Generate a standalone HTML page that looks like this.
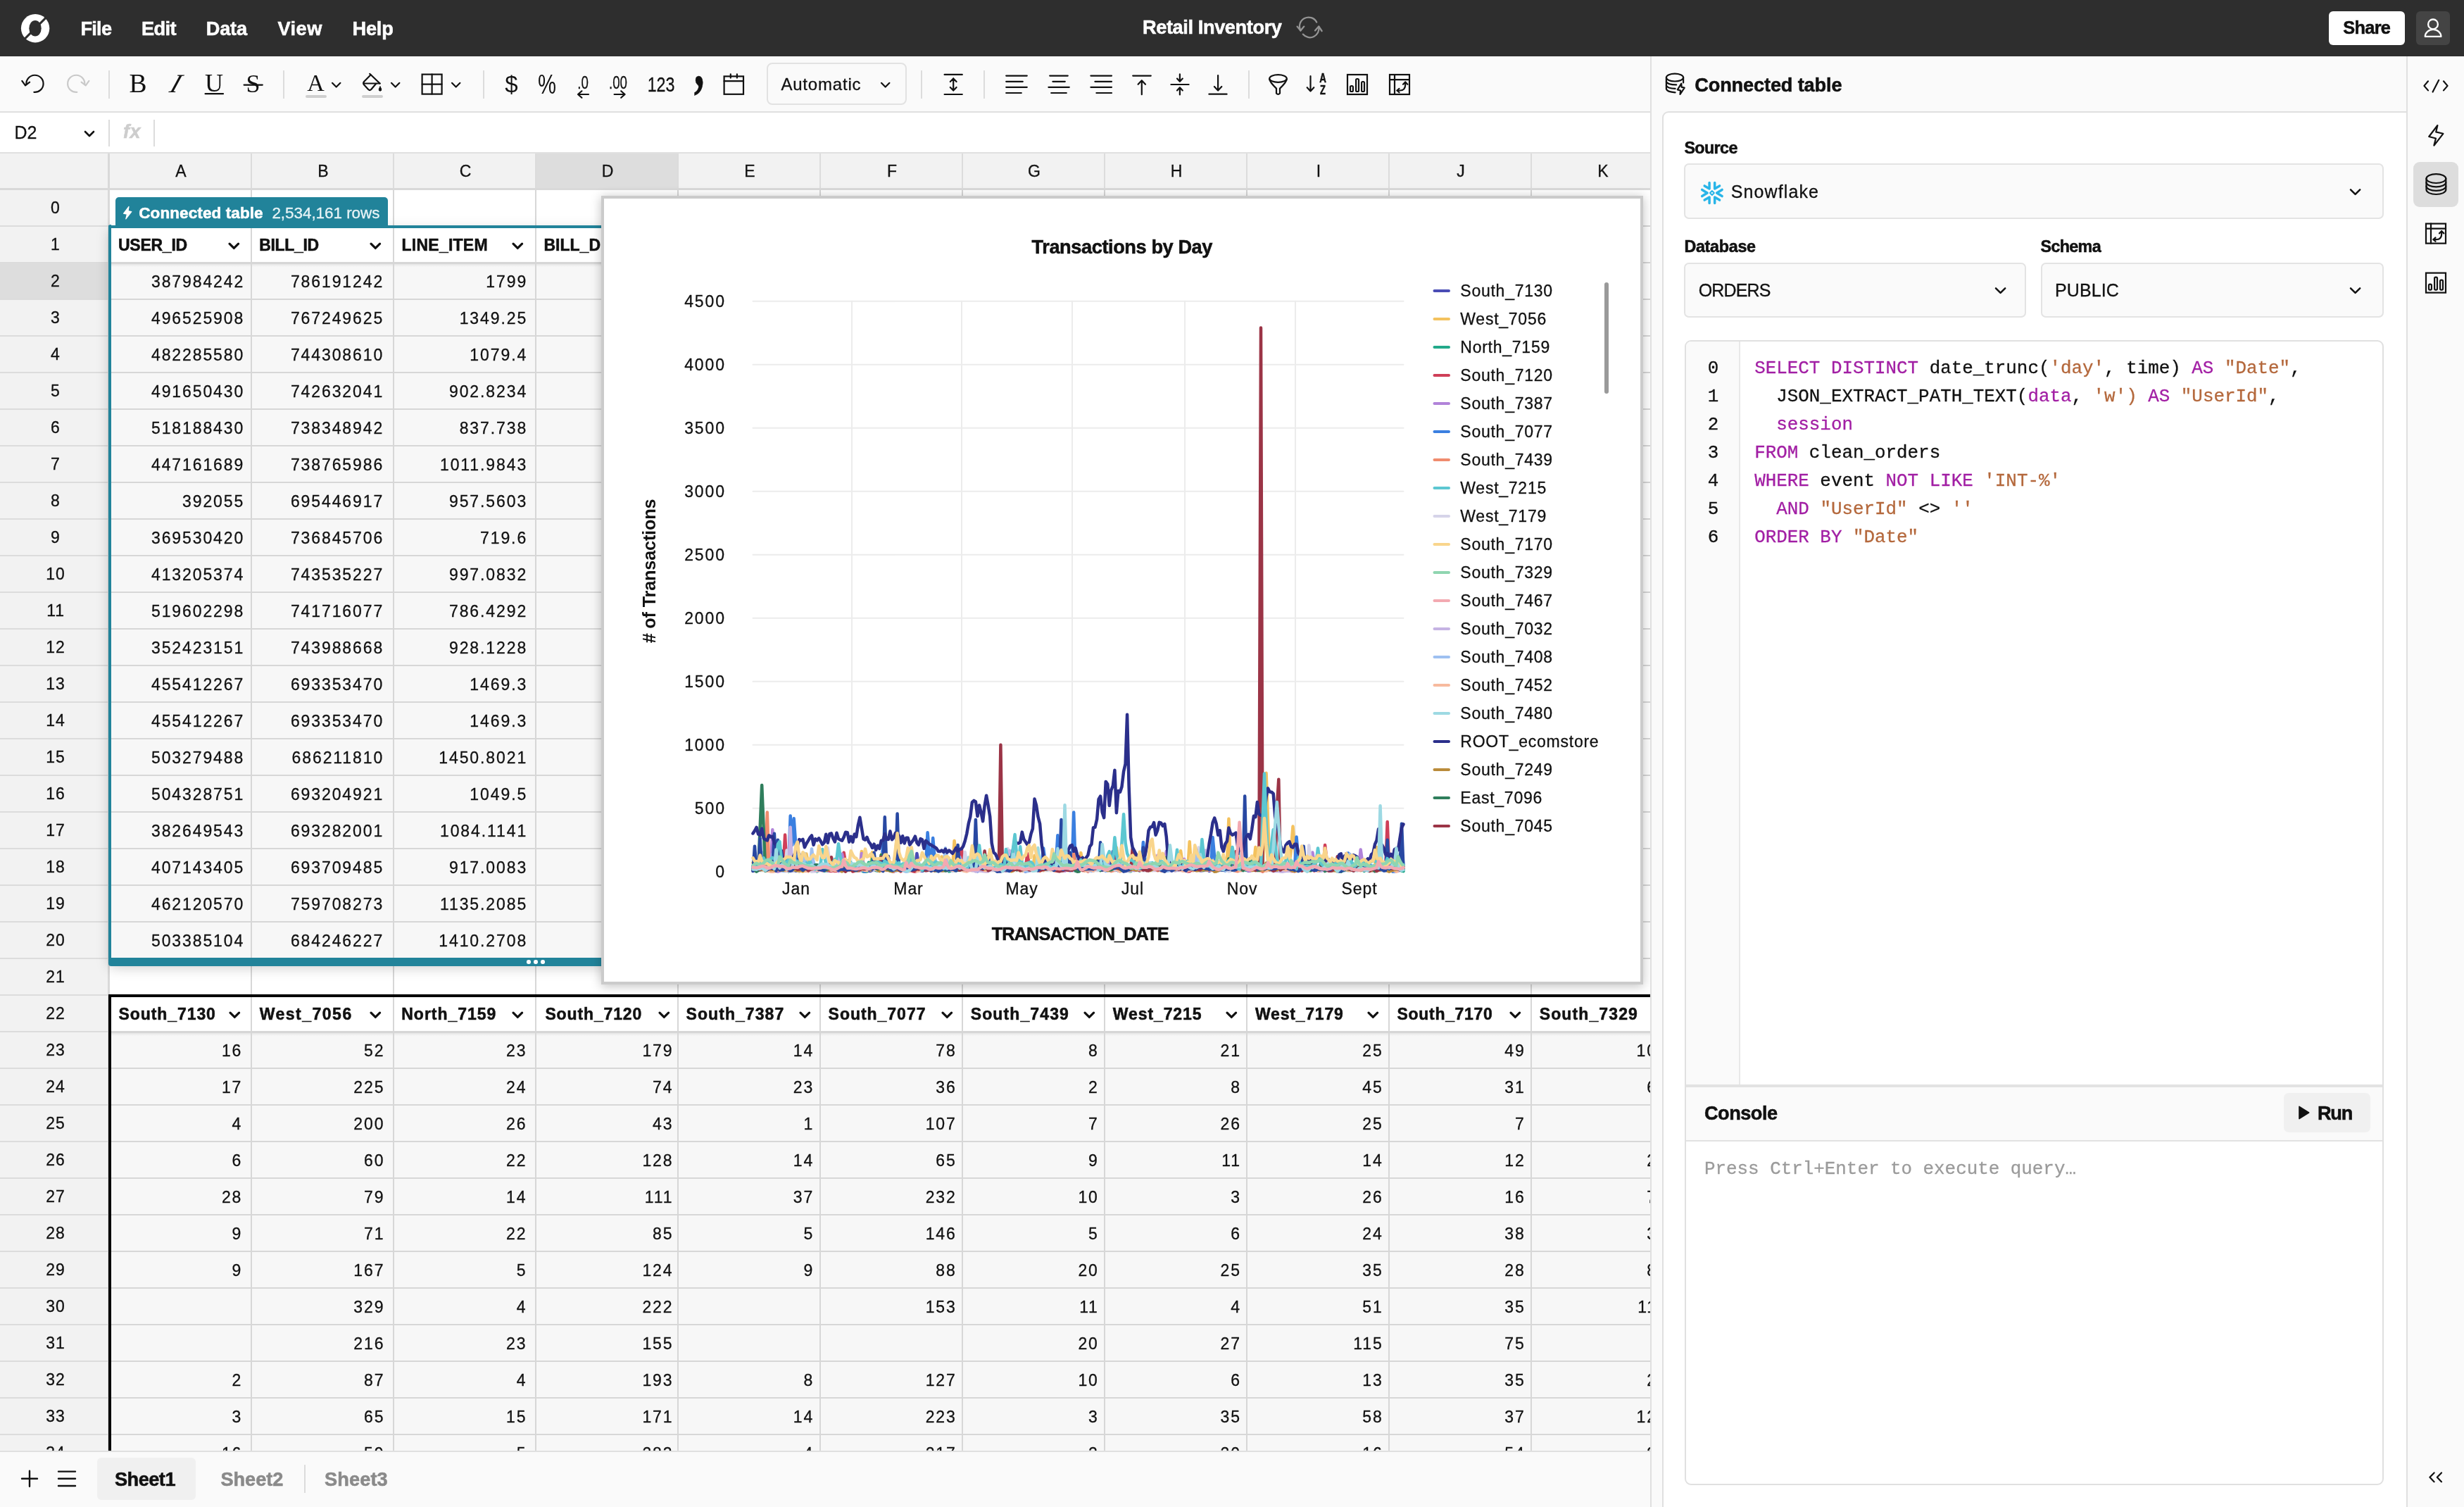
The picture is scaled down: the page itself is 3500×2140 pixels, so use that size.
<!DOCTYPE html>
<html lang="en"><head><meta charset="utf-8"><title>Retail Inventory</title>
<style>
html,body{margin:0;padding:0;background:#fff}
body{width:3500px;height:2140px;overflow:hidden;position:relative;font-family:"Liberation Sans",sans-serif;color:#111}
.t{position:absolute;white-space:nowrap}
.b{font-weight:700;-webkit-text-stroke:0.55px}
.r{-webkit-text-stroke:0.3px}
div{box-sizing:border-box}
</style></head><body>
<div id="app" style="position:absolute;left:0;top:0;width:3500px;height:2140px;will-change:transform">
<div style="position:absolute;left:0px;top:0px;width:3500px;height:80px;background:#2e2e2e"></div>
<svg style="position:absolute;left:20px;top:10px" width="60" height="60" viewBox="20 10 60 60"><circle cx="50.1" cy="40.2" r="20.2" fill="#fff"/><ellipse cx="50" cy="40.3" rx="8.7" ry="11.3" fill="#2e2e2e"/><path d="M34.2 56.1 L66.2 24.1" stroke="#2e2e2e" stroke-width="3" fill="none"/></svg>
<div class="t b" style="letter-spacing:-0.74px;left:114.4px;top:26.5px;font-size:27.2px;line-height:27.2px;color:#fff">File</div>
<div class="t b" style="letter-spacing:-0.59px;left:201.0px;top:26.5px;font-size:27.2px;line-height:27.2px;color:#fff">Edit</div>
<div class="t b" style="letter-spacing:-0.16px;left:292.7px;top:26.5px;font-size:27.2px;line-height:27.2px;color:#fff">Data</div>
<div class="t b" style="letter-spacing:0.45px;left:394.5px;top:26.5px;font-size:27.2px;line-height:27.2px;color:#fff">View</div>
<div class="t b" style="letter-spacing:-0.24px;left:500.6px;top:26.5px;font-size:27.2px;line-height:27.2px;color:#fff">Help</div>
<div class="t b" style="letter-spacing:-0.40px;left:1623.0px;top:24.5px;font-size:27.2px;line-height:27.2px;color:#fff">Retail Inventory</div>
<svg style="position:absolute;left:1830px;top:10px" width="60" height="60" viewBox="1830 10 60 60" fill="none" stroke="#949494" stroke-width="2.3" stroke-linecap="round" stroke-linejoin="round"><path d="M1870.2 31.5 A12.8 12.8 0 0 0 1847.4 43.3"/><path d="M1842.6 37.6 L1847.4 43.6 L1852.3 37.6"/><path d="M1850.8 48.6 A12.8 12.8 0 0 0 1873.2 37.8"/><path d="M1868 43.4 L1873.2 37.4 L1877.6 44"/></svg>
<div style="position:absolute;left:3308px;top:16px;width:108px;height:48px;background:#fff;border-radius:6px"></div>
<div class="t b" style="letter-spacing:-0.72px;left:3328.3px;top:26.8px;font-size:25.4px;line-height:25.4px">Share</div>
<div style="position:absolute;left:3432px;top:16px;width:48px;height:48px;background:#444;border-radius:6px"></div>
<svg style="position:absolute;left:3432px;top:16px" width="48" height="48" viewBox="3432 16 48 48" fill="none" stroke="#fff" stroke-width="2.3" stroke-linejoin="round"><circle cx="3456" cy="34.4" r="6.9"/><path d="M3444.8 51.9 A11.3 10 0 0 1 3467.4 51.9 Z"/></svg>
<div style="position:absolute;left:0px;top:80px;width:2344px;height:80px;background:#fafafa;border-bottom:2px solid #e0e0e0"></div>
<div style="position:absolute;left:153.8px;top:100px;width:2px;height:40px;background:#dcdcdc"></div>
<div style="position:absolute;left:401.8px;top:100px;width:2px;height:40px;background:#dcdcdc"></div>
<div style="position:absolute;left:686px;top:100px;width:2px;height:40px;background:#dcdcdc"></div>
<div style="position:absolute;left:1308px;top:100px;width:2px;height:40px;background:#dcdcdc"></div>
<div style="position:absolute;left:1397px;top:100px;width:2px;height:40px;background:#dcdcdc"></div>
<div style="position:absolute;left:1772.8px;top:100px;width:2px;height:40px;background:#dcdcdc"></div>
<svg style="position:absolute;left:0;top:80px" width="2344" height="80" viewBox="0 80 2344 80" fill="none" stroke="#111" stroke-width="2.2" stroke-linecap="round" stroke-linejoin="round"><path d="M37.4 119.8 A12.1 12.1 0 1 1 48.4 130.9"/><path d="M31.3 114.9 L36 121.4 L42.1 116.6"/><g stroke="#c9c9c9"><path d="M120.3 119.8 A12.1 12.1 0 1 0 109.3 130.9"/><path d="M126.4 114.9 L121.7 121.4 L115.6 116.6"/></g><path d="M291.6 133.2 L317 133.2"/><path d="M346.6 120.6 L372.8 120.6"/><path d="M525.2 104.8 L539.6 118.5"/><path d="M526.6 106.2 L517.2 115.8 Q515.2 118.2 517.2 120.6 L523.4 127.2 Q525.2 128.8 527 127.2 L534.2 118.8"/><path d="M516.6 118.5 H539.6"/><path d="M540 123 Q537.4 127 538.4 128.4 Q540 130 541.6 128.4 Q542.6 127 540 123 Z" fill="#111" stroke-width="1"/><rect x="599.6" y="105.6" width="28" height="28" stroke-linejoin="miter"/><path d="M613.6 105.6 V133.6 M599.6 119.6 H627.6"/><path d="M836 134 H821 M826.4 129.2 L821 134 L826.4 138.8"/><path d="M872.6 134 H887.6 M882.2 129.2 L887.6 134 L882.2 138.8"/><rect x="1028.6" y="108.4" width="27.4" height="25.4" stroke-linejoin="miter"/><path d="M1028.6 115.2 H1056 M1037.8 105.4 V110.6 M1046.9 105.4 V110.6"/><path d="M1341.6 105.9 H1366.8 M1341.6 134 H1366.8 M1354.2 111.4 V128.6 M1349.8 116 L1354.2 111.4 L1358.6 116 M1349.8 124 L1354.2 128.6 L1358.6 124"/><path d="M1429.2 107.6 H1458.8 M1429.2 115.8 H1452.8 M1429.2 123.8 H1458.8 M1429.2 132 H1450.8"/><path d="M1491.2 107.6 H1516.8 M1495.4 115.8 H1512.8 M1489.4 123.8 H1518.8 M1493.2 132 H1514.8"/><path d="M1549.4 107.6 H1579 M1555.4 115.8 H1579 M1549.4 123.8 H1579 M1557.4 132 H1579"/><path d="M1609.2 107.6 H1634.8 M1621.8 134.2 V114.4 M1616.6 119.8 L1621.8 114.2 L1627 119.8"/><path d="M1663.4 120 H1688.6 M1675.9 105.4 V115.6 M1672 111.6 L1675.9 115.8 L1679.8 111.6 M1675.9 134.4 V124.4 M1672 128.4 L1675.9 124.2 L1679.8 128.4"/><path d="M1717.4 133.7 H1742.6 M1730.1 107 V128.4 M1724.9 123 L1730.1 128.6 L1735.3 123"/><ellipse cx="1815.5" cy="111.5" rx="12.3" ry="5.4"/><path d="M1803.2 112.5 Q1804 117 1813 125.6 V132.6 Q1815.5 135.4 1818 132.6 V125.6 Q1827 117 1827.8 112.5"/><path d="M1861.5 108.2 V129.2 M1856.7 124.2 L1861.5 129.4 L1866.3 124.2"/><rect x="1914" y="106" width="28" height="28" stroke-linejoin="miter"/><rect x="1918" y="122" width="3.9" height="8" rx="1.6"/><rect x="1926.1" y="112" width="3.9" height="18" rx="1.6"/><rect x="1934.1" y="116" width="3.9" height="14" rx="1.6"/><rect x="1974" y="106" width="28" height="28" stroke-linejoin="miter"/><path d="M1974 113.1 H2002 M1981 106 V134"/><path d="M1984.5 128.5 H1988.4 Q1996.2 128.5 1996.2 120.6 V116.6"/><path d="M1987.5 125.8 L1984.5 128.5 L1987.5 131.2"/><path d="M1993 119.8 L1996.2 116.6 L1999.4 119.8"/></svg>
<div class="t" style="left:196.0px;transform:translateX(-50%);top:99.8px;font-size:37.5px;line-height:37.5px;font-family:'Liberation Serif',serif">B</div>
<div class="t" style="left:249.6px;transform:translateX(-50%);top:99.8px;font-size:37.5px;line-height:37.5px;font-family:'Liberation Serif',serif;font-style:italic;transform:translateX(-50%) skewX(-20deg)">I</div>
<div class="t" style="left:304.0px;transform:translateX(-50%);top:100.4px;font-size:36px;line-height:36px;font-family:'Liberation Serif',serif">U</div>
<div class="t" style="left:359.6px;transform:translateX(-50%);top:101.2px;font-size:36px;line-height:36px;font-family:'Liberation Serif',serif">S</div>
<div class="t" style="left:448.5px;transform:translateX(-50%);top:101.1px;font-size:34px;line-height:34px;font-family:'Liberation Serif',serif">A</div>
<div style="position:absolute;left:434px;top:135.4px;width:30px;height:3.6px;background:#cfcfcf;border-radius:2px"></div>
<div style="position:absolute;left:514px;top:135.4px;width:30px;height:3.6px;background:#cfcfcf;border-radius:2px"></div>
<svg style="position:absolute;left:469.3px;top:115.3px" width="17.4" height="11.4" viewBox="-8.7 -5.7 17.4 11.4" fill="none" stroke="#111" stroke-width="2.2" stroke-linecap="round" stroke-linejoin="round"><path d="M-5.7 -2.85 L0 2.85 L5.7 -2.85"/></svg>
<svg style="position:absolute;left:553.3px;top:115.3px" width="17.4" height="11.4" viewBox="-8.7 -5.7 17.4 11.4" fill="none" stroke="#111" stroke-width="2.2" stroke-linecap="round" stroke-linejoin="round"><path d="M-5.7 -2.85 L0 2.85 L5.7 -2.85"/></svg>
<svg style="position:absolute;left:639.3px;top:115.3px" width="17.4" height="11.4" viewBox="-8.7 -5.7 17.4 11.4" fill="none" stroke="#111" stroke-width="2.2" stroke-linecap="round" stroke-linejoin="round"><path d="M-5.7 -2.85 L0 2.85 L5.7 -2.85"/></svg>
<div class="t" style="left:726.5px;transform:translateX(-50%);top:102.5px;font-size:33px;line-height:33px">$</div>
<div class="t" style="left:777.0px;transform:translateX(-50%);top:100.6px;font-size:38.5px;line-height:38.5px;transform:translateX(-50%) scaleX(0.76)">%</div>
<div class="t r" style="left:827.8px;transform:translateX(-50%);top:103.7px;font-size:26px;line-height:26px;transform:translateX(-50%) scaleX(0.72)">.0</div>
<div class="t r" style="left:877.8px;transform:translateX(-50%);top:103.7px;font-size:26px;line-height:26px;transform:translateX(-50%) scaleX(0.72)">.00</div>
<div class="t r" style="left:938.5px;transform:translateX(-50%);top:105.4px;font-size:29.4px;line-height:29.4px;transform:translateX(-50%) scaleX(0.79)">123</div>
<div class="t b" style="left:992.6px;transform:translateX(-50%);top:49.2px;font-size:84px;line-height:84px;font-family:'Liberation Serif',serif;transform:translateX(-50%) scale(0.7,1.08)">,</div>
<div class="t b" style="left:1878.8px;transform:translateX(-50%);top:101.5px;font-size:18.6px;line-height:18.6px;transform:translateX(-50%) scaleX(0.72)">A</div>
<div class="t b" style="left:1878.6px;transform:translateX(-50%);top:119.3px;font-size:18px;line-height:18px;transform:translateX(-50%) scaleX(0.72)">Z</div>
<div style="position:absolute;left:1088.5px;top:88.5px;width:199px;height:60.5px;border:2px solid #e2e2e2;border-radius:8px;background:#fafafa"></div>
<div class="t r" style="letter-spacing:0.81px;left:1109.4px;top:107.5px;font-size:24px;line-height:24px">Automatic</div>
<svg style="position:absolute;left:1249.3px;top:115.3px" width="17.4" height="11.4" viewBox="-8.7 -5.7 17.4 11.4" fill="none" stroke="#111" stroke-width="2.2" stroke-linecap="round" stroke-linejoin="round"><path d="M-5.7 -2.85 L0 2.85 L5.7 -2.85"/></svg>
<div style="position:absolute;left:0px;top:160px;width:2344px;height:58px;background:#fff;border-bottom:2px solid #e0e0e0"></div>
<div class="t r" style="letter-spacing:0.02px;left:20.5px;top:175.8px;font-size:25px;line-height:25px">D2</div>
<svg style="position:absolute;left:118px;top:184px" width="18" height="12" viewBox="-9 -6 18 12" fill="none" stroke="#111" stroke-width="2.6" stroke-linecap="round" stroke-linejoin="round"><path d="M-6 -3 L0 3 L6 -3"/></svg>
<div style="position:absolute;left:154px;top:170px;width:2px;height:38px;background:#dcdcdc"></div>
<div class="t b" style="letter-spacing:0.50px;left:175.0px;top:174.1px;font-size:27px;line-height:27px;color:#cdcdcd;font-style:italic">fx</div>
<div style="position:absolute;left:218px;top:170px;width:2px;height:38px;background:#dcdcdc"></div>
<div style="position:absolute;left:0;top:0;width:3500px;height:2140px;clip-path:inset(0 1156px 80px 0)"><div style="position:absolute;left:0px;top:218px;width:2344px;height:1842px;background:#fff"></div>
<div style="position:absolute;left:0px;top:218px;width:2344px;height:50px;background:#f2f2f2"></div>
<div style="position:absolute;left:0px;top:268px;width:154px;height:1792px;background:#f2f2f2"></div>
<div style="position:absolute;left:762px;top:218px;width:200px;height:49px;background:#dddddd"></div>
<div style="position:absolute;left:0px;top:374px;width:154px;height:50px;background:#dddddd"></div>
<div style="position:absolute;left:158px;top:374px;width:1010px;height:986px;background:#f7f7f7"></div>
<div style="position:absolute;left:158px;top:1466px;width:2186px;height:600px;background:#f7f7f7"></div>
<div style="position:absolute;left:158px;top:375.4px;width:1010px;height:3.4px;background:linear-gradient(#e6e6e6,#f7f7f7)"></div>
<div style="position:absolute;left:158px;top:1467.4px;width:2186px;height:3.4px;background:linear-gradient(#e6e6e6,#f7f7f7)"></div>
<div style="position:absolute;left:0px;top:320px;width:154px;height:2px;background:#dcdcdc"></div>
<div style="position:absolute;left:154px;top:320px;width:2190px;height:2px;background:#d7d7d7"></div>
<div style="position:absolute;left:0px;top:372px;width:154px;height:2px;background:#dcdcdc"></div>
<div style="position:absolute;left:154px;top:372px;width:2190px;height:2px;background:#d7d7d7"></div>
<div style="position:absolute;left:0px;top:424px;width:154px;height:2px;background:#dcdcdc"></div>
<div style="position:absolute;left:154px;top:424px;width:2190px;height:2px;background:#d7d7d7"></div>
<div style="position:absolute;left:0px;top:476px;width:154px;height:2px;background:#dcdcdc"></div>
<div style="position:absolute;left:154px;top:476px;width:2190px;height:2px;background:#d7d7d7"></div>
<div style="position:absolute;left:0px;top:528px;width:154px;height:2px;background:#dcdcdc"></div>
<div style="position:absolute;left:154px;top:528px;width:2190px;height:2px;background:#d7d7d7"></div>
<div style="position:absolute;left:0px;top:580px;width:154px;height:2px;background:#dcdcdc"></div>
<div style="position:absolute;left:154px;top:580px;width:2190px;height:2px;background:#d7d7d7"></div>
<div style="position:absolute;left:0px;top:632px;width:154px;height:2px;background:#dcdcdc"></div>
<div style="position:absolute;left:154px;top:632px;width:2190px;height:2px;background:#d7d7d7"></div>
<div style="position:absolute;left:0px;top:684px;width:154px;height:2px;background:#dcdcdc"></div>
<div style="position:absolute;left:154px;top:684px;width:2190px;height:2px;background:#d7d7d7"></div>
<div style="position:absolute;left:0px;top:736px;width:154px;height:2px;background:#dcdcdc"></div>
<div style="position:absolute;left:154px;top:736px;width:2190px;height:2px;background:#d7d7d7"></div>
<div style="position:absolute;left:0px;top:788px;width:154px;height:2px;background:#dcdcdc"></div>
<div style="position:absolute;left:154px;top:788px;width:2190px;height:2px;background:#d7d7d7"></div>
<div style="position:absolute;left:0px;top:840px;width:154px;height:2px;background:#dcdcdc"></div>
<div style="position:absolute;left:154px;top:840px;width:2190px;height:2px;background:#d7d7d7"></div>
<div style="position:absolute;left:0px;top:892px;width:154px;height:2px;background:#dcdcdc"></div>
<div style="position:absolute;left:154px;top:892px;width:2190px;height:2px;background:#d7d7d7"></div>
<div style="position:absolute;left:0px;top:944px;width:154px;height:2px;background:#dcdcdc"></div>
<div style="position:absolute;left:154px;top:944px;width:2190px;height:2px;background:#d7d7d7"></div>
<div style="position:absolute;left:0px;top:996px;width:154px;height:2px;background:#dcdcdc"></div>
<div style="position:absolute;left:154px;top:996px;width:2190px;height:2px;background:#d7d7d7"></div>
<div style="position:absolute;left:0px;top:1048px;width:154px;height:2px;background:#dcdcdc"></div>
<div style="position:absolute;left:154px;top:1048px;width:2190px;height:2px;background:#d7d7d7"></div>
<div style="position:absolute;left:0px;top:1100px;width:154px;height:2px;background:#dcdcdc"></div>
<div style="position:absolute;left:154px;top:1100px;width:2190px;height:2px;background:#d7d7d7"></div>
<div style="position:absolute;left:0px;top:1152px;width:154px;height:2px;background:#dcdcdc"></div>
<div style="position:absolute;left:154px;top:1152px;width:2190px;height:2px;background:#d7d7d7"></div>
<div style="position:absolute;left:0px;top:1204px;width:154px;height:2px;background:#dcdcdc"></div>
<div style="position:absolute;left:154px;top:1204px;width:2190px;height:2px;background:#d7d7d7"></div>
<div style="position:absolute;left:0px;top:1256px;width:154px;height:2px;background:#dcdcdc"></div>
<div style="position:absolute;left:154px;top:1256px;width:2190px;height:2px;background:#d7d7d7"></div>
<div style="position:absolute;left:0px;top:1308px;width:154px;height:2px;background:#dcdcdc"></div>
<div style="position:absolute;left:154px;top:1308px;width:2190px;height:2px;background:#d7d7d7"></div>
<div style="position:absolute;left:0px;top:1360px;width:154px;height:2px;background:#dcdcdc"></div>
<div style="position:absolute;left:154px;top:1360px;width:2190px;height:2px;background:#d7d7d7"></div>
<div style="position:absolute;left:0px;top:1412px;width:154px;height:2px;background:#dcdcdc"></div>
<div style="position:absolute;left:154px;top:1412px;width:2190px;height:2px;background:#d7d7d7"></div>
<div style="position:absolute;left:0px;top:1464px;width:154px;height:2px;background:#dcdcdc"></div>
<div style="position:absolute;left:154px;top:1464px;width:2190px;height:2px;background:#d7d7d7"></div>
<div style="position:absolute;left:0px;top:1516px;width:154px;height:2px;background:#dcdcdc"></div>
<div style="position:absolute;left:154px;top:1516px;width:2190px;height:2px;background:#d7d7d7"></div>
<div style="position:absolute;left:0px;top:1568px;width:154px;height:2px;background:#dcdcdc"></div>
<div style="position:absolute;left:154px;top:1568px;width:2190px;height:2px;background:#d7d7d7"></div>
<div style="position:absolute;left:0px;top:1620px;width:154px;height:2px;background:#dcdcdc"></div>
<div style="position:absolute;left:154px;top:1620px;width:2190px;height:2px;background:#d7d7d7"></div>
<div style="position:absolute;left:0px;top:1672px;width:154px;height:2px;background:#dcdcdc"></div>
<div style="position:absolute;left:154px;top:1672px;width:2190px;height:2px;background:#d7d7d7"></div>
<div style="position:absolute;left:0px;top:1724px;width:154px;height:2px;background:#dcdcdc"></div>
<div style="position:absolute;left:154px;top:1724px;width:2190px;height:2px;background:#d7d7d7"></div>
<div style="position:absolute;left:0px;top:1776px;width:154px;height:2px;background:#dcdcdc"></div>
<div style="position:absolute;left:154px;top:1776px;width:2190px;height:2px;background:#d7d7d7"></div>
<div style="position:absolute;left:0px;top:1828px;width:154px;height:2px;background:#dcdcdc"></div>
<div style="position:absolute;left:154px;top:1828px;width:2190px;height:2px;background:#d7d7d7"></div>
<div style="position:absolute;left:0px;top:1880px;width:154px;height:2px;background:#dcdcdc"></div>
<div style="position:absolute;left:154px;top:1880px;width:2190px;height:2px;background:#d7d7d7"></div>
<div style="position:absolute;left:0px;top:1932px;width:154px;height:2px;background:#dcdcdc"></div>
<div style="position:absolute;left:154px;top:1932px;width:2190px;height:2px;background:#d7d7d7"></div>
<div style="position:absolute;left:0px;top:1984px;width:154px;height:2px;background:#dcdcdc"></div>
<div style="position:absolute;left:154px;top:1984px;width:2190px;height:2px;background:#d7d7d7"></div>
<div style="position:absolute;left:0px;top:2036px;width:154px;height:2px;background:#dcdcdc"></div>
<div style="position:absolute;left:154px;top:2036px;width:2190px;height:2px;background:#d7d7d7"></div>
<div style="position:absolute;left:0px;top:2088px;width:154px;height:2px;background:#dcdcdc"></div>
<div style="position:absolute;left:154px;top:2088px;width:2190px;height:2px;background:#d7d7d7"></div>
<div style="position:absolute;left:356px;top:218px;width:2px;height:50px;background:#dcdcdc"></div>
<div style="position:absolute;left:356px;top:268px;width:2px;height:1792px;background:#d7d7d7"></div>
<div style="position:absolute;left:558px;top:218px;width:2px;height:50px;background:#dcdcdc"></div>
<div style="position:absolute;left:558px;top:268px;width:2px;height:1792px;background:#d7d7d7"></div>
<div style="position:absolute;left:760px;top:218px;width:2px;height:50px;background:#dcdcdc"></div>
<div style="position:absolute;left:760px;top:268px;width:2px;height:1792px;background:#d7d7d7"></div>
<div style="position:absolute;left:962px;top:218px;width:2px;height:50px;background:#dcdcdc"></div>
<div style="position:absolute;left:962px;top:268px;width:2px;height:1792px;background:#d7d7d7"></div>
<div style="position:absolute;left:1164px;top:218px;width:2px;height:50px;background:#dcdcdc"></div>
<div style="position:absolute;left:1164px;top:268px;width:2px;height:1792px;background:#d7d7d7"></div>
<div style="position:absolute;left:1366px;top:218px;width:2px;height:50px;background:#dcdcdc"></div>
<div style="position:absolute;left:1366px;top:268px;width:2px;height:1792px;background:#d7d7d7"></div>
<div style="position:absolute;left:1568px;top:218px;width:2px;height:50px;background:#dcdcdc"></div>
<div style="position:absolute;left:1568px;top:268px;width:2px;height:1792px;background:#d7d7d7"></div>
<div style="position:absolute;left:1770px;top:218px;width:2px;height:50px;background:#dcdcdc"></div>
<div style="position:absolute;left:1770px;top:268px;width:2px;height:1792px;background:#d7d7d7"></div>
<div style="position:absolute;left:1972px;top:218px;width:2px;height:50px;background:#dcdcdc"></div>
<div style="position:absolute;left:1972px;top:268px;width:2px;height:1792px;background:#d7d7d7"></div>
<div style="position:absolute;left:2174px;top:218px;width:2px;height:50px;background:#dcdcdc"></div>
<div style="position:absolute;left:2174px;top:268px;width:2px;height:1792px;background:#d7d7d7"></div>
<div style="position:absolute;left:2376px;top:218px;width:2px;height:50px;background:#dcdcdc"></div>
<div style="position:absolute;left:2376px;top:268px;width:2px;height:1792px;background:#d7d7d7"></div>
<div style="position:absolute;left:0px;top:266.5px;width:2344px;height:3px;background:#d9d9d9"></div>
<div style="position:absolute;left:153px;top:218px;width:3px;height:1842px;background:#d9d9d9"></div>
<div class="t r" style="left:257.0px;transform:translateX(-50%);top:232.0px;font-size:23px;line-height:23px">A</div>
<div class="t r" style="left:459.0px;transform:translateX(-50%);top:232.0px;font-size:23px;line-height:23px">B</div>
<div class="t r" style="left:661.0px;transform:translateX(-50%);top:232.0px;font-size:23px;line-height:23px">C</div>
<div class="t r" style="left:863.0px;transform:translateX(-50%);top:232.0px;font-size:23px;line-height:23px">D</div>
<div class="t r" style="left:1065.0px;transform:translateX(-50%);top:232.0px;font-size:23px;line-height:23px">E</div>
<div class="t r" style="left:1267.0px;transform:translateX(-50%);top:232.0px;font-size:23px;line-height:23px">F</div>
<div class="t r" style="left:1469.0px;transform:translateX(-50%);top:232.0px;font-size:23px;line-height:23px">G</div>
<div class="t r" style="left:1671.0px;transform:translateX(-50%);top:232.0px;font-size:23px;line-height:23px">H</div>
<div class="t r" style="left:1873.0px;transform:translateX(-50%);top:232.0px;font-size:23px;line-height:23px">I</div>
<div class="t r" style="left:2075.0px;transform:translateX(-50%);top:232.0px;font-size:23px;line-height:23px">J</div>
<div class="t r" style="left:2277.0px;transform:translateX(-50%);top:232.0px;font-size:23px;line-height:23px">K</div>
<div class="t r" style="left:78.5px;transform:translateX(-50%);top:283.5px;font-size:23px;line-height:23px">0</div>
<div class="t r" style="left:78.5px;transform:translateX(-50%);top:335.5px;font-size:23px;line-height:23px">1</div>
<div class="t r" style="left:78.5px;transform:translateX(-50%);top:387.5px;font-size:23px;line-height:23px">2</div>
<div class="t r" style="left:78.5px;transform:translateX(-50%);top:439.5px;font-size:23px;line-height:23px">3</div>
<div class="t r" style="left:78.5px;transform:translateX(-50%);top:491.5px;font-size:23px;line-height:23px">4</div>
<div class="t r" style="left:78.5px;transform:translateX(-50%);top:543.5px;font-size:23px;line-height:23px">5</div>
<div class="t r" style="left:78.5px;transform:translateX(-50%);top:595.5px;font-size:23px;line-height:23px">6</div>
<div class="t r" style="left:78.5px;transform:translateX(-50%);top:647.5px;font-size:23px;line-height:23px">7</div>
<div class="t r" style="left:78.5px;transform:translateX(-50%);top:699.5px;font-size:23px;line-height:23px">8</div>
<div class="t r" style="left:78.5px;transform:translateX(-50%);top:751.5px;font-size:23px;line-height:23px">9</div>
<div class="t r" style="letter-spacing:0.90px;left:79.0px;transform:translateX(-50%);top:803.5px;font-size:23px;line-height:23px">10</div>
<div class="t r" style="letter-spacing:0.90px;left:79.0px;transform:translateX(-50%);top:855.5px;font-size:23px;line-height:23px">11</div>
<div class="t r" style="letter-spacing:0.90px;left:79.0px;transform:translateX(-50%);top:907.5px;font-size:23px;line-height:23px">12</div>
<div class="t r" style="letter-spacing:0.90px;left:79.0px;transform:translateX(-50%);top:959.5px;font-size:23px;line-height:23px">13</div>
<div class="t r" style="letter-spacing:0.90px;left:79.0px;transform:translateX(-50%);top:1011.5px;font-size:23px;line-height:23px">14</div>
<div class="t r" style="letter-spacing:0.90px;left:79.0px;transform:translateX(-50%);top:1063.5px;font-size:23px;line-height:23px">15</div>
<div class="t r" style="letter-spacing:0.90px;left:79.0px;transform:translateX(-50%);top:1115.5px;font-size:23px;line-height:23px">16</div>
<div class="t r" style="letter-spacing:0.90px;left:79.0px;transform:translateX(-50%);top:1167.5px;font-size:23px;line-height:23px">17</div>
<div class="t r" style="letter-spacing:0.90px;left:79.0px;transform:translateX(-50%);top:1219.5px;font-size:23px;line-height:23px">18</div>
<div class="t r" style="letter-spacing:0.90px;left:79.0px;transform:translateX(-50%);top:1271.5px;font-size:23px;line-height:23px">19</div>
<div class="t r" style="letter-spacing:0.90px;left:79.0px;transform:translateX(-50%);top:1323.5px;font-size:23px;line-height:23px">20</div>
<div class="t r" style="letter-spacing:0.90px;left:79.0px;transform:translateX(-50%);top:1375.5px;font-size:23px;line-height:23px">21</div>
<div class="t r" style="letter-spacing:0.90px;left:79.0px;transform:translateX(-50%);top:1427.5px;font-size:23px;line-height:23px">22</div>
<div class="t r" style="letter-spacing:0.90px;left:79.0px;transform:translateX(-50%);top:1479.5px;font-size:23px;line-height:23px">23</div>
<div class="t r" style="letter-spacing:0.90px;left:79.0px;transform:translateX(-50%);top:1531.5px;font-size:23px;line-height:23px">24</div>
<div class="t r" style="letter-spacing:0.90px;left:79.0px;transform:translateX(-50%);top:1583.5px;font-size:23px;line-height:23px">25</div>
<div class="t r" style="letter-spacing:0.90px;left:79.0px;transform:translateX(-50%);top:1635.5px;font-size:23px;line-height:23px">26</div>
<div class="t r" style="letter-spacing:0.90px;left:79.0px;transform:translateX(-50%);top:1687.5px;font-size:23px;line-height:23px">27</div>
<div class="t r" style="letter-spacing:0.90px;left:79.0px;transform:translateX(-50%);top:1739.5px;font-size:23px;line-height:23px">28</div>
<div class="t r" style="letter-spacing:0.90px;left:79.0px;transform:translateX(-50%);top:1791.5px;font-size:23px;line-height:23px">29</div>
<div class="t r" style="letter-spacing:0.90px;left:79.0px;transform:translateX(-50%);top:1843.5px;font-size:23px;line-height:23px">30</div>
<div class="t r" style="letter-spacing:0.90px;left:79.0px;transform:translateX(-50%);top:1895.5px;font-size:23px;line-height:23px">31</div>
<div class="t r" style="letter-spacing:0.90px;left:79.0px;transform:translateX(-50%);top:1947.5px;font-size:23px;line-height:23px">32</div>
<div class="t r" style="letter-spacing:0.90px;left:79.0px;transform:translateX(-50%);top:1999.5px;font-size:23px;line-height:23px">33</div>
<div class="t r" style="letter-spacing:0.90px;left:79.0px;transform:translateX(-50%);top:2051.5px;font-size:23px;line-height:23px">34</div>
<div style="position:absolute;left:156px;top:323px;width:1012px;height:1046px;box-shadow:0 4px 18px rgba(0,0,0,0.22);background:transparent"></div>
<div style="position:absolute;left:158px;top:323px;width:1010px;height:50px;background:#fff"></div>
<div style="position:absolute;left:356px;top:323px;width:2px;height:50px;background:#d7d7d7"></div>
<div style="position:absolute;left:558px;top:323px;width:2px;height:50px;background:#d7d7d7"></div>
<div style="position:absolute;left:760px;top:323px;width:2px;height:50px;background:#d7d7d7"></div>
<div style="position:absolute;left:962px;top:323px;width:2px;height:50px;background:#d7d7d7"></div>
<div style="position:absolute;left:1164px;top:323px;width:2px;height:50px;background:#d7d7d7"></div>
<div style="position:absolute;left:158px;top:372px;width:1010px;height:3.4px;background:#d6d6d6"></div>
<div class="t b" style="letter-spacing:-0.26px;left:168.0px;top:337.1px;font-size:23px;line-height:23px">USER_ID</div>
<svg style="position:absolute;left:323.4px;top:343px" width="18.6" height="12.6" viewBox="-9.3 -6.3 18.6 12.6" fill="none" stroke="#111" stroke-width="3.2" stroke-linecap="round" stroke-linejoin="round"><path d="M-6.3 -3.15 L0 3.15 L6.3 -3.15"/></svg>
<div class="t b" style="letter-spacing:-0.31px;left:368.2px;top:337.1px;font-size:23px;line-height:23px">BILL_ID</div>
<svg style="position:absolute;left:523.6px;top:343px" width="18.6" height="12.6" viewBox="-9.3 -6.3 18.6 12.6" fill="none" stroke="#111" stroke-width="3.2" stroke-linecap="round" stroke-linejoin="round"><path d="M-6.3 -3.15 L0 3.15 L6.3 -3.15"/></svg>
<div class="t b" style="letter-spacing:0.25px;left:570.5px;top:337.1px;font-size:23px;line-height:23px">LINE_ITEM</div>
<svg style="position:absolute;left:725.6px;top:343px" width="18.6" height="12.6" viewBox="-9.3 -6.3 18.6 12.6" fill="none" stroke="#111" stroke-width="3.2" stroke-linecap="round" stroke-linejoin="round"><path d="M-6.3 -3.15 L0 3.15 L6.3 -3.15"/></svg>
<div class="t b" style="left:772.5px;top:337.1px;font-size:23px;line-height:23px">BILL_DISCOUNT</div>
<div class="t r" style="letter-spacing:1.90px;right:3152.8px;top:388.5px;font-size:23px;line-height:23px">387984242</div>
<div class="t r" style="letter-spacing:1.90px;right:2954.9px;top:388.5px;font-size:23px;line-height:23px">786191242</div>
<div class="t r" style="letter-spacing:1.90px;right:2750.9px;top:388.5px;font-size:23px;line-height:23px">1799</div>
<div class="t r" style="letter-spacing:1.90px;right:3152.8px;top:440.5px;font-size:23px;line-height:23px">496525908</div>
<div class="t r" style="letter-spacing:1.90px;right:2954.9px;top:440.5px;font-size:23px;line-height:23px">767249625</div>
<div class="t r" style="letter-spacing:1.90px;right:2750.9px;top:440.5px;font-size:23px;line-height:23px">1349.25</div>
<div class="t r" style="letter-spacing:1.90px;right:3152.8px;top:492.5px;font-size:23px;line-height:23px">482285580</div>
<div class="t r" style="letter-spacing:1.90px;right:2954.9px;top:492.5px;font-size:23px;line-height:23px">744308610</div>
<div class="t r" style="letter-spacing:1.90px;right:2750.9px;top:492.5px;font-size:23px;line-height:23px">1079.4</div>
<div class="t r" style="letter-spacing:1.90px;right:3152.8px;top:544.5px;font-size:23px;line-height:23px">491650430</div>
<div class="t r" style="letter-spacing:1.90px;right:2954.9px;top:544.5px;font-size:23px;line-height:23px">742632041</div>
<div class="t r" style="letter-spacing:1.90px;right:2750.9px;top:544.5px;font-size:23px;line-height:23px">902.8234</div>
<div class="t r" style="letter-spacing:1.90px;right:3152.8px;top:596.5px;font-size:23px;line-height:23px">518188430</div>
<div class="t r" style="letter-spacing:1.90px;right:2954.9px;top:596.5px;font-size:23px;line-height:23px">738348942</div>
<div class="t r" style="letter-spacing:1.90px;right:2750.9px;top:596.5px;font-size:23px;line-height:23px">837.738</div>
<div class="t r" style="letter-spacing:1.90px;right:3152.8px;top:648.5px;font-size:23px;line-height:23px">447161689</div>
<div class="t r" style="letter-spacing:1.90px;right:2954.9px;top:648.5px;font-size:23px;line-height:23px">738765986</div>
<div class="t r" style="letter-spacing:1.90px;right:2750.9px;top:648.5px;font-size:23px;line-height:23px">1011.9843</div>
<div class="t r" style="letter-spacing:1.90px;right:3152.8px;top:700.5px;font-size:23px;line-height:23px">392055</div>
<div class="t r" style="letter-spacing:1.90px;right:2954.9px;top:700.5px;font-size:23px;line-height:23px">695446917</div>
<div class="t r" style="letter-spacing:1.90px;right:2750.9px;top:700.5px;font-size:23px;line-height:23px">957.5603</div>
<div class="t r" style="letter-spacing:1.90px;right:3152.8px;top:752.5px;font-size:23px;line-height:23px">369530420</div>
<div class="t r" style="letter-spacing:1.90px;right:2954.9px;top:752.5px;font-size:23px;line-height:23px">736845706</div>
<div class="t r" style="letter-spacing:1.90px;right:2750.9px;top:752.5px;font-size:23px;line-height:23px">719.6</div>
<div class="t r" style="letter-spacing:1.90px;right:3152.8px;top:804.5px;font-size:23px;line-height:23px">413205374</div>
<div class="t r" style="letter-spacing:1.90px;right:2954.9px;top:804.5px;font-size:23px;line-height:23px">743535227</div>
<div class="t r" style="letter-spacing:1.90px;right:2750.9px;top:804.5px;font-size:23px;line-height:23px">997.0832</div>
<div class="t r" style="letter-spacing:1.90px;right:3152.8px;top:856.5px;font-size:23px;line-height:23px">519602298</div>
<div class="t r" style="letter-spacing:1.90px;right:2954.9px;top:856.5px;font-size:23px;line-height:23px">741716077</div>
<div class="t r" style="letter-spacing:1.90px;right:2750.9px;top:856.5px;font-size:23px;line-height:23px">786.4292</div>
<div class="t r" style="letter-spacing:1.90px;right:3152.8px;top:908.5px;font-size:23px;line-height:23px">352423151</div>
<div class="t r" style="letter-spacing:1.90px;right:2954.9px;top:908.5px;font-size:23px;line-height:23px">743988668</div>
<div class="t r" style="letter-spacing:1.90px;right:2750.9px;top:908.5px;font-size:23px;line-height:23px">928.1228</div>
<div class="t r" style="letter-spacing:1.90px;right:3152.8px;top:960.5px;font-size:23px;line-height:23px">455412267</div>
<div class="t r" style="letter-spacing:1.90px;right:2954.9px;top:960.5px;font-size:23px;line-height:23px">693353470</div>
<div class="t r" style="letter-spacing:1.90px;right:2750.9px;top:960.5px;font-size:23px;line-height:23px">1469.3</div>
<div class="t r" style="letter-spacing:1.90px;right:3152.8px;top:1012.5px;font-size:23px;line-height:23px">455412267</div>
<div class="t r" style="letter-spacing:1.90px;right:2954.9px;top:1012.5px;font-size:23px;line-height:23px">693353470</div>
<div class="t r" style="letter-spacing:1.90px;right:2750.9px;top:1012.5px;font-size:23px;line-height:23px">1469.3</div>
<div class="t r" style="letter-spacing:1.90px;right:3152.8px;top:1064.5px;font-size:23px;line-height:23px">503279488</div>
<div class="t r" style="letter-spacing:1.90px;right:2954.9px;top:1064.5px;font-size:23px;line-height:23px">686211810</div>
<div class="t r" style="letter-spacing:1.90px;right:2750.9px;top:1064.5px;font-size:23px;line-height:23px">1450.8021</div>
<div class="t r" style="letter-spacing:1.90px;right:3152.8px;top:1116.5px;font-size:23px;line-height:23px">504328751</div>
<div class="t r" style="letter-spacing:1.90px;right:2954.9px;top:1116.5px;font-size:23px;line-height:23px">693204921</div>
<div class="t r" style="letter-spacing:1.90px;right:2750.9px;top:1116.5px;font-size:23px;line-height:23px">1049.5</div>
<div class="t r" style="letter-spacing:1.90px;right:3152.8px;top:1168.5px;font-size:23px;line-height:23px">382649543</div>
<div class="t r" style="letter-spacing:1.90px;right:2954.9px;top:1168.5px;font-size:23px;line-height:23px">693282001</div>
<div class="t r" style="letter-spacing:1.90px;right:2750.9px;top:1168.5px;font-size:23px;line-height:23px">1084.1141</div>
<div class="t r" style="letter-spacing:1.90px;right:3152.8px;top:1220.5px;font-size:23px;line-height:23px">407143405</div>
<div class="t r" style="letter-spacing:1.90px;right:2954.9px;top:1220.5px;font-size:23px;line-height:23px">693709485</div>
<div class="t r" style="letter-spacing:1.90px;right:2750.9px;top:1220.5px;font-size:23px;line-height:23px">917.0083</div>
<div class="t r" style="letter-spacing:1.90px;right:3152.8px;top:1272.5px;font-size:23px;line-height:23px">462120570</div>
<div class="t r" style="letter-spacing:1.90px;right:2954.9px;top:1272.5px;font-size:23px;line-height:23px">759708273</div>
<div class="t r" style="letter-spacing:1.90px;right:2750.9px;top:1272.5px;font-size:23px;line-height:23px">1135.2085</div>
<div class="t r" style="letter-spacing:1.90px;right:3152.8px;top:1324.5px;font-size:23px;line-height:23px">503385104</div>
<div class="t r" style="letter-spacing:1.90px;right:2954.9px;top:1324.5px;font-size:23px;line-height:23px">684246227</div>
<div class="t r" style="letter-spacing:1.90px;right:2750.9px;top:1324.5px;font-size:23px;line-height:23px">1410.2708</div>
<div style="position:absolute;left:154px;top:320px;width:1014px;height:4px;background:#21839a"></div>
<div style="position:absolute;left:154px;top:319px;width:4px;height:1046px;background:#21839a;border-radius:3px 0 0 3px"></div>
<div style="position:absolute;left:154px;top:1360px;width:1014px;height:12px;background:#21839a;border-radius:0 0 0 4px"></div>
<div style="position:absolute;left:748.3px;top:1363.2px;width:5.6px;height:5.6px;background:#fff;border-radius:50%"></div>
<div style="position:absolute;left:758.3px;top:1363.2px;width:5.6px;height:5.6px;background:#fff;border-radius:50%"></div>
<div style="position:absolute;left:768.3px;top:1363.2px;width:5.6px;height:5.6px;background:#fff;border-radius:50%"></div>
<div style="position:absolute;left:164.4px;top:280.4px;width:387px;height:41px;background:#21839a;border-radius:5px 5px 0 0"></div>
<svg style="position:absolute;left:172px;top:286px" width="18" height="28" viewBox="172 286 18 28"><path d="M183 293.4 L175.6 303.2 L180.4 304.2 L178.8 311 L186.8 300.6 L182 299.6 Z" fill="#fff" stroke="#fff" stroke-width="1.2" stroke-linejoin="round"/></svg>
<div class="t b" style="letter-spacing:0.10px;left:197.2px;top:291.8px;font-size:22.5px;line-height:22.5px;color:#fff">Connected table</div>
<div class="t r" style="letter-spacing:-0.06px;left:386.4px;top:291.8px;font-size:22.5px;line-height:22.5px;color:#e6f3f6">2,534,161 rows</div>
<div style="position:absolute;left:158px;top:1415px;width:2186px;height:50px;background:#fff"></div>
<div style="position:absolute;left:356px;top:1415px;width:2px;height:50px;background:#d7d7d7"></div>
<div style="position:absolute;left:558px;top:1415px;width:2px;height:50px;background:#d7d7d7"></div>
<div style="position:absolute;left:760px;top:1415px;width:2px;height:50px;background:#d7d7d7"></div>
<div style="position:absolute;left:962px;top:1415px;width:2px;height:50px;background:#d7d7d7"></div>
<div style="position:absolute;left:1164px;top:1415px;width:2px;height:50px;background:#d7d7d7"></div>
<div style="position:absolute;left:1366px;top:1415px;width:2px;height:50px;background:#d7d7d7"></div>
<div style="position:absolute;left:1568px;top:1415px;width:2px;height:50px;background:#d7d7d7"></div>
<div style="position:absolute;left:1770px;top:1415px;width:2px;height:50px;background:#d7d7d7"></div>
<div style="position:absolute;left:1972px;top:1415px;width:2px;height:50px;background:#d7d7d7"></div>
<div style="position:absolute;left:2174px;top:1415px;width:2px;height:50px;background:#d7d7d7"></div>
<div style="position:absolute;left:2376px;top:1415px;width:2px;height:50px;background:#d7d7d7"></div>
<div style="position:absolute;left:158px;top:1464px;width:2186px;height:3.4px;background:#d6d6d6"></div>
<div class="t b" style="letter-spacing:0.92px;left:168.5px;top:1429.3px;font-size:23px;line-height:23px">South_7130</div>
<svg style="position:absolute;left:323.7px;top:1435.3px" width="18.6" height="12.6" viewBox="-9.3 -6.3 18.6 12.6" fill="none" stroke="#111" stroke-width="3.2" stroke-linecap="round" stroke-linejoin="round"><path d="M-6.3 -3.15 L0 3.15 L6.3 -3.15"/></svg>
<div class="t b" style="letter-spacing:1.50px;left:368.7px;top:1429.3px;font-size:23px;line-height:23px">West_7056</div>
<svg style="position:absolute;left:523.5px;top:1435.3px" width="18.6" height="12.6" viewBox="-9.3 -6.3 18.6 12.6" fill="none" stroke="#111" stroke-width="3.2" stroke-linecap="round" stroke-linejoin="round"><path d="M-6.3 -3.15 L0 3.15 L6.3 -3.15"/></svg>
<div class="t b" style="letter-spacing:0.96px;left:570.3px;top:1429.3px;font-size:23px;line-height:23px">North_7159</div>
<svg style="position:absolute;left:725.7px;top:1435.3px" width="18.6" height="12.6" viewBox="-9.3 -6.3 18.6 12.6" fill="none" stroke="#111" stroke-width="3.2" stroke-linecap="round" stroke-linejoin="round"><path d="M-6.3 -3.15 L0 3.15 L6.3 -3.15"/></svg>
<div class="t b" style="letter-spacing:0.87px;left:774.4px;top:1429.3px;font-size:23px;line-height:23px">South_7120</div>
<svg style="position:absolute;left:933.6px;top:1435.3px" width="18.6" height="12.6" viewBox="-9.3 -6.3 18.6 12.6" fill="none" stroke="#111" stroke-width="3.2" stroke-linecap="round" stroke-linejoin="round"><path d="M-6.3 -3.15 L0 3.15 L6.3 -3.15"/></svg>
<div class="t b" style="letter-spacing:1.07px;left:974.5px;top:1429.3px;font-size:23px;line-height:23px">South_7387</div>
<svg style="position:absolute;left:1133.7px;top:1435.3px" width="18.6" height="12.6" viewBox="-9.3 -6.3 18.6 12.6" fill="none" stroke="#111" stroke-width="3.2" stroke-linecap="round" stroke-linejoin="round"><path d="M-6.3 -3.15 L0 3.15 L6.3 -3.15"/></svg>
<div class="t b" style="letter-spacing:0.97px;left:1176.6px;top:1429.3px;font-size:23px;line-height:23px">South_7077</div>
<svg style="position:absolute;left:1335.7px;top:1435.3px" width="18.6" height="12.6" viewBox="-9.3 -6.3 18.6 12.6" fill="none" stroke="#111" stroke-width="3.2" stroke-linecap="round" stroke-linejoin="round"><path d="M-6.3 -3.15 L0 3.15 L6.3 -3.15"/></svg>
<div class="t b" style="letter-spacing:1.12px;left:1378.7px;top:1429.3px;font-size:23px;line-height:23px">South_7439</div>
<svg style="position:absolute;left:1537.5px;top:1435.3px" width="18.6" height="12.6" viewBox="-9.3 -6.3 18.6 12.6" fill="none" stroke="#111" stroke-width="3.2" stroke-linecap="round" stroke-linejoin="round"><path d="M-6.3 -3.15 L0 3.15 L6.3 -3.15"/></svg>
<div class="t b" style="letter-spacing:0.91px;left:1580.8px;top:1429.3px;font-size:23px;line-height:23px">West_7215</div>
<svg style="position:absolute;left:1739.6px;top:1435.3px" width="18.6" height="12.6" viewBox="-9.3 -6.3 18.6 12.6" fill="none" stroke="#111" stroke-width="3.2" stroke-linecap="round" stroke-linejoin="round"><path d="M-6.3 -3.15 L0 3.15 L6.3 -3.15"/></svg>
<div class="t b" style="letter-spacing:0.79px;left:1783.0px;top:1429.3px;font-size:23px;line-height:23px">West_7179</div>
<svg style="position:absolute;left:1941.2px;top:1435.3px" width="18.6" height="12.6" viewBox="-9.3 -6.3 18.6 12.6" fill="none" stroke="#111" stroke-width="3.2" stroke-linecap="round" stroke-linejoin="round"><path d="M-6.3 -3.15 L0 3.15 L6.3 -3.15"/></svg>
<div class="t b" style="letter-spacing:0.68px;left:1984.6px;top:1429.3px;font-size:23px;line-height:23px">South_7170</div>
<svg style="position:absolute;left:2143.3px;top:1435.3px" width="18.6" height="12.6" viewBox="-9.3 -6.3 18.6 12.6" fill="none" stroke="#111" stroke-width="3.2" stroke-linecap="round" stroke-linejoin="round"><path d="M-6.3 -3.15 L0 3.15 L6.3 -3.15"/></svg>
<div class="t b" style="letter-spacing:1.12px;left:2186.7px;top:1429.3px;font-size:23px;line-height:23px">South_7329</div>
<div class="t r" style="letter-spacing:1.90px;right:3155.7px;top:1480.5px;font-size:23px;line-height:23px">16</div>
<div class="t r" style="letter-spacing:1.90px;right:2953.6px;top:1480.5px;font-size:23px;line-height:23px">52</div>
<div class="t r" style="letter-spacing:1.90px;right:2751.5px;top:1480.5px;font-size:23px;line-height:23px">23</div>
<div class="t r" style="letter-spacing:1.90px;right:2543.5px;top:1480.5px;font-size:23px;line-height:23px">179</div>
<div class="t r" style="letter-spacing:1.90px;right:2343.9px;top:1480.5px;font-size:23px;line-height:23px">14</div>
<div class="t r" style="letter-spacing:1.90px;right:2141.3px;top:1480.5px;font-size:23px;line-height:23px">78</div>
<div class="t r" style="letter-spacing:1.90px;right:1939.2px;top:1480.5px;font-size:23px;line-height:23px">8</div>
<div class="t r" style="letter-spacing:1.90px;right:1737.1px;top:1480.5px;font-size:23px;line-height:23px">21</div>
<div class="t r" style="letter-spacing:1.90px;right:1535.4px;top:1480.5px;font-size:23px;line-height:23px">25</div>
<div class="t r" style="letter-spacing:1.90px;right:1333.3px;top:1480.5px;font-size:23px;line-height:23px">49</div>
<div class="t r" style="letter-spacing:1.90px;right:1146.1px;top:1480.5px;font-size:23px;line-height:23px">10</div>
<div class="t r" style="letter-spacing:1.90px;right:3155.7px;top:1532.5px;font-size:23px;line-height:23px">17</div>
<div class="t r" style="letter-spacing:1.90px;right:2953.6px;top:1532.5px;font-size:23px;line-height:23px">225</div>
<div class="t r" style="letter-spacing:1.90px;right:2751.5px;top:1532.5px;font-size:23px;line-height:23px">24</div>
<div class="t r" style="letter-spacing:1.90px;right:2543.5px;top:1532.5px;font-size:23px;line-height:23px">74</div>
<div class="t r" style="letter-spacing:1.90px;right:2343.9px;top:1532.5px;font-size:23px;line-height:23px">23</div>
<div class="t r" style="letter-spacing:1.90px;right:2141.3px;top:1532.5px;font-size:23px;line-height:23px">36</div>
<div class="t r" style="letter-spacing:1.90px;right:1939.2px;top:1532.5px;font-size:23px;line-height:23px">2</div>
<div class="t r" style="letter-spacing:1.90px;right:1737.1px;top:1532.5px;font-size:23px;line-height:23px">8</div>
<div class="t r" style="letter-spacing:1.90px;right:1535.4px;top:1532.5px;font-size:23px;line-height:23px">45</div>
<div class="t r" style="letter-spacing:1.90px;right:1333.3px;top:1532.5px;font-size:23px;line-height:23px">31</div>
<div class="t r" style="letter-spacing:1.90px;right:1146.1px;top:1532.5px;font-size:23px;line-height:23px">6</div>
<div class="t r" style="letter-spacing:1.90px;right:3155.7px;top:1584.5px;font-size:23px;line-height:23px">4</div>
<div class="t r" style="letter-spacing:1.90px;right:2953.6px;top:1584.5px;font-size:23px;line-height:23px">200</div>
<div class="t r" style="letter-spacing:1.90px;right:2751.5px;top:1584.5px;font-size:23px;line-height:23px">26</div>
<div class="t r" style="letter-spacing:1.90px;right:2543.5px;top:1584.5px;font-size:23px;line-height:23px">43</div>
<div class="t r" style="letter-spacing:1.90px;right:2343.9px;top:1584.5px;font-size:23px;line-height:23px">1</div>
<div class="t r" style="letter-spacing:1.90px;right:2141.3px;top:1584.5px;font-size:23px;line-height:23px">107</div>
<div class="t r" style="letter-spacing:1.90px;right:1939.2px;top:1584.5px;font-size:23px;line-height:23px">7</div>
<div class="t r" style="letter-spacing:1.90px;right:1737.1px;top:1584.5px;font-size:23px;line-height:23px">26</div>
<div class="t r" style="letter-spacing:1.90px;right:1535.4px;top:1584.5px;font-size:23px;line-height:23px">25</div>
<div class="t r" style="letter-spacing:1.90px;right:1333.3px;top:1584.5px;font-size:23px;line-height:23px">7</div>
<div class="t r" style="letter-spacing:1.90px;right:3155.7px;top:1636.5px;font-size:23px;line-height:23px">6</div>
<div class="t r" style="letter-spacing:1.90px;right:2953.6px;top:1636.5px;font-size:23px;line-height:23px">60</div>
<div class="t r" style="letter-spacing:1.90px;right:2751.5px;top:1636.5px;font-size:23px;line-height:23px">22</div>
<div class="t r" style="letter-spacing:1.90px;right:2543.5px;top:1636.5px;font-size:23px;line-height:23px">128</div>
<div class="t r" style="letter-spacing:1.90px;right:2343.9px;top:1636.5px;font-size:23px;line-height:23px">14</div>
<div class="t r" style="letter-spacing:1.90px;right:2141.3px;top:1636.5px;font-size:23px;line-height:23px">65</div>
<div class="t r" style="letter-spacing:1.90px;right:1939.2px;top:1636.5px;font-size:23px;line-height:23px">9</div>
<div class="t r" style="letter-spacing:1.90px;right:1737.1px;top:1636.5px;font-size:23px;line-height:23px">11</div>
<div class="t r" style="letter-spacing:1.90px;right:1535.4px;top:1636.5px;font-size:23px;line-height:23px">14</div>
<div class="t r" style="letter-spacing:1.90px;right:1333.3px;top:1636.5px;font-size:23px;line-height:23px">12</div>
<div class="t r" style="letter-spacing:1.90px;right:1146.1px;top:1636.5px;font-size:23px;line-height:23px">2</div>
<div class="t r" style="letter-spacing:1.90px;right:3155.7px;top:1688.5px;font-size:23px;line-height:23px">28</div>
<div class="t r" style="letter-spacing:1.90px;right:2953.6px;top:1688.5px;font-size:23px;line-height:23px">79</div>
<div class="t r" style="letter-spacing:1.90px;right:2751.5px;top:1688.5px;font-size:23px;line-height:23px">14</div>
<div class="t r" style="letter-spacing:1.90px;right:2543.5px;top:1688.5px;font-size:23px;line-height:23px">111</div>
<div class="t r" style="letter-spacing:1.90px;right:2343.9px;top:1688.5px;font-size:23px;line-height:23px">37</div>
<div class="t r" style="letter-spacing:1.90px;right:2141.3px;top:1688.5px;font-size:23px;line-height:23px">232</div>
<div class="t r" style="letter-spacing:1.90px;right:1939.2px;top:1688.5px;font-size:23px;line-height:23px">10</div>
<div class="t r" style="letter-spacing:1.90px;right:1737.1px;top:1688.5px;font-size:23px;line-height:23px">3</div>
<div class="t r" style="letter-spacing:1.90px;right:1535.4px;top:1688.5px;font-size:23px;line-height:23px">26</div>
<div class="t r" style="letter-spacing:1.90px;right:1333.3px;top:1688.5px;font-size:23px;line-height:23px">16</div>
<div class="t r" style="letter-spacing:1.90px;right:1146.1px;top:1688.5px;font-size:23px;line-height:23px">7</div>
<div class="t r" style="letter-spacing:1.90px;right:3155.7px;top:1740.5px;font-size:23px;line-height:23px">9</div>
<div class="t r" style="letter-spacing:1.90px;right:2953.6px;top:1740.5px;font-size:23px;line-height:23px">71</div>
<div class="t r" style="letter-spacing:1.90px;right:2751.5px;top:1740.5px;font-size:23px;line-height:23px">22</div>
<div class="t r" style="letter-spacing:1.90px;right:2543.5px;top:1740.5px;font-size:23px;line-height:23px">85</div>
<div class="t r" style="letter-spacing:1.90px;right:2343.9px;top:1740.5px;font-size:23px;line-height:23px">5</div>
<div class="t r" style="letter-spacing:1.90px;right:2141.3px;top:1740.5px;font-size:23px;line-height:23px">146</div>
<div class="t r" style="letter-spacing:1.90px;right:1939.2px;top:1740.5px;font-size:23px;line-height:23px">5</div>
<div class="t r" style="letter-spacing:1.90px;right:1737.1px;top:1740.5px;font-size:23px;line-height:23px">6</div>
<div class="t r" style="letter-spacing:1.90px;right:1535.4px;top:1740.5px;font-size:23px;line-height:23px">24</div>
<div class="t r" style="letter-spacing:1.90px;right:1333.3px;top:1740.5px;font-size:23px;line-height:23px">38</div>
<div class="t r" style="letter-spacing:1.90px;right:1146.1px;top:1740.5px;font-size:23px;line-height:23px">3</div>
<div class="t r" style="letter-spacing:1.90px;right:3155.7px;top:1792.5px;font-size:23px;line-height:23px">9</div>
<div class="t r" style="letter-spacing:1.90px;right:2953.6px;top:1792.5px;font-size:23px;line-height:23px">167</div>
<div class="t r" style="letter-spacing:1.90px;right:2751.5px;top:1792.5px;font-size:23px;line-height:23px">5</div>
<div class="t r" style="letter-spacing:1.90px;right:2543.5px;top:1792.5px;font-size:23px;line-height:23px">124</div>
<div class="t r" style="letter-spacing:1.90px;right:2343.9px;top:1792.5px;font-size:23px;line-height:23px">9</div>
<div class="t r" style="letter-spacing:1.90px;right:2141.3px;top:1792.5px;font-size:23px;line-height:23px">88</div>
<div class="t r" style="letter-spacing:1.90px;right:1939.2px;top:1792.5px;font-size:23px;line-height:23px">20</div>
<div class="t r" style="letter-spacing:1.90px;right:1737.1px;top:1792.5px;font-size:23px;line-height:23px">25</div>
<div class="t r" style="letter-spacing:1.90px;right:1535.4px;top:1792.5px;font-size:23px;line-height:23px">35</div>
<div class="t r" style="letter-spacing:1.90px;right:1333.3px;top:1792.5px;font-size:23px;line-height:23px">28</div>
<div class="t r" style="letter-spacing:1.90px;right:1146.1px;top:1792.5px;font-size:23px;line-height:23px">8</div>
<div class="t r" style="letter-spacing:1.90px;right:2953.6px;top:1844.5px;font-size:23px;line-height:23px">329</div>
<div class="t r" style="letter-spacing:1.90px;right:2751.5px;top:1844.5px;font-size:23px;line-height:23px">4</div>
<div class="t r" style="letter-spacing:1.90px;right:2543.5px;top:1844.5px;font-size:23px;line-height:23px">222</div>
<div class="t r" style="letter-spacing:1.90px;right:2141.3px;top:1844.5px;font-size:23px;line-height:23px">153</div>
<div class="t r" style="letter-spacing:1.90px;right:1939.2px;top:1844.5px;font-size:23px;line-height:23px">11</div>
<div class="t r" style="letter-spacing:1.90px;right:1737.1px;top:1844.5px;font-size:23px;line-height:23px">4</div>
<div class="t r" style="letter-spacing:1.90px;right:1535.4px;top:1844.5px;font-size:23px;line-height:23px">51</div>
<div class="t r" style="letter-spacing:1.90px;right:1333.3px;top:1844.5px;font-size:23px;line-height:23px">35</div>
<div class="t r" style="letter-spacing:1.90px;right:1146.1px;top:1844.5px;font-size:23px;line-height:23px">11</div>
<div class="t r" style="letter-spacing:1.90px;right:2953.6px;top:1896.5px;font-size:23px;line-height:23px">216</div>
<div class="t r" style="letter-spacing:1.90px;right:2751.5px;top:1896.5px;font-size:23px;line-height:23px">23</div>
<div class="t r" style="letter-spacing:1.90px;right:2543.5px;top:1896.5px;font-size:23px;line-height:23px">155</div>
<div class="t r" style="letter-spacing:1.90px;right:1939.2px;top:1896.5px;font-size:23px;line-height:23px">20</div>
<div class="t r" style="letter-spacing:1.90px;right:1737.1px;top:1896.5px;font-size:23px;line-height:23px">27</div>
<div class="t r" style="letter-spacing:1.90px;right:1535.4px;top:1896.5px;font-size:23px;line-height:23px">115</div>
<div class="t r" style="letter-spacing:1.90px;right:1333.3px;top:1896.5px;font-size:23px;line-height:23px">75</div>
<div class="t r" style="letter-spacing:1.90px;right:3155.7px;top:1948.5px;font-size:23px;line-height:23px">2</div>
<div class="t r" style="letter-spacing:1.90px;right:2953.6px;top:1948.5px;font-size:23px;line-height:23px">87</div>
<div class="t r" style="letter-spacing:1.90px;right:2751.5px;top:1948.5px;font-size:23px;line-height:23px">4</div>
<div class="t r" style="letter-spacing:1.90px;right:2543.5px;top:1948.5px;font-size:23px;line-height:23px">193</div>
<div class="t r" style="letter-spacing:1.90px;right:2343.9px;top:1948.5px;font-size:23px;line-height:23px">8</div>
<div class="t r" style="letter-spacing:1.90px;right:2141.3px;top:1948.5px;font-size:23px;line-height:23px">127</div>
<div class="t r" style="letter-spacing:1.90px;right:1939.2px;top:1948.5px;font-size:23px;line-height:23px">10</div>
<div class="t r" style="letter-spacing:1.90px;right:1737.1px;top:1948.5px;font-size:23px;line-height:23px">6</div>
<div class="t r" style="letter-spacing:1.90px;right:1535.4px;top:1948.5px;font-size:23px;line-height:23px">13</div>
<div class="t r" style="letter-spacing:1.90px;right:1333.3px;top:1948.5px;font-size:23px;line-height:23px">35</div>
<div class="t r" style="letter-spacing:1.90px;right:1146.1px;top:1948.5px;font-size:23px;line-height:23px">2</div>
<div class="t r" style="letter-spacing:1.90px;right:3155.7px;top:2000.5px;font-size:23px;line-height:23px">3</div>
<div class="t r" style="letter-spacing:1.90px;right:2953.6px;top:2000.5px;font-size:23px;line-height:23px">65</div>
<div class="t r" style="letter-spacing:1.90px;right:2751.5px;top:2000.5px;font-size:23px;line-height:23px">15</div>
<div class="t r" style="letter-spacing:1.90px;right:2543.5px;top:2000.5px;font-size:23px;line-height:23px">171</div>
<div class="t r" style="letter-spacing:1.90px;right:2343.9px;top:2000.5px;font-size:23px;line-height:23px">14</div>
<div class="t r" style="letter-spacing:1.90px;right:2141.3px;top:2000.5px;font-size:23px;line-height:23px">223</div>
<div class="t r" style="letter-spacing:1.90px;right:1939.2px;top:2000.5px;font-size:23px;line-height:23px">3</div>
<div class="t r" style="letter-spacing:1.90px;right:1737.1px;top:2000.5px;font-size:23px;line-height:23px">35</div>
<div class="t r" style="letter-spacing:1.90px;right:1535.4px;top:2000.5px;font-size:23px;line-height:23px">58</div>
<div class="t r" style="letter-spacing:1.90px;right:1333.3px;top:2000.5px;font-size:23px;line-height:23px">37</div>
<div class="t r" style="letter-spacing:1.90px;right:1146.1px;top:2000.5px;font-size:23px;line-height:23px">12</div>
<div class="t r" style="letter-spacing:1.90px;right:3155.7px;top:2052.5px;font-size:23px;line-height:23px">16</div>
<div class="t r" style="letter-spacing:1.90px;right:2953.6px;top:2052.5px;font-size:23px;line-height:23px">59</div>
<div class="t r" style="letter-spacing:1.90px;right:2751.5px;top:2052.5px;font-size:23px;line-height:23px">5</div>
<div class="t r" style="letter-spacing:1.90px;right:2543.5px;top:2052.5px;font-size:23px;line-height:23px">283</div>
<div class="t r" style="letter-spacing:1.90px;right:2343.9px;top:2052.5px;font-size:23px;line-height:23px">4</div>
<div class="t r" style="letter-spacing:1.90px;right:2141.3px;top:2052.5px;font-size:23px;line-height:23px">217</div>
<div class="t r" style="letter-spacing:1.90px;right:1939.2px;top:2052.5px;font-size:23px;line-height:23px">2</div>
<div class="t r" style="letter-spacing:1.90px;right:1737.1px;top:2052.5px;font-size:23px;line-height:23px">20</div>
<div class="t r" style="letter-spacing:1.90px;right:1535.4px;top:2052.5px;font-size:23px;line-height:23px">16</div>
<div class="t r" style="letter-spacing:1.90px;right:1333.3px;top:2052.5px;font-size:23px;line-height:23px">54</div>
<div class="t r" style="letter-spacing:1.90px;right:1146.1px;top:2052.5px;font-size:23px;line-height:23px">9</div>
<div style="position:absolute;left:154px;top:1412px;width:2190px;height:4px;background:#000"></div>
<div style="position:absolute;left:154px;top:1412px;width:4px;height:700px;background:#000"></div></div>
<div style="position:absolute;left:0px;top:2060px;width:2344px;height:80px;background:#fafafa;border-top:2px solid #e0e0e0"></div>
<div style="position:absolute;left:138px;top:2070px;width:140px;height:60px;background:#f0f0f0;border-radius:6px"></div>
<div class="t b" style="letter-spacing:-0.53px;left:163.0px;top:2086.6px;font-size:27.2px;line-height:27.2px">Sheet1</div>
<div class="t b" style="letter-spacing:-0.03px;left:313.4px;top:2086.6px;font-size:27.2px;line-height:27.2px;color:#8a8a8a">Sheet2</div>
<div style="position:absolute;left:432px;top:2080px;width:2px;height:40px;background:#dcdcdc"></div>
<div class="t b" style="letter-spacing:0.10px;left:461.0px;top:2086.6px;font-size:27.2px;line-height:27.2px;color:#8a8a8a">Sheet3</div>
<svg style="position:absolute;left:20px;top:2080px" width="100" height="40" viewBox="20 2080 100 40" fill="none" stroke="#111" stroke-width="2.4" stroke-linecap="round"><path d="M31 2099.8 H53 M42 2088.8 V2110.8 M83 2089.6 H107 M83 2099.8 H107 M83 2110 H107"/></svg>
<div style="position:absolute;left:853.5px;top:278px;width:1480.5px;height:1120.3px;background:#fff;border:4px solid #cbcbcb;box-shadow:0 2px 14px rgba(0,0,0,0.25)"></div>
<div class="t b" style="letter-spacing:-0.42px;left:1593.8px;transform:translateX(-50%);top:337.0px;font-size:27.2px;line-height:27.2px">Transactions by Day</div>
<div class="t b" style="letter-spacing:-0.89px;left:1534.2px;transform:translateX(-50%);top:1313.6px;font-size:25.3px;line-height:25.3px">TRANSACTION_DATE</div>
<div class="t" style="left:923px;top:811px;font-size:25.3px;line-height:25.3px;font-weight:700;transform:translate(-50%,-50%) rotate(-90deg);letter-spacing:-0.2px"># of Transactions</div>
<svg style="position:absolute;left:1040px;top:400px" width="980" height="860" viewBox="1040 400 980 860" fill="none" stroke-width="4.5" stroke-linejoin="round" stroke-linecap="round"><path d="M1069.5 1237.7 H1993.5" stroke="#ececec" stroke-width="2"/><path d="M1069.5 1147.7 H1993.5" stroke="#ececec" stroke-width="2"/><path d="M1069.5 1057.7 H1993.5" stroke="#ececec" stroke-width="2"/><path d="M1069.5 967.7 H1993.5" stroke="#ececec" stroke-width="2"/><path d="M1069.5 877.7 H1993.5" stroke="#ececec" stroke-width="2"/><path d="M1069.5 787.7 H1993.5" stroke="#ececec" stroke-width="2"/><path d="M1069.5 697.7 H1993.5" stroke="#ececec" stroke-width="2"/><path d="M1069.5 607.7 H1993.5" stroke="#ececec" stroke-width="2"/><path d="M1069.5 517.7 H1993.5" stroke="#ececec" stroke-width="2"/><path d="M1069.5 427.7 H1993.5" stroke="#ececec" stroke-width="2"/><path d="M1210 427.7 V1237.7" stroke="#ececec" stroke-width="2"/><path d="M1366 427.7 V1237.7" stroke="#ececec" stroke-width="2"/><path d="M1523 427.7 V1237.7" stroke="#ececec" stroke-width="2"/><path d="M1683 427.7 V1237.7" stroke="#ececec" stroke-width="2"/><path d="M1840 427.7 V1237.7" stroke="#ececec" stroke-width="2"/><polyline points="1069.5,1233.4 1072.0,1231.8 1074.6,1231.8 1077.1,1231.9 1079.6,1233.1 1082.2,1234.0 1084.7,1234.0 1087.2,1233.9 1089.8,1231.8 1092.3,1233.2 1094.8,1234.3 1097.3,1236.7 1099.9,1234.3 1102.4,1233.0 1104.9,1233.1 1107.5,1232.6 1110.0,1231.6 1112.5,1229.6 1115.1,1230.8 1117.6,1233.5 1120.1,1235.7 1122.7,1236.0 1125.2,1236.3 1127.7,1235.7 1130.3,1236.7 1132.8,1236.8 1135.3,1235.9 1137.9,1235.2 1140.4,1232.5 1142.9,1232.3 1145.4,1231.6 1148.0,1232.7 1150.5,1232.3 1153.0,1232.9 1155.6,1233.6 1158.1,1232.5 1160.6,1230.7 1163.2,1228.8 1165.7,1229.8 1168.2,1232.1 1170.8,1234.1 1173.3,1235.5 1175.8,1236.4 1178.4,1234.6 1180.9,1234.2 1183.4,1231.6 1185.9,1232.8 1188.5,1231.0 1191.0,1230.9 1193.5,1232.3 1196.1,1234.8 1198.6,1234.6 1201.1,1233.0 1203.7,1230.4 1206.2,1232.1 1208.7,1233.5 1211.3,1234.6 1213.8,1233.4 1216.3,1232.7 1218.9,1234.5 1221.4,1223.0 1223.9,1229.8 1226.5,1231.4 1229.0,1232.1 1231.5,1234.6 1234.0,1236.8 1236.6,1237.0 1239.1,1235.1 1241.6,1234.9 1244.2,1233.2 1246.7,1234.4 1249.2,1234.3 1251.8,1233.7 1254.3,1234.8 1256.8,1233.3 1259.4,1235.3 1261.9,1234.4 1264.4,1235.8 1267.0,1235.3 1269.5,1233.4 1272.0,1231.4 1274.6,1231.3 1277.1,1231.6 1279.6,1233.6 1282.1,1233.3 1284.7,1233.4 1287.2,1232.0 1289.7,1233.0 1292.3,1232.5 1294.8,1234.0 1297.3,1233.4 1299.9,1234.2 1302.4,1212.0 1304.9,1227.1 1307.5,1236.0 1310.0,1236.8 1312.5,1235.8 1315.1,1235.3 1317.6,1233.5 1320.1,1234.2 1322.7,1233.5 1325.2,1207.2 1327.7,1224.4 1330.2,1231.5 1332.8,1231.9 1335.3,1232.9 1337.8,1234.3 1340.4,1234.1 1342.9,1232.0 1345.4,1231.7 1348.0,1234.1 1350.5,1234.4 1353.0,1232.0 1355.6,1232.0 1358.1,1231.3 1360.6,1231.5 1363.2,1230.1 1365.7,1231.9 1368.2,1234.5 1370.7,1236.4 1373.3,1234.6 1375.8,1234.2 1378.3,1231.9 1380.9,1234.3 1383.4,1232.3 1385.9,1232.7 1388.5,1232.6 1391.0,1219.1 1393.5,1229.6 1396.1,1235.1 1398.6,1234.9 1401.1,1235.5 1403.7,1232.8 1406.2,1231.5 1408.7,1232.5 1411.3,1232.2 1413.8,1233.6 1416.3,1234.5 1418.8,1236.7 1421.4,1235.9 1423.9,1235.7 1426.4,1236.0 1429.0,1236.3 1431.5,1234.6 1434.0,1234.7 1436.6,1234.8 1439.1,1233.7 1441.6,1230.8 1444.2,1229.8 1446.7,1230.5 1449.2,1231.8 1451.8,1233.6 1454.3,1235.8 1456.8,1237.7 1459.4,1235.1 1461.9,1232.9 1464.4,1229.7 1466.9,1232.7 1469.5,1232.9 1472.0,1234.5 1474.5,1232.1 1477.1,1233.2 1479.6,1231.4 1482.1,1233.6 1484.7,1232.9 1487.2,1233.8 1489.7,1231.0 1492.3,1230.3 1494.8,1230.4 1497.3,1230.8 1499.9,1230.2 1502.4,1231.4 1504.9,1231.8 1507.5,1231.8 1510.0,1230.1 1512.5,1231.0 1515.0,1231.3 1517.6,1231.4 1520.1,1230.8 1522.6,1231.4 1525.2,1233.0 1527.7,1233.0 1530.2,1233.0 1532.8,1220.3 1535.3,1229.7 1537.8,1232.6 1540.4,1229.9 1542.9,1229.6 1545.4,1231.6 1548.0,1232.1 1550.5,1232.6 1553.0,1232.4 1555.5,1232.1 1558.1,1233.8 1560.6,1232.7 1563.1,1235.4 1565.7,1233.7 1568.2,1234.6 1570.7,1233.9 1573.3,1233.6 1575.8,1233.5 1578.3,1232.2 1580.9,1231.5 1583.4,1232.3 1585.9,1234.3 1588.5,1236.4 1591.0,1235.0 1593.5,1234.4 1596.1,1234.8 1598.6,1234.0 1601.1,1232.5 1603.6,1231.6 1606.2,1231.6 1608.7,1232.7 1611.2,1232.0 1613.8,1234.3 1616.3,1234.0 1618.8,1233.5 1621.4,1231.1 1623.9,1229.6 1626.4,1231.0 1629.0,1232.1 1631.5,1234.0 1634.0,1234.9 1636.6,1235.1 1639.1,1233.4 1641.6,1231.0 1644.2,1230.3 1646.7,1229.9 1649.2,1231.8 1651.7,1233.6 1654.3,1235.3 1656.8,1235.3 1659.3,1235.2 1661.9,1235.3 1664.4,1234.1 1666.9,1233.2 1669.5,1233.5 1672.0,1232.8 1674.5,1231.1 1677.1,1230.7 1679.6,1233.3 1682.1,1236.5 1684.7,1235.0 1687.2,1235.2 1689.7,1232.9 1692.3,1233.9 1694.8,1233.0 1697.3,1232.7 1699.8,1234.6 1702.4,1235.2 1704.9,1236.3 1707.4,1236.3 1710.0,1233.9 1712.5,1234.7 1715.0,1234.3 1717.6,1236.9 1720.1,1235.6 1722.6,1234.6 1725.2,1232.6 1727.7,1232.5 1730.2,1231.3 1732.8,1230.2 1735.3,1230.1 1737.8,1232.1 1740.3,1233.8 1742.9,1235.5 1745.4,1236.1 1747.9,1236.1 1750.5,1234.3 1753.0,1233.7 1755.5,1234.4 1758.1,1235.7 1760.6,1233.9 1763.1,1233.1 1765.7,1232.2 1768.2,1232.0 1770.7,1232.4 1773.3,1231.8 1775.8,1231.3 1778.3,1232.3 1780.9,1231.8 1783.4,1232.5 1785.9,1232.3 1788.4,1233.9 1791.0,1234.3 1793.5,1231.6 1796.0,1231.9 1798.6,1232.1 1801.1,1232.2 1803.6,1230.8 1806.2,1229.5 1808.7,1230.9 1811.2,1231.4 1813.8,1233.9 1816.3,1233.0 1818.8,1232.5 1821.4,1231.0 1823.9,1231.0 1826.4,1233.0 1829.0,1232.2 1831.5,1231.3 1834.0,1228.7 1836.5,1229.9 1839.1,1230.6 1841.6,1232.8 1844.1,1231.5 1846.7,1231.3 1849.2,1231.2 1851.7,1234.0 1854.3,1235.4 1856.8,1234.7 1859.3,1232.4 1861.9,1232.3 1864.4,1234.0 1866.9,1233.9 1869.5,1235.3 1872.0,1232.7 1874.5,1234.9 1877.1,1233.9 1879.6,1234.0 1882.1,1234.1 1884.6,1234.7 1887.2,1235.6 1889.7,1233.7 1892.2,1231.3 1894.8,1230.7 1897.3,1230.0 1899.8,1231.2 1902.4,1230.3 1904.9,1233.2 1907.4,1234.1 1910.0,1235.5 1912.5,1234.8 1915.0,1233.1 1917.6,1232.8 1920.1,1232.0 1922.6,1231.6 1925.1,1231.8 1927.7,1232.6 1930.2,1234.1 1932.7,1233.2 1935.3,1231.2 1937.8,1231.8 1940.3,1231.7 1942.9,1231.5 1945.4,1230.4 1947.9,1231.4 1950.5,1234.0 1953.0,1233.9 1955.5,1234.2 1958.1,1232.8 1960.6,1234.5 1963.1,1232.9 1965.7,1233.2 1968.2,1232.0 1970.7,1232.6 1973.2,1232.4 1975.8,1232.1 1978.3,1232.5 1980.8,1234.1 1983.4,1234.0 1985.9,1234.9 1988.4,1231.9 1991.0,1230.6 1993.5,1228.9" stroke="#4a4db5"/><polyline points="1069.5,1225.1 1072.0,1226.4 1074.6,1228.3 1077.1,1229.5 1079.6,1228.7 1082.2,1229.2 1084.7,1230.7 1087.2,1234.1 1089.8,1232.4 1092.3,1229.5 1094.8,1228.3 1097.3,1231.3 1099.9,1235.3 1102.4,1235.1 1104.9,1234.4 1107.5,1230.5 1110.0,1232.4 1112.5,1232.3 1115.1,1236.7 1117.6,1233.7 1120.1,1231.3 1122.7,1230.9 1125.2,1233.9 1127.7,1235.6 1130.3,1233.5 1132.8,1229.1 1135.3,1231.3 1137.9,1233.8 1140.4,1237.5 1142.9,1236.6 1145.4,1212.5 1148.0,1226.1 1150.5,1231.2 1153.0,1231.3 1155.6,1234.0 1158.1,1235.6 1160.6,1235.9 1163.2,1232.9 1165.7,1232.8 1168.2,1230.9 1170.8,1230.5 1173.3,1229.7 1175.8,1231.2 1178.4,1230.8 1180.9,1228.6 1183.4,1228.1 1185.9,1229.9 1188.5,1229.7 1191.0,1229.0 1193.5,1230.6 1196.1,1235.3 1198.6,1232.9 1201.1,1229.9 1203.7,1228.2 1206.2,1230.4 1208.7,1231.8 1211.3,1232.4 1213.8,1230.0 1216.3,1229.3 1218.9,1229.5 1221.4,1234.5 1223.9,1208.9 1226.5,1226.8 1229.0,1230.7 1231.5,1229.5 1234.0,1228.3 1236.6,1231.6 1239.1,1210.2 1241.6,1228.6 1244.2,1235.4 1246.7,1231.7 1249.2,1230.7 1251.8,1228.8 1254.3,1228.1 1256.8,1229.4 1259.4,1229.9 1261.9,1234.3 1264.4,1231.7 1267.0,1234.4 1269.5,1231.0 1272.0,1230.6 1274.6,1226.4 1277.1,1230.2 1279.6,1233.1 1282.1,1233.7 1284.7,1233.6 1287.2,1232.5 1289.7,1233.8 1292.3,1229.4 1294.8,1228.8 1297.3,1226.8 1299.9,1230.2 1302.4,1229.1 1304.9,1231.4 1307.5,1228.3 1310.0,1231.8 1312.5,1229.7 1315.1,1233.4 1317.6,1231.1 1320.1,1232.6 1322.7,1232.9 1325.2,1231.4 1327.7,1232.5 1330.2,1231.7 1332.8,1235.6 1335.3,1235.6 1337.8,1216.6 1340.4,1226.1 1342.9,1231.2 1345.4,1230.1 1348.0,1233.2 1350.5,1233.1 1353.0,1234.2 1355.6,1193.9 1358.1,1216.8 1360.6,1226.6 1363.2,1231.5 1365.7,1233.8 1368.2,1233.5 1370.7,1232.4 1373.3,1231.4 1375.8,1232.7 1378.3,1233.9 1380.9,1231.7 1383.4,1229.9 1385.9,1228.9 1388.5,1208.8 1391.0,1226.8 1393.5,1232.6 1396.1,1233.0 1398.6,1232.9 1401.1,1233.1 1403.7,1233.9 1406.2,1232.0 1408.7,1232.4 1411.3,1233.4 1413.8,1233.1 1416.3,1232.7 1418.8,1228.9 1421.4,1229.7 1423.9,1227.7 1426.4,1230.9 1429.0,1229.5 1431.5,1232.7 1434.0,1233.7 1436.6,1237.5 1439.1,1234.5 1441.6,1231.6 1444.2,1231.1 1446.7,1232.5 1449.2,1231.9 1451.8,1229.8 1454.3,1231.4 1456.8,1234.5 1459.4,1236.7 1461.9,1236.6 1464.4,1235.6 1466.9,1236.1 1469.5,1215.1 1472.0,1226.8 1474.5,1229.6 1477.1,1231.0 1479.6,1229.3 1482.1,1227.7 1484.7,1229.0 1487.2,1231.3 1489.7,1233.4 1492.3,1235.3 1494.8,1234.9 1497.3,1233.4 1499.9,1228.5 1502.4,1206.3 1504.9,1220.6 1507.5,1228.6 1510.0,1232.6 1512.5,1234.3 1515.0,1235.6 1517.6,1232.4 1520.1,1233.5 1522.6,1233.3 1525.2,1234.1 1527.7,1230.6 1530.2,1228.3 1532.8,1227.7 1535.3,1211.1 1537.8,1225.3 1540.4,1229.8 1542.9,1227.8 1545.4,1229.9 1548.0,1232.0 1550.5,1234.1 1553.0,1232.2 1555.5,1229.7 1558.1,1227.8 1560.6,1227.8 1563.1,1228.5 1565.7,1230.2 1568.2,1229.0 1570.7,1230.1 1573.3,1230.1 1575.8,1234.5 1578.3,1236.5 1580.9,1234.5 1583.4,1231.4 1585.9,1203.6 1588.5,1220.9 1591.0,1230.8 1593.5,1230.2 1596.1,1234.3 1598.6,1231.1 1601.1,1232.8 1603.6,1228.8 1606.2,1231.0 1608.7,1228.8 1611.2,1230.6 1613.8,1232.1 1616.3,1230.3 1618.8,1228.0 1621.4,1225.2 1623.9,1226.8 1626.4,1231.2 1629.0,1231.2 1631.5,1232.8 1634.0,1228.8 1636.6,1231.8 1639.1,1230.4 1641.6,1230.7 1644.2,1231.0 1646.7,1231.1 1649.2,1235.0 1651.7,1235.8 1654.3,1237.7 1656.8,1233.0 1659.3,1228.3 1661.9,1225.9 1664.4,1229.4 1666.9,1230.8 1669.5,1230.3 1672.0,1230.0 1674.5,1230.4 1677.1,1208.3 1679.6,1225.4 1682.1,1233.9 1684.7,1235.7 1687.2,1235.0 1689.7,1195.2 1692.3,1233.5 1694.8,1233.4 1697.3,1232.7 1699.8,1234.3 1702.4,1211.5 1704.9,1227.0 1707.4,1231.2 1710.0,1234.0 1712.5,1232.2 1715.0,1234.8 1717.6,1230.0 1720.1,1230.4 1722.6,1228.7 1725.2,1231.6 1727.7,1231.4 1730.2,1230.3 1732.8,1228.5 1735.3,1227.9 1737.8,1228.9 1740.3,1227.7 1742.9,1227.2 1745.4,1162.8 1747.9,1228.4 1750.5,1230.4 1753.0,1231.9 1755.5,1229.4 1758.1,1213.1 1760.6,1224.4 1763.1,1231.5 1765.7,1229.6 1768.2,1230.7 1770.7,1232.6 1773.3,1233.5 1775.8,1230.5 1778.3,1227.0 1780.9,1227.7 1783.4,1203.1 1785.9,1223.1 1788.4,1230.7 1791.0,1234.2 1793.5,1235.1 1796.0,1167.8 1798.6,1097.8 1801.1,1167.8 1803.6,1234.3 1806.2,1233.3 1808.7,1232.6 1811.2,1231.7 1813.8,1233.7 1816.3,1234.3 1818.8,1234.4 1821.4,1235.6 1823.9,1232.9 1826.4,1229.2 1829.0,1226.1 1831.5,1226.3 1834.0,1205.7 1836.5,1173.6 1839.1,1205.7 1841.6,1230.1 1844.1,1231.3 1846.7,1227.8 1849.2,1231.1 1851.7,1229.9 1854.3,1234.0 1856.8,1231.7 1859.3,1230.9 1861.9,1231.5 1864.4,1233.0 1866.9,1236.4 1869.5,1234.7 1872.0,1235.6 1874.5,1232.6 1877.1,1230.1 1879.6,1228.3 1882.1,1231.1 1884.6,1232.3 1887.2,1234.1 1889.7,1235.8 1892.2,1234.2 1894.8,1232.8 1897.3,1230.4 1899.8,1230.2 1902.4,1226.8 1904.9,1226.9 1907.4,1230.7 1910.0,1234.2 1912.5,1231.8 1915.0,1228.3 1917.6,1228.8 1920.1,1229.2 1922.6,1232.0 1925.1,1230.6 1927.7,1234.0 1930.2,1231.3 1932.7,1228.6 1935.3,1228.5 1937.8,1229.8 1940.3,1233.9 1942.9,1230.4 1945.4,1233.4 1947.9,1233.8 1950.5,1234.6 1953.0,1233.3 1955.5,1202.9 1958.1,1220.6 1960.6,1226.4 1963.1,1230.3 1965.7,1231.2 1968.2,1230.1 1970.7,1228.5 1973.2,1231.7 1975.8,1235.3 1978.3,1236.0 1980.8,1232.8 1983.4,1232.9 1985.9,1233.6 1988.4,1236.0 1991.0,1233.6 1993.5,1231.1" stroke="#f4c25e"/><polyline points="1069.5,1232.2 1072.0,1234.2 1074.6,1237.2 1077.1,1235.9 1079.6,1235.4 1082.2,1234.4 1084.7,1235.1 1087.2,1234.1 1089.8,1232.7 1092.3,1232.7 1094.8,1234.0 1097.3,1234.7 1099.9,1233.2 1102.4,1231.4 1104.9,1232.1 1107.5,1223.4 1110.0,1231.0 1112.5,1232.4 1115.1,1234.1 1117.6,1235.2 1120.1,1237.3 1122.7,1234.9 1125.2,1234.7 1127.7,1233.5 1130.3,1236.0 1132.8,1235.8 1135.3,1237.2 1137.9,1235.9 1140.4,1236.4 1142.9,1234.6 1145.4,1235.5 1148.0,1235.2 1150.5,1235.6 1153.0,1235.4 1155.6,1235.3 1158.1,1236.6 1160.6,1237.5 1163.2,1235.6 1165.7,1234.8 1168.2,1234.7 1170.8,1236.9 1173.3,1236.4 1175.8,1233.5 1178.4,1233.5 1180.9,1232.3 1183.4,1233.9 1185.9,1233.2 1188.5,1233.4 1191.0,1233.7 1193.5,1234.8 1196.1,1235.6 1198.6,1234.8 1201.1,1233.0 1203.7,1233.9 1206.2,1233.0 1208.7,1232.3 1211.3,1230.0 1213.8,1231.6 1216.3,1231.7 1218.9,1232.5 1221.4,1233.3 1223.9,1235.8 1226.5,1237.5 1229.0,1237.7 1231.5,1237.6 1234.0,1224.8 1236.6,1231.4 1239.1,1219.7 1241.6,1229.4 1244.2,1236.1 1246.7,1236.4 1249.2,1235.0 1251.8,1235.0 1254.3,1234.0 1256.8,1234.5 1259.4,1232.1 1261.9,1231.5 1264.4,1232.7 1267.0,1232.7 1269.5,1232.4 1272.0,1231.3 1274.6,1230.7 1277.1,1232.9 1279.6,1232.4 1282.1,1234.2 1284.7,1232.3 1287.2,1234.5 1289.7,1232.9 1292.3,1235.0 1294.8,1234.0 1297.3,1236.1 1299.9,1235.0 1302.4,1235.6 1304.9,1234.3 1307.5,1233.0 1310.0,1233.0 1312.5,1233.1 1315.1,1234.5 1317.6,1234.7 1320.1,1233.9 1322.7,1234.0 1325.2,1234.6 1327.7,1236.4 1330.2,1235.1 1332.8,1234.7 1335.3,1233.4 1337.8,1234.0 1340.4,1232.6 1342.9,1217.9 1345.4,1230.8 1348.0,1237.4 1350.5,1236.8 1353.0,1235.8 1355.6,1236.2 1358.1,1235.8 1360.6,1235.8 1363.2,1234.9 1365.7,1234.8 1368.2,1233.1 1370.7,1233.4 1373.3,1232.4 1375.8,1234.3 1378.3,1232.6 1380.9,1235.0 1383.4,1233.0 1385.9,1234.0 1388.5,1231.3 1391.0,1233.7 1393.5,1233.8 1396.1,1234.6 1398.6,1234.7 1401.1,1235.1 1403.7,1235.2 1406.2,1232.8 1408.7,1232.7 1411.3,1234.2 1413.8,1236.0 1416.3,1233.9 1418.8,1234.1 1421.4,1233.2 1423.9,1235.1 1426.4,1233.6 1429.0,1234.9 1431.5,1234.1 1434.0,1233.4 1436.6,1231.4 1439.1,1231.3 1441.6,1232.5 1444.2,1233.4 1446.7,1235.0 1449.2,1234.0 1451.8,1233.6 1454.3,1232.6 1456.8,1233.1 1459.4,1233.9 1461.9,1234.1 1464.4,1235.5 1466.9,1234.9 1469.5,1234.3 1472.0,1233.5 1474.5,1235.2 1477.1,1235.0 1479.6,1235.3 1482.1,1233.5 1484.7,1233.6 1487.2,1232.1 1489.7,1233.5 1492.3,1233.9 1494.8,1233.7 1497.3,1231.9 1499.9,1232.4 1502.4,1233.2 1504.9,1232.4 1507.5,1232.1 1510.0,1231.7 1512.5,1234.4 1515.0,1232.5 1517.6,1233.7 1520.1,1233.4 1522.6,1233.8 1525.2,1233.4 1527.7,1231.2 1530.2,1231.2 1532.8,1230.8 1535.3,1232.1 1537.8,1231.6 1540.4,1233.8 1542.9,1232.7 1545.4,1233.6 1548.0,1233.0 1550.5,1233.2 1553.0,1234.0 1555.5,1233.1 1558.1,1232.9 1560.6,1233.7 1563.1,1234.5 1565.7,1235.2 1568.2,1235.6 1570.7,1234.7 1573.3,1234.3 1575.8,1233.0 1578.3,1234.0 1580.9,1233.9 1583.4,1232.8 1585.9,1231.2 1588.5,1232.0 1591.0,1231.8 1593.5,1231.7 1596.1,1232.9 1598.6,1234.6 1601.1,1236.8 1603.6,1237.1 1606.2,1237.2 1608.7,1234.8 1611.2,1232.4 1613.8,1233.1 1616.3,1235.2 1618.8,1236.5 1621.4,1234.3 1623.9,1232.9 1626.4,1231.4 1629.0,1233.8 1631.5,1232.6 1634.0,1234.8 1636.6,1233.0 1639.1,1233.4 1641.6,1231.8 1644.2,1233.1 1646.7,1233.8 1649.2,1234.7 1651.7,1235.2 1654.3,1236.2 1656.8,1236.6 1659.3,1234.7 1661.9,1234.9 1664.4,1234.0 1666.9,1233.8 1669.5,1234.1 1672.0,1235.6 1674.5,1235.6 1677.1,1234.7 1679.6,1234.7 1682.1,1236.5 1684.7,1235.0 1687.2,1233.5 1689.7,1232.8 1692.3,1235.1 1694.8,1233.9 1697.3,1232.9 1699.8,1231.2 1702.4,1233.2 1704.9,1234.3 1707.4,1235.3 1710.0,1236.0 1712.5,1235.0 1715.0,1235.0 1717.6,1232.9 1720.1,1233.6 1722.6,1233.5 1725.2,1234.4 1727.7,1232.8 1730.2,1233.1 1732.8,1232.5 1735.3,1234.7 1737.8,1234.0 1740.3,1235.3 1742.9,1233.3 1745.4,1234.2 1747.9,1232.5 1750.5,1233.1 1753.0,1232.5 1755.5,1232.3 1758.1,1233.2 1760.6,1232.3 1763.1,1233.3 1765.7,1233.1 1768.2,1235.2 1770.7,1235.8 1773.3,1236.3 1775.8,1235.1 1778.3,1233.5 1780.9,1233.5 1783.4,1232.7 1785.9,1233.5 1788.4,1233.7 1791.0,1234.6 1793.5,1236.2 1796.0,1234.2 1798.6,1234.7 1801.1,1233.8 1803.6,1235.5 1806.2,1233.8 1808.7,1232.5 1811.2,1231.7 1813.8,1232.5 1816.3,1234.9 1818.8,1233.9 1821.4,1235.3 1823.9,1234.5 1826.4,1236.1 1829.0,1234.2 1831.5,1233.2 1834.0,1233.3 1836.5,1232.8 1839.1,1231.9 1841.6,1232.9 1844.1,1233.7 1846.7,1235.2 1849.2,1234.2 1851.7,1234.7 1854.3,1235.1 1856.8,1234.2 1859.3,1233.8 1861.9,1231.7 1864.4,1230.8 1866.9,1229.6 1869.5,1231.4 1872.0,1231.8 1874.5,1232.9 1877.1,1231.9 1879.6,1231.4 1882.1,1233.2 1884.6,1234.0 1887.2,1235.8 1889.7,1226.2 1892.2,1232.4 1894.8,1232.9 1897.3,1234.3 1899.8,1233.8 1902.4,1236.4 1904.9,1235.9 1907.4,1217.9 1910.0,1229.9 1912.5,1235.6 1915.0,1235.9 1917.6,1234.2 1920.1,1232.5 1922.6,1233.7 1925.1,1233.1 1927.7,1233.1 1930.2,1231.5 1932.7,1233.7 1935.3,1234.5 1937.8,1236.8 1940.3,1234.5 1942.9,1233.1 1945.4,1230.3 1947.9,1232.9 1950.5,1234.7 1953.0,1235.9 1955.5,1234.3 1958.1,1235.0 1960.6,1234.2 1963.1,1235.0 1965.7,1233.7 1968.2,1235.8 1970.7,1235.0 1973.2,1236.1 1975.8,1236.2 1978.3,1236.4 1980.8,1235.9 1983.4,1233.8 1985.9,1234.6 1988.4,1234.2 1991.0,1236.5 1993.5,1237.1" stroke="#22a98a"/><polyline points="1069.5,1234.9 1072.0,1232.9 1074.6,1230.6 1077.1,1230.5 1079.6,1233.4 1082.2,1234.1 1084.7,1232.7 1087.2,1231.9 1089.8,1231.9 1092.3,1233.4 1094.8,1233.6 1097.3,1234.3 1099.9,1233.0 1102.4,1232.3 1104.9,1231.4 1107.5,1234.2 1110.0,1234.1 1112.5,1235.7 1115.1,1185.5 1117.6,1234.0 1120.1,1234.9 1122.7,1234.3 1125.2,1234.5 1127.7,1231.4 1130.3,1228.7 1132.8,1230.7 1135.3,1230.8 1137.9,1233.8 1140.4,1232.4 1142.9,1232.3 1145.4,1232.1 1148.0,1234.3 1150.5,1235.3 1153.0,1232.7 1155.6,1230.5 1158.1,1229.5 1160.6,1231.1 1163.2,1232.4 1165.7,1235.5 1168.2,1236.2 1170.8,1234.1 1173.3,1234.3 1175.8,1234.6 1178.4,1236.8 1180.9,1236.9 1183.4,1236.4 1185.9,1237.0 1188.5,1236.8 1191.0,1235.9 1193.5,1234.6 1196.1,1232.9 1198.6,1210.7 1201.1,1225.7 1203.7,1230.7 1206.2,1233.2 1208.7,1234.4 1211.3,1237.6 1213.8,1236.8 1216.3,1234.8 1218.9,1231.6 1221.4,1230.9 1223.9,1233.1 1226.5,1235.3 1229.0,1235.1 1231.5,1234.6 1234.0,1232.9 1236.6,1231.4 1239.1,1230.7 1241.6,1231.4 1244.2,1231.9 1246.7,1231.9 1249.2,1233.4 1251.8,1233.1 1254.3,1231.2 1256.8,1231.8 1259.4,1232.5 1261.9,1234.6 1264.4,1234.5 1267.0,1236.8 1269.5,1237.6 1272.0,1235.0 1274.6,1234.9 1277.1,1235.4 1279.6,1237.4 1282.1,1235.2 1284.7,1233.4 1287.2,1231.8 1289.7,1233.0 1292.3,1234.2 1294.8,1236.6 1297.3,1237.2 1299.9,1237.7 1302.4,1236.8 1304.9,1235.6 1307.5,1234.4 1310.0,1233.6 1312.5,1233.6 1315.1,1233.8 1317.6,1234.2 1320.1,1233.2 1322.7,1232.2 1325.2,1232.0 1327.7,1233.3 1330.2,1233.8 1332.8,1234.1 1335.3,1232.7 1337.8,1233.5 1340.4,1231.3 1342.9,1231.5 1345.4,1229.1 1348.0,1232.0 1350.5,1233.2 1353.0,1232.9 1355.6,1232.4 1358.1,1233.7 1360.6,1234.6 1363.2,1234.8 1365.7,1204.4 1368.2,1226.7 1370.7,1232.7 1373.3,1233.9 1375.8,1234.1 1378.3,1235.1 1380.9,1234.8 1383.4,1233.1 1385.9,1233.8 1388.5,1231.7 1391.0,1231.8 1393.5,1232.3 1396.1,1235.7 1398.6,1235.8 1401.1,1216.3 1403.7,1228.1 1406.2,1233.5 1408.7,1232.8 1411.3,1234.6 1413.8,1235.1 1416.3,1235.1 1418.8,1233.0 1421.4,1231.2 1423.9,1232.0 1426.4,1232.7 1429.0,1236.0 1431.5,1234.1 1434.0,1234.9 1436.6,1232.1 1439.1,1232.1 1441.6,1232.0 1444.2,1231.7 1446.7,1232.8 1449.2,1232.2 1451.8,1233.5 1454.3,1231.8 1456.8,1231.6 1459.4,1212.2 1461.9,1228.4 1464.4,1233.0 1466.9,1232.9 1469.5,1232.7 1472.0,1235.2 1474.5,1236.2 1477.1,1234.4 1479.6,1232.1 1482.1,1229.3 1484.7,1229.0 1487.2,1229.4 1489.7,1230.1 1492.3,1230.9 1494.8,1230.4 1497.3,1230.4 1499.9,1232.4 1502.4,1232.4 1504.9,1234.2 1507.5,1234.0 1510.0,1233.6 1512.5,1234.6 1515.0,1233.6 1517.6,1235.8 1520.1,1232.9 1522.6,1232.5 1525.2,1230.4 1527.7,1229.9 1530.2,1229.8 1532.8,1216.8 1535.3,1229.1 1537.8,1235.9 1540.4,1232.5 1542.9,1231.7 1545.4,1231.0 1548.0,1233.9 1550.5,1234.6 1553.0,1232.9 1555.5,1229.9 1558.1,1230.2 1560.6,1232.6 1563.1,1233.5 1565.7,1235.6 1568.2,1232.9 1570.7,1232.7 1573.3,1230.0 1575.8,1230.0 1578.3,1230.7 1580.9,1230.1 1583.4,1213.3 1585.9,1226.0 1588.5,1233.4 1591.0,1234.5 1593.5,1236.2 1596.1,1237.0 1598.6,1235.4 1601.1,1234.6 1603.6,1232.8 1606.2,1232.9 1608.7,1231.1 1611.2,1231.6 1613.8,1233.3 1616.3,1234.9 1618.8,1236.1 1621.4,1234.9 1623.9,1233.4 1626.4,1230.5 1629.0,1231.7 1631.5,1230.8 1634.0,1230.9 1636.6,1231.1 1639.1,1231.0 1641.6,1232.1 1644.2,1229.6 1646.7,1230.2 1649.2,1231.3 1651.7,1233.9 1654.3,1234.8 1656.8,1234.2 1659.3,1235.1 1661.9,1233.9 1664.4,1233.7 1666.9,1232.1 1669.5,1232.5 1672.0,1233.6 1674.5,1234.6 1677.1,1235.2 1679.6,1235.2 1682.1,1234.8 1684.7,1236.7 1687.2,1237.4 1689.7,1237.3 1692.3,1235.6 1694.8,1232.2 1697.3,1231.1 1699.8,1231.6 1702.4,1233.6 1704.9,1235.1 1707.4,1234.9 1710.0,1232.8 1712.5,1233.2 1715.0,1233.4 1717.6,1234.4 1720.1,1232.0 1722.6,1231.6 1725.2,1231.7 1727.7,1231.1 1730.2,1229.8 1732.8,1231.2 1735.3,1232.7 1737.8,1232.4 1740.3,1231.3 1742.9,1232.6 1745.4,1233.5 1747.9,1235.3 1750.5,1235.4 1753.0,1236.2 1755.5,1235.4 1758.1,1233.3 1760.6,1232.6 1763.1,1232.5 1765.7,1232.3 1768.2,1232.6 1770.7,1231.1 1773.3,1232.3 1775.8,1233.1 1778.3,1235.3 1780.9,1235.3 1783.4,1233.3 1785.9,1230.4 1788.4,1232.0 1791.0,1235.3 1793.5,1237.6 1796.0,1235.2 1798.6,1233.8 1801.1,1234.3 1803.6,1235.3 1806.2,1234.8 1808.7,1232.5 1811.2,1232.6 1813.8,1232.3 1816.3,1232.6 1818.8,1231.8 1821.4,1234.0 1823.9,1233.9 1826.4,1235.7 1829.0,1235.7 1831.5,1236.6 1834.0,1237.0 1836.5,1236.9 1839.1,1237.3 1841.6,1235.6 1844.1,1235.4 1846.7,1233.3 1849.2,1231.9 1851.7,1230.5 1854.3,1231.9 1856.8,1233.9 1859.3,1232.0 1861.9,1233.7 1864.4,1233.8 1866.9,1236.6 1869.5,1233.9 1872.0,1233.1 1874.5,1232.4 1877.1,1234.1 1879.6,1232.7 1882.1,1199.9 1884.6,1221.8 1887.2,1232.5 1889.7,1231.8 1892.2,1233.4 1894.8,1234.4 1897.3,1234.4 1899.8,1234.5 1902.4,1233.8 1904.9,1234.0 1907.4,1234.0 1910.0,1233.5 1912.5,1233.3 1915.0,1232.7 1917.6,1232.3 1920.1,1232.3 1922.6,1232.7 1925.1,1232.6 1927.7,1230.6 1930.2,1229.1 1932.7,1231.0 1935.3,1232.1 1937.8,1232.3 1940.3,1232.7 1942.9,1232.5 1945.4,1231.7 1947.9,1230.3 1950.5,1230.6 1953.0,1232.5 1955.5,1232.5 1958.1,1234.1 1960.6,1232.9 1963.1,1233.3 1965.7,1230.5 1968.2,1232.1 1970.7,1167.1 1973.2,1235.1 1975.8,1234.8 1978.3,1234.6 1980.8,1233.7 1983.4,1232.9 1985.9,1235.0 1988.4,1234.4 1991.0,1233.0 1993.5,1230.1" stroke="#cf3f58"/><polyline points="1069.5,1233.8 1072.0,1234.3 1074.6,1233.6 1077.1,1231.4 1079.6,1231.9 1082.2,1233.3 1084.7,1234.1 1087.2,1234.3 1089.8,1232.9 1092.3,1234.3 1094.8,1233.3 1097.3,1178.3 1099.9,1235.2 1102.4,1236.8 1104.9,1237.7 1107.5,1236.8 1110.0,1236.0 1112.5,1233.3 1115.1,1232.5 1117.6,1233.0 1120.1,1233.8 1122.7,1234.9 1125.2,1233.8 1127.7,1233.7 1130.3,1232.0 1132.8,1230.8 1135.3,1231.6 1137.9,1233.1 1140.4,1234.6 1142.9,1234.9 1145.4,1233.7 1148.0,1233.5 1150.5,1232.5 1153.0,1234.1 1155.6,1233.2 1158.1,1232.5 1160.6,1232.3 1163.2,1232.8 1165.7,1235.0 1168.2,1235.5 1170.8,1236.0 1173.3,1236.0 1175.8,1234.0 1178.4,1233.6 1180.9,1232.3 1183.4,1231.6 1185.9,1233.0 1188.5,1234.6 1191.0,1237.2 1193.5,1236.1 1196.1,1212.8 1198.6,1225.9 1201.1,1232.0 1203.7,1231.9 1206.2,1232.8 1208.7,1234.0 1211.3,1234.6 1213.8,1235.6 1216.3,1235.2 1218.9,1236.9 1221.4,1236.5 1223.9,1212.1 1226.5,1228.2 1229.0,1235.7 1231.5,1234.2 1234.0,1233.4 1236.6,1232.8 1239.1,1234.2 1241.6,1234.6 1244.2,1233.5 1246.7,1231.4 1249.2,1231.7 1251.8,1232.1 1254.3,1232.2 1256.8,1231.9 1259.4,1230.8 1261.9,1232.4 1264.4,1232.1 1267.0,1233.0 1269.5,1232.5 1272.0,1234.6 1274.6,1235.1 1277.1,1235.6 1279.6,1234.0 1282.1,1233.9 1284.7,1233.2 1287.2,1234.7 1289.7,1235.8 1292.3,1235.5 1294.8,1233.8 1297.3,1231.4 1299.9,1230.9 1302.4,1232.0 1304.9,1233.5 1307.5,1234.3 1310.0,1232.8 1312.5,1233.0 1315.1,1231.9 1317.6,1232.7 1320.1,1232.7 1322.7,1234.0 1325.2,1220.9 1327.7,1228.6 1330.2,1233.8 1332.8,1233.7 1335.3,1236.3 1337.8,1234.5 1340.4,1235.2 1342.9,1235.0 1345.4,1235.7 1348.0,1234.5 1350.5,1232.8 1353.0,1232.7 1355.6,1233.6 1358.1,1234.7 1360.6,1233.4 1363.2,1233.7 1365.7,1234.6 1368.2,1234.6 1370.7,1233.9 1373.3,1233.6 1375.8,1235.6 1378.3,1234.5 1380.9,1232.8 1383.4,1233.0 1385.9,1233.6 1388.5,1235.1 1391.0,1234.0 1393.5,1234.2 1396.1,1234.7 1398.6,1233.3 1401.1,1234.1 1403.7,1233.8 1406.2,1234.2 1408.7,1234.9 1411.3,1235.2 1413.8,1235.5 1416.3,1234.5 1418.8,1232.1 1421.4,1231.7 1423.9,1221.4 1426.4,1231.5 1429.0,1235.4 1431.5,1234.6 1434.0,1233.9 1436.6,1233.0 1439.1,1233.8 1441.6,1232.8 1444.2,1235.2 1446.7,1233.2 1449.2,1232.3 1451.8,1230.8 1454.3,1232.5 1456.8,1233.1 1459.4,1232.3 1461.9,1231.0 1464.4,1232.9 1466.9,1234.0 1469.5,1235.8 1472.0,1234.4 1474.5,1233.2 1477.1,1231.2 1479.6,1232.0 1482.1,1233.1 1484.7,1234.6 1487.2,1234.8 1489.7,1234.3 1492.3,1233.1 1494.8,1232.6 1497.3,1233.5 1499.9,1233.7 1502.4,1232.6 1504.9,1232.5 1507.5,1234.1 1510.0,1235.8 1512.5,1236.7 1515.0,1234.7 1517.6,1233.6 1520.1,1232.3 1522.6,1233.6 1525.2,1233.9 1527.7,1235.2 1530.2,1233.5 1532.8,1232.9 1535.3,1233.0 1537.8,1233.7 1540.4,1233.8 1542.9,1232.4 1545.4,1232.2 1548.0,1232.2 1550.5,1231.5 1553.0,1230.9 1555.5,1231.5 1558.1,1232.1 1560.6,1233.8 1563.1,1233.8 1565.7,1234.5 1568.2,1233.8 1570.7,1233.9 1573.3,1234.0 1575.8,1217.0 1578.3,1227.3 1580.9,1231.3 1583.4,1231.3 1585.9,1232.4 1588.5,1232.5 1591.0,1234.2 1593.5,1234.4 1596.1,1235.9 1598.6,1234.4 1601.1,1232.7 1603.6,1232.1 1606.2,1233.3 1608.7,1235.5 1611.2,1236.0 1613.8,1235.2 1616.3,1233.1 1618.8,1233.3 1621.4,1234.3 1623.9,1234.7 1626.4,1234.3 1629.0,1232.6 1631.5,1233.7 1634.0,1233.0 1636.6,1234.9 1639.1,1235.0 1641.6,1235.2 1644.2,1214.7 1646.7,1227.7 1649.2,1234.8 1651.7,1233.9 1654.3,1233.6 1656.8,1208.8 1659.3,1226.9 1661.9,1236.0 1664.4,1236.6 1666.9,1235.0 1669.5,1233.6 1672.0,1233.8 1674.5,1234.8 1677.1,1234.8 1679.6,1233.9 1682.1,1219.9 1684.7,1231.0 1687.2,1235.5 1689.7,1232.9 1692.3,1233.1 1694.8,1231.5 1697.3,1231.8 1699.8,1231.2 1702.4,1233.4 1704.9,1233.5 1707.4,1234.9 1710.0,1233.7 1712.5,1235.7 1715.0,1235.6 1717.6,1236.1 1720.1,1235.9 1722.6,1233.4 1725.2,1232.9 1727.7,1216.2 1730.2,1226.6 1732.8,1230.5 1735.3,1231.2 1737.8,1232.5 1740.3,1232.5 1742.9,1232.4 1745.4,1233.3 1747.9,1234.0 1750.5,1234.7 1753.0,1233.7 1755.5,1233.2 1758.1,1232.4 1760.6,1232.3 1763.1,1232.1 1765.7,1231.7 1768.2,1233.0 1770.7,1234.8 1773.3,1236.9 1775.8,1236.7 1778.3,1234.5 1780.9,1233.8 1783.4,1233.0 1785.9,1234.4 1788.4,1233.7 1791.0,1234.1 1793.5,1233.2 1796.0,1233.9 1798.6,1232.3 1801.1,1232.2 1803.6,1233.2 1806.2,1234.0 1808.7,1235.9 1811.2,1233.5 1813.8,1234.8 1816.3,1234.3 1818.8,1234.7 1821.4,1233.2 1823.9,1232.1 1826.4,1233.1 1829.0,1233.3 1831.5,1234.6 1834.0,1234.4 1836.5,1235.2 1839.1,1233.9 1841.6,1234.8 1844.1,1235.2 1846.7,1236.5 1849.2,1235.3 1851.7,1234.1 1854.3,1234.6 1856.8,1233.4 1859.3,1232.7 1861.9,1231.6 1864.4,1210.5 1866.9,1226.9 1869.5,1232.3 1872.0,1232.2 1874.5,1232.4 1877.1,1232.9 1879.6,1230.8 1882.1,1232.3 1884.6,1234.2 1887.2,1236.3 1889.7,1236.3 1892.2,1234.1 1894.8,1232.1 1897.3,1231.4 1899.8,1233.5 1902.4,1235.1 1904.9,1235.7 1907.4,1234.3 1910.0,1233.3 1912.5,1231.8 1915.0,1232.4 1917.6,1233.1 1920.1,1234.0 1922.6,1234.1 1925.1,1234.1 1927.7,1233.5 1930.2,1232.6 1932.7,1206.6 1935.3,1225.4 1937.8,1234.8 1940.3,1235.6 1942.9,1236.1 1945.4,1235.5 1947.9,1235.6 1950.5,1236.4 1953.0,1236.2 1955.5,1233.7 1958.1,1231.6 1960.6,1232.7 1963.1,1234.4 1965.7,1235.7 1968.2,1235.0 1970.7,1235.5 1973.2,1234.8 1975.8,1233.4 1978.3,1232.7 1980.8,1233.9 1983.4,1235.9 1985.9,1236.9 1988.4,1235.3 1991.0,1234.9 1993.5,1234.3" stroke="#b183d9"/><polyline points="1069.5,1230.0 1072.0,1230.8 1074.6,1233.9 1077.1,1230.8 1079.6,1230.2 1082.2,1227.8 1084.7,1229.9 1087.2,1233.2 1089.8,1232.0 1092.3,1228.8 1094.8,1225.1 1097.3,1227.2 1099.9,1231.3 1102.4,1234.0 1104.9,1232.2 1107.5,1232.2 1110.0,1232.5 1112.5,1236.7 1115.1,1232.8 1117.6,1232.5 1120.1,1232.3 1122.7,1158.5 1125.2,1200.0 1127.7,1162.3 1130.3,1200.0 1132.8,1230.4 1135.3,1232.0 1137.9,1232.4 1140.4,1235.3 1142.9,1233.7 1145.4,1232.3 1148.0,1231.4 1150.5,1229.5 1153.0,1213.3 1155.6,1225.9 1158.1,1231.7 1160.6,1232.9 1163.2,1232.1 1165.7,1233.4 1168.2,1229.9 1170.8,1228.0 1173.3,1227.3 1175.8,1229.6 1178.4,1233.3 1180.9,1234.3 1183.4,1234.0 1185.9,1232.3 1188.5,1234.2 1191.0,1232.2 1193.5,1232.9 1196.1,1233.0 1198.6,1235.8 1201.1,1233.3 1203.7,1229.5 1206.2,1225.8 1208.7,1228.4 1211.3,1227.8 1213.8,1231.2 1216.3,1229.6 1218.9,1229.8 1221.4,1229.6 1223.9,1233.1 1226.5,1237.0 1229.0,1237.6 1231.5,1233.8 1234.0,1231.4 1236.6,1229.5 1239.1,1232.9 1241.6,1232.7 1244.2,1234.3 1246.7,1234.2 1249.2,1234.5 1251.8,1232.0 1254.3,1197.8 1256.8,1218.4 1259.4,1230.1 1261.9,1232.5 1264.4,1235.8 1267.0,1234.1 1269.5,1235.5 1272.0,1232.0 1274.6,1231.0 1277.1,1227.3 1279.6,1229.1 1282.1,1228.0 1284.7,1227.9 1287.2,1226.2 1289.7,1226.7 1292.3,1229.7 1294.8,1232.1 1297.3,1235.7 1299.9,1233.0 1302.4,1232.4 1304.9,1227.9 1307.5,1230.2 1310.0,1230.4 1312.5,1231.0 1315.1,1227.7 1317.6,1182.2 1320.1,1212.9 1322.7,1226.3 1325.2,1189.9 1327.7,1218.3 1330.2,1234.1 1332.8,1232.1 1335.3,1230.5 1337.8,1228.3 1340.4,1230.9 1342.9,1232.8 1345.4,1234.9 1348.0,1233.4 1350.5,1235.7 1353.0,1234.0 1355.6,1232.3 1358.1,1229.1 1360.6,1227.0 1363.2,1228.8 1365.7,1230.2 1368.2,1234.0 1370.7,1232.4 1373.3,1231.8 1375.8,1230.1 1378.3,1233.2 1380.9,1233.8 1383.4,1235.4 1385.9,1235.6 1388.5,1237.4 1391.0,1235.6 1393.5,1235.6 1396.1,1231.9 1398.6,1231.0 1401.1,1227.5 1403.7,1228.8 1406.2,1231.0 1408.7,1233.9 1411.3,1232.5 1413.8,1230.4 1416.3,1228.7 1418.8,1229.7 1421.4,1232.2 1423.9,1234.4 1426.4,1235.4 1429.0,1231.5 1431.5,1227.9 1434.0,1227.2 1436.6,1230.0 1439.1,1234.3 1441.6,1234.5 1444.2,1233.8 1446.7,1229.5 1449.2,1231.2 1451.8,1232.2 1454.3,1236.6 1456.8,1237.5 1459.4,1234.5 1461.9,1230.4 1464.4,1229.8 1466.9,1233.6 1469.5,1235.1 1472.0,1234.6 1474.5,1231.7 1477.1,1230.1 1479.6,1227.7 1482.1,1204.4 1484.7,1223.3 1487.2,1233.0 1489.7,1230.7 1492.3,1232.3 1494.8,1229.5 1497.3,1229.9 1499.9,1226.9 1502.4,1186.2 1504.9,1215.1 1507.5,1229.6 1510.0,1230.0 1512.5,1231.5 1515.0,1232.8 1517.6,1233.5 1520.1,1236.4 1522.6,1235.0 1525.2,1153.6 1527.7,1234.1 1530.2,1233.3 1532.8,1233.7 1535.3,1230.6 1537.8,1233.0 1540.4,1231.9 1542.9,1231.1 1545.4,1228.4 1548.0,1226.1 1550.5,1225.9 1553.0,1227.0 1555.5,1226.5 1558.1,1228.2 1560.6,1228.3 1563.1,1231.3 1565.7,1232.4 1568.2,1232.5 1570.7,1232.9 1573.3,1231.6 1575.8,1230.2 1578.3,1227.9 1580.9,1229.9 1583.4,1234.0 1585.9,1235.7 1588.5,1234.7 1591.0,1230.7 1593.5,1229.8 1596.1,1229.4 1598.6,1230.6 1601.1,1230.6 1603.6,1229.8 1606.2,1230.0 1608.7,1230.0 1611.2,1232.2 1613.8,1234.2 1616.3,1234.8 1618.8,1231.7 1621.4,1227.7 1623.9,1196.0 1626.4,1220.2 1629.0,1232.0 1631.5,1231.2 1634.0,1233.1 1636.6,1231.8 1639.1,1233.6 1641.6,1233.3 1644.2,1235.8 1646.7,1235.2 1649.2,1235.4 1651.7,1236.4 1654.3,1234.8 1656.8,1234.9 1659.3,1232.2 1661.9,1231.8 1664.4,1229.6 1666.9,1230.4 1669.5,1230.4 1672.0,1231.9 1674.5,1232.0 1677.1,1231.7 1679.6,1232.0 1682.1,1230.7 1684.7,1231.2 1687.2,1227.6 1689.7,1228.1 1692.3,1228.3 1694.8,1229.3 1697.3,1230.9 1699.8,1231.8 1702.4,1233.4 1704.9,1231.2 1707.4,1229.5 1710.0,1230.7 1712.5,1229.7 1715.0,1228.4 1717.6,1226.9 1720.1,1226.7 1722.6,1189.1 1725.2,1217.2 1727.7,1233.4 1730.2,1236.3 1732.8,1235.3 1735.3,1232.2 1737.8,1229.4 1740.3,1228.4 1742.9,1229.8 1745.4,1229.2 1747.9,1230.0 1750.5,1229.1 1753.0,1230.0 1755.5,1229.7 1758.1,1230.1 1760.6,1232.3 1763.1,1232.3 1765.7,1231.6 1768.2,1229.9 1770.7,1228.5 1773.3,1229.6 1775.8,1230.8 1778.3,1233.1 1780.9,1233.7 1783.4,1233.7 1785.9,1231.8 1788.4,1232.7 1791.0,1230.1 1793.5,1233.5 1796.0,1231.9 1798.6,1230.5 1801.1,1230.9 1803.6,1229.3 1806.2,1234.0 1808.7,1197.4 1811.2,1219.8 1813.8,1227.4 1816.3,1229.0 1818.8,1231.2 1821.4,1232.6 1823.9,1233.9 1826.4,1234.0 1829.0,1230.6 1831.5,1231.8 1834.0,1231.3 1836.5,1233.2 1839.1,1231.1 1841.6,1188.5 1844.1,1216.9 1846.7,1230.4 1849.2,1229.6 1851.7,1229.6 1854.3,1229.8 1856.8,1231.8 1859.3,1230.5 1861.9,1231.6 1864.4,1231.1 1866.9,1232.9 1869.5,1231.8 1872.0,1234.1 1874.5,1235.4 1877.1,1234.7 1879.6,1233.4 1882.1,1231.6 1884.6,1232.4 1887.2,1231.4 1889.7,1232.1 1892.2,1229.5 1894.8,1228.6 1897.3,1229.8 1899.8,1228.9 1902.4,1230.2 1904.9,1229.7 1907.4,1233.2 1910.0,1232.4 1912.5,1231.9 1915.0,1211.6 1917.6,1226.5 1920.1,1230.0 1922.6,1232.0 1925.1,1229.0 1927.7,1231.1 1930.2,1230.4 1932.7,1231.8 1935.3,1231.4 1937.8,1230.7 1940.3,1230.8 1942.9,1228.7 1945.4,1227.8 1947.9,1230.0 1950.5,1229.8 1953.0,1233.4 1955.5,1233.6 1958.1,1234.4 1960.6,1233.1 1963.1,1233.2 1965.7,1236.3 1968.2,1235.3 1970.7,1231.3 1973.2,1232.1 1975.8,1233.7 1978.3,1237.7 1980.8,1237.5 1983.4,1236.8 1985.9,1234.5 1988.4,1230.1 1991.0,1228.5 1993.5,1227.7" stroke="#3a7fe0"/><polyline points="1069.5,1236.8 1072.0,1236.0 1074.6,1234.3 1077.1,1233.4 1079.6,1231.5 1082.2,1231.7 1084.7,1231.8 1087.2,1234.3 1089.8,1153.6 1092.3,1233.1 1094.8,1231.3 1097.3,1231.9 1099.9,1233.2 1102.4,1233.9 1104.9,1234.9 1107.5,1235.9 1110.0,1234.7 1112.5,1233.6 1115.1,1234.1 1117.6,1234.7 1120.1,1233.7 1122.7,1231.7 1125.2,1233.1 1127.7,1232.7 1130.3,1234.2 1132.8,1233.1 1135.3,1234.8 1137.9,1234.8 1140.4,1235.6 1142.9,1236.5 1145.4,1236.5 1148.0,1237.2 1150.5,1235.7 1153.0,1234.1 1155.6,1233.4 1158.1,1232.4 1160.6,1233.2 1163.2,1232.5 1165.7,1232.6 1168.2,1231.9 1170.8,1231.8 1173.3,1232.4 1175.8,1232.1 1178.4,1232.7 1180.9,1234.9 1183.4,1234.9 1185.9,1233.4 1188.5,1231.7 1191.0,1233.7 1193.5,1233.7 1196.1,1235.1 1198.6,1232.9 1201.1,1233.3 1203.7,1231.8 1206.2,1234.2 1208.7,1235.0 1211.3,1234.7 1213.8,1234.6 1216.3,1235.6 1218.9,1236.7 1221.4,1234.2 1223.9,1232.3 1226.5,1232.9 1229.0,1235.4 1231.5,1234.8 1234.0,1232.8 1236.6,1230.7 1239.1,1232.8 1241.6,1233.1 1244.2,1235.3 1246.7,1235.5 1249.2,1236.9 1251.8,1213.7 1254.3,1228.2 1256.8,1234.7 1259.4,1235.5 1261.9,1233.1 1264.4,1232.8 1267.0,1234.9 1269.5,1234.6 1272.0,1232.3 1274.6,1229.6 1277.1,1230.5 1279.6,1233.4 1282.1,1234.0 1284.7,1233.7 1287.2,1231.3 1289.7,1231.2 1292.3,1231.7 1294.8,1231.2 1297.3,1232.2 1299.9,1232.4 1302.4,1233.5 1304.9,1232.4 1307.5,1231.9 1310.0,1231.0 1312.5,1232.6 1315.1,1231.6 1317.6,1231.8 1320.1,1231.6 1322.7,1234.4 1325.2,1235.3 1327.7,1234.4 1330.2,1231.4 1332.8,1231.5 1335.3,1231.2 1337.8,1231.8 1340.4,1233.1 1342.9,1233.3 1345.4,1234.3 1348.0,1234.2 1350.5,1235.5 1353.0,1235.7 1355.6,1234.0 1358.1,1233.1 1360.6,1233.3 1363.2,1235.5 1365.7,1234.7 1368.2,1233.3 1370.7,1230.8 1373.3,1230.8 1375.8,1233.0 1378.3,1234.8 1380.9,1235.9 1383.4,1235.1 1385.9,1233.3 1388.5,1234.2 1391.0,1235.1 1393.5,1236.3 1396.1,1236.8 1398.6,1224.3 1401.1,1232.5 1403.7,1234.5 1406.2,1232.8 1408.7,1234.5 1411.3,1234.7 1413.8,1234.7 1416.3,1234.0 1418.8,1235.1 1421.4,1236.3 1423.9,1235.7 1426.4,1235.2 1429.0,1233.8 1431.5,1233.2 1434.0,1233.5 1436.6,1233.4 1439.1,1234.8 1441.6,1233.3 1444.2,1234.6 1446.7,1233.5 1449.2,1233.5 1451.8,1231.6 1454.3,1231.8 1456.8,1231.2 1459.4,1230.6 1461.9,1229.7 1464.4,1231.5 1466.9,1233.9 1469.5,1234.4 1472.0,1235.2 1474.5,1235.5 1477.1,1237.2 1479.6,1235.5 1482.1,1234.8 1484.7,1232.1 1487.2,1231.6 1489.7,1231.1 1492.3,1233.0 1494.8,1234.6 1497.3,1236.2 1499.9,1236.9 1502.4,1235.1 1504.9,1234.3 1507.5,1234.7 1510.0,1234.3 1512.5,1234.0 1515.0,1231.5 1517.6,1233.3 1520.1,1231.3 1522.6,1233.6 1525.2,1212.4 1527.7,1228.2 1530.2,1234.8 1532.8,1233.3 1535.3,1234.3 1537.8,1232.2 1540.4,1234.9 1542.9,1235.8 1545.4,1237.7 1548.0,1235.4 1550.5,1232.6 1553.0,1229.9 1555.5,1230.7 1558.1,1233.5 1560.6,1233.9 1563.1,1234.0 1565.7,1231.8 1568.2,1232.2 1570.7,1232.0 1573.3,1234.0 1575.8,1235.6 1578.3,1237.2 1580.9,1236.4 1583.4,1235.9 1585.9,1233.0 1588.5,1234.3 1591.0,1232.8 1593.5,1235.5 1596.1,1235.3 1598.6,1234.8 1601.1,1234.4 1603.6,1232.8 1606.2,1233.9 1608.7,1233.4 1611.2,1234.2 1613.8,1235.6 1616.3,1234.6 1618.8,1234.6 1621.4,1233.1 1623.9,1232.7 1626.4,1233.6 1629.0,1234.2 1631.5,1235.7 1634.0,1232.9 1636.6,1232.3 1639.1,1232.8 1641.6,1234.3 1644.2,1236.3 1646.7,1235.3 1649.2,1236.5 1651.7,1236.1 1654.3,1236.2 1656.8,1234.6 1659.3,1234.4 1661.9,1234.2 1664.4,1234.9 1666.9,1233.3 1669.5,1235.0 1672.0,1233.3 1674.5,1234.1 1677.1,1233.7 1679.6,1235.5 1682.1,1234.9 1684.7,1235.2 1687.2,1233.2 1689.7,1234.5 1692.3,1233.5 1694.8,1236.2 1697.3,1235.4 1699.8,1233.6 1702.4,1233.3 1704.9,1234.2 1707.4,1235.5 1710.0,1234.1 1712.5,1234.2 1715.0,1235.2 1717.6,1235.3 1720.1,1235.0 1722.6,1235.7 1725.2,1235.4 1727.7,1233.3 1730.2,1230.8 1732.8,1230.3 1735.3,1232.4 1737.8,1234.0 1740.3,1234.8 1742.9,1233.5 1745.4,1232.5 1747.9,1232.7 1750.5,1233.9 1753.0,1235.2 1755.5,1236.7 1758.1,1237.3 1760.6,1236.1 1763.1,1236.1 1765.7,1233.5 1768.2,1232.2 1770.7,1232.0 1773.3,1231.8 1775.8,1232.8 1778.3,1233.3 1780.9,1235.2 1783.4,1236.1 1785.9,1235.1 1788.4,1236.1 1791.0,1236.5 1793.5,1237.4 1796.0,1236.2 1798.6,1235.4 1801.1,1234.7 1803.6,1233.2 1806.2,1231.8 1808.7,1231.0 1811.2,1231.4 1813.8,1233.1 1816.3,1232.3 1818.8,1232.4 1821.4,1232.4 1823.9,1232.4 1826.4,1233.8 1829.0,1234.4 1831.5,1235.4 1834.0,1236.2 1836.5,1234.4 1839.1,1235.0 1841.6,1233.7 1844.1,1233.4 1846.7,1232.3 1849.2,1231.0 1851.7,1231.2 1854.3,1230.9 1856.8,1231.5 1859.3,1231.6 1861.9,1230.8 1864.4,1231.3 1866.9,1221.0 1869.5,1229.5 1872.0,1232.8 1874.5,1231.9 1877.1,1232.7 1879.6,1233.8 1882.1,1235.3 1884.6,1235.2 1887.2,1233.5 1889.7,1233.1 1892.2,1234.1 1894.8,1235.7 1897.3,1235.8 1899.8,1234.5 1902.4,1233.0 1904.9,1233.5 1907.4,1234.4 1910.0,1234.4 1912.5,1232.7 1915.0,1232.8 1917.6,1233.0 1920.1,1234.2 1922.6,1232.5 1925.1,1232.9 1927.7,1233.2 1930.2,1232.0 1932.7,1230.8 1935.3,1231.0 1937.8,1231.6 1940.3,1232.3 1942.9,1231.1 1945.4,1230.5 1947.9,1232.4 1950.5,1234.3 1953.0,1236.8 1955.5,1234.4 1958.1,1232.1 1960.6,1232.1 1963.1,1233.2 1965.7,1233.3 1968.2,1231.7 1970.7,1231.3 1973.2,1231.3 1975.8,1230.7 1978.3,1232.3 1980.8,1232.0 1983.4,1234.1 1985.9,1232.4 1988.4,1233.1 1991.0,1233.1 1993.5,1234.1" stroke="#f08c6e"/><polyline points="1069.5,1234.2 1072.0,1232.8 1074.6,1232.5 1077.1,1234.2 1079.6,1234.8 1082.2,1233.9 1084.7,1234.9 1087.2,1233.6 1089.8,1232.1 1092.3,1230.6 1094.8,1229.8 1097.3,1230.2 1099.9,1230.5 1102.4,1232.0 1104.9,1232.4 1107.5,1233.0 1110.0,1234.5 1112.5,1235.3 1115.1,1233.8 1117.6,1207.4 1120.1,1225.8 1122.7,1233.1 1125.2,1235.2 1127.7,1233.6 1130.3,1235.8 1132.8,1235.0 1135.3,1235.9 1137.9,1234.5 1140.4,1233.1 1142.9,1230.9 1145.4,1231.2 1148.0,1233.4 1150.5,1236.3 1153.0,1237.7 1155.6,1237.5 1158.1,1237.0 1160.6,1236.3 1163.2,1236.2 1165.7,1234.0 1168.2,1233.7 1170.8,1232.6 1173.3,1232.9 1175.8,1204.0 1178.4,1224.6 1180.9,1235.9 1183.4,1234.9 1185.9,1233.4 1188.5,1231.7 1191.0,1232.3 1193.5,1233.3 1196.1,1233.5 1198.6,1232.8 1201.1,1232.8 1203.7,1232.1 1206.2,1230.8 1208.7,1229.6 1211.3,1228.8 1213.8,1229.1 1216.3,1230.1 1218.9,1230.6 1221.4,1232.7 1223.9,1234.3 1226.5,1234.2 1229.0,1233.3 1231.5,1233.9 1234.0,1234.3 1236.6,1235.3 1239.1,1234.4 1241.6,1233.8 1244.2,1233.7 1246.7,1231.8 1249.2,1234.0 1251.8,1232.0 1254.3,1233.5 1256.8,1232.5 1259.4,1232.8 1261.9,1231.7 1264.4,1232.9 1267.0,1232.9 1269.5,1234.8 1272.0,1234.7 1274.6,1234.3 1277.1,1234.4 1279.6,1233.8 1282.1,1236.0 1284.7,1234.6 1287.2,1235.4 1289.7,1234.6 1292.3,1233.2 1294.8,1232.3 1297.3,1231.8 1299.9,1235.0 1302.4,1235.6 1304.9,1237.0 1307.5,1235.0 1310.0,1235.4 1312.5,1235.1 1315.1,1236.7 1317.6,1234.7 1320.1,1233.1 1322.7,1232.6 1325.2,1234.1 1327.7,1235.3 1330.2,1234.5 1332.8,1233.6 1335.3,1234.1 1337.8,1235.4 1340.4,1235.2 1342.9,1234.7 1345.4,1233.0 1348.0,1234.5 1350.5,1235.2 1353.0,1237.2 1355.6,1234.9 1358.1,1233.4 1360.6,1233.6 1363.2,1235.2 1365.7,1234.9 1368.2,1234.3 1370.7,1210.0 1373.3,1228.0 1375.8,1233.7 1378.3,1234.6 1380.9,1234.0 1383.4,1232.4 1385.9,1232.5 1388.5,1232.7 1391.0,1233.5 1393.5,1235.2 1396.1,1233.4 1398.6,1233.1 1401.1,1231.1 1403.7,1233.3 1406.2,1235.9 1408.7,1235.2 1411.3,1232.5 1413.8,1231.8 1416.3,1231.4 1418.8,1231.5 1421.4,1232.1 1423.9,1232.2 1426.4,1234.9 1429.0,1234.2 1431.5,1205.2 1434.0,1226.4 1436.6,1235.2 1439.1,1235.8 1441.6,1200.4 1444.2,1224.3 1446.7,1232.1 1449.2,1234.1 1451.8,1231.7 1454.3,1232.2 1456.8,1231.7 1459.4,1232.2 1461.9,1232.2 1464.4,1232.3 1466.9,1234.3 1469.5,1233.5 1472.0,1232.9 1474.5,1231.9 1477.1,1231.3 1479.6,1231.9 1482.1,1230.9 1484.7,1233.7 1487.2,1234.1 1489.7,1234.4 1492.3,1234.1 1494.8,1232.0 1497.3,1230.8 1499.9,1229.5 1502.4,1230.4 1504.9,1232.8 1507.5,1232.4 1510.0,1231.9 1512.5,1231.3 1515.0,1232.0 1517.6,1232.7 1520.1,1233.4 1522.6,1235.1 1525.2,1236.7 1527.7,1235.8 1530.2,1233.8 1532.8,1231.5 1535.3,1232.4 1537.8,1234.0 1540.4,1235.4 1542.9,1235.8 1545.4,1235.5 1548.0,1235.2 1550.5,1233.5 1553.0,1234.0 1555.5,1235.1 1558.1,1235.8 1560.6,1234.4 1563.1,1234.4 1565.7,1233.7 1568.2,1233.6 1570.7,1231.0 1573.3,1230.0 1575.8,1229.8 1578.3,1232.7 1580.9,1234.1 1583.4,1235.3 1585.9,1234.7 1588.5,1236.2 1591.0,1234.8 1593.5,1233.5 1596.1,1232.9 1598.6,1234.4 1601.1,1233.3 1603.6,1232.3 1606.2,1230.8 1608.7,1233.3 1611.2,1232.0 1613.8,1231.9 1616.3,1231.0 1618.8,1233.8 1621.4,1234.8 1623.9,1236.4 1626.4,1236.1 1629.0,1234.9 1631.5,1234.6 1634.0,1234.6 1636.6,1236.1 1639.1,1233.2 1641.6,1233.4 1644.2,1233.1 1646.7,1234.6 1649.2,1235.0 1651.7,1234.5 1654.3,1236.0 1656.8,1235.1 1659.3,1235.9 1661.9,1232.8 1664.4,1232.4 1666.9,1232.5 1669.5,1234.7 1672.0,1235.2 1674.5,1235.7 1677.1,1235.7 1679.6,1234.4 1682.1,1233.7 1684.7,1234.0 1687.2,1236.2 1689.7,1234.8 1692.3,1234.5 1694.8,1233.8 1697.3,1233.5 1699.8,1231.3 1702.4,1203.6 1704.9,1224.9 1707.4,1233.4 1710.0,1232.7 1712.5,1232.9 1715.0,1234.7 1717.6,1234.5 1720.1,1232.9 1722.6,1233.3 1725.2,1232.8 1727.7,1233.7 1730.2,1233.7 1732.8,1234.7 1735.3,1232.0 1737.8,1230.3 1740.3,1232.5 1742.9,1235.8 1745.4,1237.5 1747.9,1235.3 1750.5,1232.1 1753.0,1232.5 1755.5,1232.4 1758.1,1233.4 1760.6,1233.7 1763.1,1232.9 1765.7,1234.1 1768.2,1233.0 1770.7,1233.3 1773.3,1232.6 1775.8,1231.7 1778.3,1234.2 1780.9,1233.9 1783.4,1235.5 1785.9,1232.9 1788.4,1217.8 1791.0,1226.4 1793.5,1231.4 1796.0,1230.7 1798.6,1230.1 1801.1,1229.8 1803.6,1231.9 1806.2,1234.7 1808.7,1233.7 1811.2,1234.7 1813.8,1234.6 1816.3,1236.0 1818.8,1232.8 1821.4,1231.5 1823.9,1232.8 1826.4,1236.0 1829.0,1237.0 1831.5,1236.5 1834.0,1235.4 1836.5,1235.0 1839.1,1233.3 1841.6,1231.1 1844.1,1228.7 1846.7,1231.0 1849.2,1232.0 1851.7,1234.8 1854.3,1233.9 1856.8,1234.5 1859.3,1200.5 1861.9,1222.9 1864.4,1233.9 1866.9,1232.2 1869.5,1232.3 1872.0,1230.9 1874.5,1233.4 1877.1,1235.5 1879.6,1234.9 1882.1,1232.0 1884.6,1231.6 1887.2,1232.0 1889.7,1232.7 1892.2,1230.6 1894.8,1232.4 1897.3,1234.2 1899.8,1237.0 1902.4,1235.1 1904.9,1234.6 1907.4,1232.4 1910.0,1234.2 1912.5,1233.3 1915.0,1234.7 1917.6,1233.8 1920.1,1233.9 1922.6,1231.7 1925.1,1232.5 1927.7,1231.8 1930.2,1234.9 1932.7,1234.9 1935.3,1235.2 1937.8,1235.1 1940.3,1232.9 1942.9,1232.2 1945.4,1231.8 1947.9,1232.2 1950.5,1233.0 1953.0,1230.5 1955.5,1231.2 1958.1,1232.1 1960.6,1232.5 1963.1,1233.2 1965.7,1231.4 1968.2,1233.1 1970.7,1232.7 1973.2,1232.9 1975.8,1231.6 1978.3,1232.3 1980.8,1232.9 1983.4,1232.2 1985.9,1231.4 1988.4,1231.8 1991.0,1232.9 1993.5,1232.0" stroke="#d6d4e9"/><polyline points="1069.5,1234.9 1072.0,1236.0 1074.6,1235.6 1077.1,1233.3 1079.6,1231.3 1082.2,1232.2 1084.7,1234.1 1087.2,1233.6 1089.8,1232.1 1092.3,1231.4 1094.8,1234.0 1097.3,1235.9 1099.9,1235.5 1102.4,1234.7 1104.9,1233.2 1107.5,1234.8 1110.0,1233.9 1112.5,1234.4 1115.1,1234.5 1117.6,1236.1 1120.1,1236.8 1122.7,1174.7 1125.2,1234.9 1127.7,1221.1 1130.3,1229.9 1132.8,1234.5 1135.3,1235.6 1137.9,1235.5 1140.4,1236.1 1142.9,1236.1 1145.4,1235.6 1148.0,1233.8 1150.5,1233.8 1153.0,1234.7 1155.6,1235.3 1158.1,1236.5 1160.6,1236.5 1163.2,1235.3 1165.7,1233.0 1168.2,1230.5 1170.8,1230.9 1173.3,1231.7 1175.8,1233.0 1178.4,1233.6 1180.9,1234.4 1183.4,1233.4 1185.9,1233.5 1188.5,1231.8 1191.0,1213.3 1193.5,1227.9 1196.1,1234.7 1198.6,1233.7 1201.1,1233.0 1203.7,1234.2 1206.2,1236.0 1208.7,1235.6 1211.3,1235.8 1213.8,1233.7 1216.3,1234.1 1218.9,1232.5 1221.4,1234.1 1223.9,1232.8 1226.5,1234.2 1229.0,1232.2 1231.5,1234.5 1234.0,1233.1 1236.6,1235.1 1239.1,1232.6 1241.6,1233.0 1244.2,1231.8 1246.7,1232.9 1249.2,1232.4 1251.8,1233.7 1254.3,1213.5 1256.8,1228.3 1259.4,1235.1 1261.9,1235.4 1264.4,1236.7 1267.0,1236.3 1269.5,1236.4 1272.0,1236.9 1274.6,1235.9 1277.1,1235.4 1279.6,1233.4 1282.1,1232.2 1284.7,1231.7 1287.2,1231.9 1289.7,1208.0 1292.3,1223.8 1294.8,1231.7 1297.3,1231.8 1299.9,1233.3 1302.4,1233.3 1304.9,1235.0 1307.5,1234.1 1310.0,1234.7 1312.5,1234.5 1315.1,1235.4 1317.6,1236.0 1320.1,1234.6 1322.7,1235.9 1325.2,1235.5 1327.7,1218.9 1330.2,1228.2 1332.8,1233.4 1335.3,1235.3 1337.8,1236.4 1340.4,1236.4 1342.9,1236.3 1345.4,1236.5 1348.0,1233.8 1350.5,1234.3 1353.0,1233.3 1355.6,1235.5 1358.1,1233.9 1360.6,1235.8 1363.2,1234.3 1365.7,1233.4 1368.2,1233.3 1370.7,1232.7 1373.3,1232.8 1375.8,1232.1 1378.3,1233.5 1380.9,1236.0 1383.4,1236.3 1385.9,1237.5 1388.5,1236.6 1391.0,1236.4 1393.5,1236.3 1396.1,1237.1 1398.6,1237.3 1401.1,1237.4 1403.7,1237.2 1406.2,1235.3 1408.7,1234.3 1411.3,1234.4 1413.8,1234.3 1416.3,1235.0 1418.8,1234.6 1421.4,1237.0 1423.9,1235.1 1426.4,1234.5 1429.0,1232.9 1431.5,1233.9 1434.0,1208.0 1436.6,1224.4 1439.1,1231.0 1441.6,1231.9 1444.2,1232.5 1446.7,1234.1 1449.2,1233.2 1451.8,1233.7 1454.3,1234.2 1456.8,1235.7 1459.4,1234.5 1461.9,1233.8 1464.4,1234.4 1466.9,1234.3 1469.5,1233.9 1472.0,1232.6 1474.5,1234.4 1477.1,1234.8 1479.6,1235.5 1482.1,1233.9 1484.7,1233.3 1487.2,1232.2 1489.7,1233.1 1492.3,1233.8 1494.8,1233.2 1497.3,1232.4 1499.9,1232.7 1502.4,1235.1 1504.9,1235.6 1507.5,1235.6 1510.0,1233.3 1512.5,1234.0 1515.0,1232.9 1517.6,1234.6 1520.1,1234.4 1522.6,1235.0 1525.2,1235.7 1527.7,1235.8 1530.2,1234.2 1532.8,1232.3 1535.3,1232.5 1537.8,1232.6 1540.4,1234.4 1542.9,1235.1 1545.4,1236.4 1548.0,1236.5 1550.5,1236.9 1553.0,1235.6 1555.5,1234.4 1558.1,1232.8 1560.6,1234.5 1563.1,1233.3 1565.7,1232.5 1568.2,1232.1 1570.7,1234.1 1573.3,1235.7 1575.8,1235.9 1578.3,1235.4 1580.9,1234.4 1583.4,1233.0 1585.9,1231.6 1588.5,1231.8 1591.0,1231.6 1593.5,1232.3 1596.1,1233.8 1598.6,1235.7 1601.1,1236.8 1603.6,1236.8 1606.2,1236.5 1608.7,1235.3 1611.2,1233.5 1613.8,1232.9 1616.3,1233.3 1618.8,1233.6 1621.4,1232.9 1623.9,1233.2 1626.4,1234.0 1629.0,1234.5 1631.5,1234.1 1634.0,1234.7 1636.6,1234.9 1639.1,1235.1 1641.6,1233.3 1644.2,1233.8 1646.7,1232.5 1649.2,1232.6 1651.7,1231.7 1654.3,1233.0 1656.8,1234.6 1659.3,1235.4 1661.9,1235.9 1664.4,1235.0 1666.9,1235.8 1669.5,1236.6 1672.0,1235.1 1674.5,1235.3 1677.1,1234.5 1679.6,1236.2 1682.1,1233.4 1684.7,1233.3 1687.2,1233.6 1689.7,1235.1 1692.3,1234.2 1694.8,1232.6 1697.3,1232.0 1699.8,1233.6 1702.4,1233.5 1704.9,1232.9 1707.4,1232.8 1710.0,1233.0 1712.5,1207.5 1715.0,1223.3 1717.6,1230.6 1720.1,1232.3 1722.6,1232.9 1725.2,1233.3 1727.7,1231.8 1730.2,1231.9 1732.8,1231.6 1735.3,1232.1 1737.8,1232.8 1740.3,1232.6 1742.9,1233.3 1745.4,1234.1 1747.9,1234.2 1750.5,1234.3 1753.0,1232.3 1755.5,1232.4 1758.1,1231.2 1760.6,1231.5 1763.1,1233.1 1765.7,1233.9 1768.2,1234.7 1770.7,1233.4 1773.3,1233.9 1775.8,1233.8 1778.3,1233.9 1780.9,1234.5 1783.4,1233.5 1785.9,1234.1 1788.4,1232.5 1791.0,1232.8 1793.5,1233.7 1796.0,1233.1 1798.6,1233.3 1801.1,1232.9 1803.6,1235.2 1806.2,1236.3 1808.7,1237.2 1811.2,1236.7 1813.8,1236.9 1816.3,1236.9 1818.8,1237.6 1821.4,1237.7 1823.9,1237.2 1826.4,1237.0 1829.0,1236.5 1831.5,1236.8 1834.0,1236.6 1836.5,1235.8 1839.1,1235.1 1841.6,1233.6 1844.1,1234.6 1846.7,1233.8 1849.2,1234.9 1851.7,1234.4 1854.3,1235.5 1856.8,1236.0 1859.3,1234.4 1861.9,1234.4 1864.4,1234.7 1866.9,1235.7 1869.5,1236.3 1872.0,1236.0 1874.5,1237.1 1877.1,1236.7 1879.6,1235.9 1882.1,1235.6 1884.6,1235.3 1887.2,1234.2 1889.7,1234.1 1892.2,1232.4 1894.8,1232.6 1897.3,1231.2 1899.8,1232.5 1902.4,1233.5 1904.9,1234.4 1907.4,1232.8 1910.0,1233.5 1912.5,1233.2 1915.0,1233.7 1917.6,1232.4 1920.1,1234.0 1922.6,1233.5 1925.1,1234.1 1927.7,1231.8 1930.2,1233.3 1932.7,1233.9 1935.3,1235.0 1937.8,1235.5 1940.3,1235.0 1942.9,1234.0 1945.4,1232.3 1947.9,1231.5 1950.5,1232.2 1953.0,1232.8 1955.5,1233.2 1958.1,1232.9 1960.6,1233.0 1963.1,1231.5 1965.7,1231.4 1968.2,1230.6 1970.7,1233.3 1973.2,1234.3 1975.8,1236.4 1978.3,1235.6 1980.8,1236.7 1983.4,1234.7 1985.9,1234.3 1988.4,1232.9 1991.0,1233.0 1993.5,1232.0" stroke="#c5b3e3"/><polyline points="1069.5,1234.0 1072.0,1233.6 1074.6,1232.2 1077.1,1234.1 1079.6,1234.5 1082.2,1210.3 1084.7,1228.0 1087.2,1233.2 1089.8,1232.3 1092.3,1230.8 1094.8,1233.5 1097.3,1213.1 1099.9,1228.7 1102.4,1234.4 1104.9,1234.2 1107.5,1234.9 1110.0,1235.9 1112.5,1237.0 1115.1,1237.0 1117.6,1236.6 1120.1,1235.5 1122.7,1235.5 1125.2,1235.6 1127.7,1235.1 1130.3,1233.7 1132.8,1233.3 1135.3,1232.9 1137.9,1233.0 1140.4,1233.2 1142.9,1211.9 1145.4,1226.3 1148.0,1232.8 1150.5,1234.0 1153.0,1205.6 1155.6,1226.1 1158.1,1233.9 1160.6,1232.8 1163.2,1232.1 1165.7,1234.9 1168.2,1234.8 1170.8,1233.6 1173.3,1230.7 1175.8,1230.6 1178.4,1230.3 1180.9,1230.0 1183.4,1231.2 1185.9,1231.7 1188.5,1234.1 1191.0,1232.5 1193.5,1233.6 1196.1,1233.7 1198.6,1235.0 1201.1,1233.4 1203.7,1231.2 1206.2,1230.5 1208.7,1231.1 1211.3,1231.7 1213.8,1231.8 1216.3,1231.8 1218.9,1231.3 1221.4,1231.4 1223.9,1231.1 1226.5,1232.7 1229.0,1233.1 1231.5,1233.2 1234.0,1231.7 1236.6,1231.7 1239.1,1232.9 1241.6,1235.0 1244.2,1233.2 1246.7,1234.6 1249.2,1231.8 1251.8,1231.4 1254.3,1230.6 1256.8,1230.8 1259.4,1232.3 1261.9,1231.5 1264.4,1231.5 1267.0,1232.9 1269.5,1234.9 1272.0,1236.8 1274.6,1235.1 1277.1,1232.8 1279.6,1233.1 1282.1,1234.7 1284.7,1237.1 1287.2,1237.7 1289.7,1237.3 1292.3,1234.2 1294.8,1232.8 1297.3,1232.6 1299.9,1235.1 1302.4,1235.0 1304.9,1235.1 1307.5,1235.0 1310.0,1235.0 1312.5,1234.4 1315.1,1231.9 1317.6,1232.0 1320.1,1233.2 1322.7,1236.2 1325.2,1235.3 1327.7,1233.7 1330.2,1232.0 1332.8,1231.2 1335.3,1231.9 1337.8,1233.3 1340.4,1235.1 1342.9,1204.2 1345.4,1222.0 1348.0,1230.1 1350.5,1230.8 1353.0,1232.7 1355.6,1233.0 1358.1,1234.8 1360.6,1233.8 1363.2,1217.0 1365.7,1226.9 1368.2,1230.8 1370.7,1232.5 1373.3,1231.8 1375.8,1232.3 1378.3,1230.2 1380.9,1212.6 1383.4,1226.8 1385.9,1233.9 1388.5,1233.4 1391.0,1233.4 1393.5,1231.5 1396.1,1231.5 1398.6,1229.2 1401.1,1231.0 1403.7,1231.6 1406.2,1232.4 1408.7,1230.6 1411.3,1231.9 1413.8,1231.6 1416.3,1231.7 1418.8,1230.8 1421.4,1218.3 1423.9,1231.0 1426.4,1234.2 1429.0,1234.0 1431.5,1233.1 1434.0,1234.7 1436.6,1233.3 1439.1,1234.4 1441.6,1232.0 1444.2,1234.4 1446.7,1233.0 1449.2,1235.2 1451.8,1235.5 1454.3,1236.7 1456.8,1237.2 1459.4,1237.3 1461.9,1236.7 1464.4,1236.1 1466.9,1234.3 1469.5,1232.1 1472.0,1231.5 1474.5,1230.5 1477.1,1232.1 1479.6,1231.0 1482.1,1233.1 1484.7,1233.2 1487.2,1235.2 1489.7,1234.7 1492.3,1234.4 1494.8,1231.9 1497.3,1230.7 1499.9,1230.9 1502.4,1233.2 1504.9,1233.3 1507.5,1232.6 1510.0,1230.3 1512.5,1229.7 1515.0,1231.5 1517.6,1231.8 1520.1,1234.5 1522.6,1233.7 1525.2,1235.6 1527.7,1235.2 1530.2,1234.9 1532.8,1235.2 1535.3,1234.4 1537.8,1234.8 1540.4,1233.8 1542.9,1232.1 1545.4,1232.9 1548.0,1234.2 1550.5,1236.9 1553.0,1236.4 1555.5,1233.6 1558.1,1231.4 1560.6,1230.6 1563.1,1230.5 1565.7,1233.0 1568.2,1234.4 1570.7,1237.1 1573.3,1234.6 1575.8,1232.1 1578.3,1231.5 1580.9,1231.2 1583.4,1232.6 1585.9,1231.8 1588.5,1232.2 1591.0,1231.0 1593.5,1231.1 1596.1,1232.5 1598.6,1234.5 1601.1,1234.9 1603.6,1232.9 1606.2,1230.2 1608.7,1228.7 1611.2,1229.5 1613.8,1232.7 1616.3,1233.9 1618.8,1233.1 1621.4,1231.5 1623.9,1231.0 1626.4,1232.2 1629.0,1232.0 1631.5,1232.0 1634.0,1232.4 1636.6,1232.8 1639.1,1231.9 1641.6,1232.2 1644.2,1231.6 1646.7,1231.6 1649.2,1231.8 1651.7,1233.4 1654.3,1236.5 1656.8,1237.1 1659.3,1236.8 1661.9,1235.3 1664.4,1235.5 1666.9,1233.3 1669.5,1233.1 1672.0,1231.0 1674.5,1230.9 1677.1,1231.7 1679.6,1232.5 1682.1,1232.5 1684.7,1230.5 1687.2,1229.3 1689.7,1231.5 1692.3,1231.5 1694.8,1234.0 1697.3,1234.6 1699.8,1206.8 1702.4,1227.0 1704.9,1235.7 1707.4,1234.2 1710.0,1233.2 1712.5,1233.2 1715.0,1233.5 1717.6,1234.1 1720.1,1231.8 1722.6,1233.4 1725.2,1233.1 1727.7,1233.2 1730.2,1233.6 1732.8,1231.4 1735.3,1233.8 1737.8,1234.4 1740.3,1237.0 1742.9,1234.2 1745.4,1233.5 1747.9,1233.2 1750.5,1235.1 1753.0,1235.9 1755.5,1234.7 1758.1,1234.5 1760.6,1231.9 1763.1,1231.1 1765.7,1230.8 1768.2,1231.5 1770.7,1231.2 1773.3,1231.7 1775.8,1230.6 1778.3,1232.0 1780.9,1232.9 1783.4,1235.4 1785.9,1234.6 1788.4,1231.6 1791.0,1232.1 1793.5,1234.2 1796.0,1234.9 1798.6,1232.2 1801.1,1232.2 1803.6,1233.5 1806.2,1234.3 1808.7,1232.9 1811.2,1232.8 1813.8,1232.8 1816.3,1231.7 1818.8,1230.1 1821.4,1231.0 1823.9,1230.9 1826.4,1232.9 1829.0,1232.8 1831.5,1234.5 1834.0,1232.7 1836.5,1233.6 1839.1,1232.0 1841.6,1232.2 1844.1,1230.8 1846.7,1232.3 1849.2,1232.5 1851.7,1231.5 1854.3,1230.9 1856.8,1233.2 1859.3,1234.4 1861.9,1235.3 1864.4,1234.0 1866.9,1232.5 1869.5,1232.9 1872.0,1231.3 1874.5,1233.0 1877.1,1216.5 1879.6,1227.7 1882.1,1230.9 1884.6,1230.8 1887.2,1232.2 1889.7,1232.6 1892.2,1233.8 1894.8,1231.5 1897.3,1233.2 1899.8,1234.1 1902.4,1236.8 1904.9,1237.1 1907.4,1237.1 1910.0,1236.1 1912.5,1234.3 1915.0,1220.7 1917.6,1212.8 1920.1,1230.5 1922.6,1237.2 1925.1,1235.4 1927.7,1234.9 1930.2,1233.2 1932.7,1234.1 1935.3,1232.2 1937.8,1232.5 1940.3,1232.9 1942.9,1233.1 1945.4,1233.0 1947.9,1231.8 1950.5,1231.3 1953.0,1232.7 1955.5,1233.6 1958.1,1235.4 1960.6,1234.7 1963.1,1235.7 1965.7,1235.7 1968.2,1234.2 1970.7,1231.1 1973.2,1229.5 1975.8,1229.1 1978.3,1231.7 1980.8,1234.3 1983.4,1235.2 1985.9,1232.7 1988.4,1232.7 1991.0,1206.5 1993.5,1226.9" stroke="#9ec0f1"/><polyline points="1069.5,1235.3 1072.0,1235.9 1074.6,1235.9 1077.1,1230.1 1079.6,1234.0 1082.2,1234.5 1084.7,1235.7 1087.2,1235.1 1089.8,1236.8 1092.3,1236.9 1094.8,1237.7 1097.3,1237.7 1099.9,1237.4 1102.4,1237.0 1104.9,1234.6 1107.5,1232.3 1110.0,1232.6 1112.5,1234.6 1115.1,1236.2 1117.6,1236.4 1120.1,1235.0 1122.7,1234.8 1125.2,1233.6 1127.7,1234.5 1130.3,1235.2 1132.8,1236.5 1135.3,1237.2 1137.9,1236.7 1140.4,1235.8 1142.9,1236.2 1145.4,1236.1 1148.0,1236.7 1150.5,1235.0 1153.0,1233.6 1155.6,1233.1 1158.1,1234.7 1160.6,1235.7 1163.2,1235.3 1165.7,1234.3 1168.2,1234.4 1170.8,1233.7 1173.3,1234.2 1175.8,1234.7 1178.4,1235.0 1180.9,1235.4 1183.4,1234.6 1185.9,1236.1 1188.5,1235.5 1191.0,1235.2 1193.5,1233.6 1196.1,1233.2 1198.6,1233.4 1201.1,1235.0 1203.7,1234.5 1206.2,1235.0 1208.7,1232.9 1211.3,1232.3 1213.8,1232.4 1216.3,1234.2 1218.9,1236.1 1221.4,1234.9 1223.9,1235.3 1226.5,1235.0 1229.0,1236.1 1231.5,1236.2 1234.0,1234.4 1236.6,1234.1 1239.1,1231.9 1241.6,1233.2 1244.2,1233.3 1246.7,1235.6 1249.2,1234.6 1251.8,1234.0 1254.3,1232.7 1256.8,1233.2 1259.4,1234.9 1261.9,1235.5 1264.4,1236.2 1267.0,1234.7 1269.5,1232.9 1272.0,1233.5 1274.6,1233.0 1277.1,1233.8 1279.6,1233.9 1282.1,1234.3 1284.7,1235.3 1287.2,1235.6 1289.7,1236.6 1292.3,1237.1 1294.8,1234.8 1297.3,1235.4 1299.9,1235.0 1302.4,1237.2 1304.9,1236.4 1307.5,1235.7 1310.0,1235.3 1312.5,1234.7 1315.1,1233.6 1317.6,1233.8 1320.1,1235.0 1322.7,1236.9 1325.2,1236.2 1327.7,1235.8 1330.2,1235.4 1332.8,1235.0 1335.3,1233.7 1337.8,1233.1 1340.4,1234.3 1342.9,1235.4 1345.4,1235.5 1348.0,1234.5 1350.5,1235.1 1353.0,1235.5 1355.6,1236.0 1358.1,1235.1 1360.6,1233.5 1363.2,1233.2 1365.7,1233.8 1368.2,1236.3 1370.7,1237.1 1373.3,1237.4 1375.8,1236.1 1378.3,1234.7 1380.9,1234.4 1383.4,1233.6 1385.9,1232.7 1388.5,1232.8 1391.0,1232.7 1393.5,1234.0 1396.1,1234.3 1398.6,1236.2 1401.1,1236.3 1403.7,1235.1 1406.2,1234.4 1408.7,1234.0 1411.3,1233.8 1413.8,1234.8 1416.3,1235.5 1418.8,1235.8 1421.4,1233.7 1423.9,1234.4 1426.4,1234.3 1429.0,1235.6 1431.5,1233.4 1434.0,1233.7 1436.6,1232.0 1439.1,1232.4 1441.6,1232.4 1444.2,1234.2 1446.7,1235.6 1449.2,1236.3 1451.8,1236.9 1454.3,1234.9 1456.8,1233.4 1459.4,1231.9 1461.9,1234.2 1464.4,1233.9 1466.9,1234.3 1469.5,1233.0 1472.0,1234.9 1474.5,1233.9 1477.1,1235.5 1479.6,1234.9 1482.1,1236.2 1484.7,1233.8 1487.2,1233.4 1489.7,1233.1 1492.3,1234.4 1494.8,1234.2 1497.3,1235.6 1499.9,1234.4 1502.4,1233.8 1504.9,1232.6 1507.5,1233.7 1510.0,1234.7 1512.5,1234.4 1515.0,1233.5 1517.6,1232.8 1520.1,1233.4 1522.6,1235.0 1525.2,1234.6 1527.7,1235.1 1530.2,1233.6 1532.8,1234.7 1535.3,1234.5 1537.8,1235.8 1540.4,1236.9 1542.9,1236.0 1545.4,1235.2 1548.0,1235.3 1550.5,1235.4 1553.0,1236.6 1555.5,1234.2 1558.1,1233.4 1560.6,1233.1 1563.1,1233.9 1565.7,1235.1 1568.2,1235.3 1570.7,1235.4 1573.3,1234.0 1575.8,1232.4 1578.3,1231.6 1580.9,1232.5 1583.4,1232.3 1585.9,1234.5 1588.5,1236.0 1591.0,1237.7 1593.5,1236.0 1596.1,1233.8 1598.6,1233.7 1601.1,1234.5 1603.6,1234.6 1606.2,1233.2 1608.7,1233.4 1611.2,1233.1 1613.8,1232.9 1616.3,1233.8 1618.8,1234.8 1621.4,1235.5 1623.9,1234.0 1626.4,1234.1 1629.0,1233.4 1631.5,1232.9 1634.0,1234.1 1636.6,1233.8 1639.1,1234.6 1641.6,1232.8 1644.2,1234.6 1646.7,1234.9 1649.2,1235.9 1651.7,1233.8 1654.3,1232.2 1656.8,1231.5 1659.3,1233.3 1661.9,1234.7 1664.4,1236.1 1666.9,1234.7 1669.5,1234.2 1672.0,1232.7 1674.5,1233.8 1677.1,1235.4 1679.6,1236.5 1682.1,1236.8 1684.7,1235.9 1687.2,1236.0 1689.7,1235.8 1692.3,1234.5 1694.8,1235.2 1697.3,1235.3 1699.8,1236.1 1702.4,1235.4 1704.9,1234.5 1707.4,1234.0 1710.0,1233.9 1712.5,1233.8 1715.0,1235.0 1717.6,1234.8 1720.1,1234.4 1722.6,1235.0 1725.2,1234.7 1727.7,1235.5 1730.2,1233.7 1732.8,1234.6 1735.3,1234.2 1737.8,1234.8 1740.3,1233.0 1742.9,1232.4 1745.4,1231.7 1747.9,1232.6 1750.5,1234.2 1753.0,1234.2 1755.5,1234.5 1758.1,1234.4 1760.6,1235.7 1763.1,1234.4 1765.7,1234.9 1768.2,1233.5 1770.7,1234.1 1773.3,1232.4 1775.8,1233.0 1778.3,1232.5 1780.9,1234.5 1783.4,1234.8 1785.9,1235.2 1788.4,1234.5 1791.0,1233.4 1793.5,1235.0 1796.0,1234.7 1798.6,1236.7 1801.1,1235.3 1803.6,1234.3 1806.2,1234.3 1808.7,1233.6 1811.2,1234.6 1813.8,1232.7 1816.3,1233.5 1818.8,1232.8 1821.4,1234.3 1823.9,1234.7 1826.4,1235.6 1829.0,1234.0 1831.5,1234.4 1834.0,1233.4 1836.5,1234.0 1839.1,1232.2 1841.6,1231.9 1844.1,1232.3 1846.7,1234.7 1849.2,1234.4 1851.7,1233.6 1854.3,1231.9 1856.8,1233.6 1859.3,1235.8 1861.9,1225.5 1864.4,1231.2 1866.9,1233.9 1869.5,1235.2 1872.0,1236.9 1874.5,1235.1 1877.1,1233.2 1879.6,1231.4 1882.1,1232.0 1884.6,1232.7 1887.2,1233.7 1889.7,1234.1 1892.2,1234.4 1894.8,1233.6 1897.3,1234.6 1899.8,1233.7 1902.4,1234.8 1904.9,1233.0 1907.4,1232.8 1910.0,1233.6 1912.5,1235.5 1915.0,1235.7 1917.6,1236.2 1920.1,1234.8 1922.6,1236.6 1925.1,1235.6 1927.7,1235.3 1930.2,1233.4 1932.7,1232.5 1935.3,1233.2 1937.8,1233.2 1940.3,1233.5 1942.9,1232.4 1945.4,1233.1 1947.9,1234.7 1950.5,1234.6 1953.0,1234.9 1955.5,1233.5 1958.1,1233.8 1960.6,1232.6 1963.1,1232.8 1965.7,1233.4 1968.2,1234.5 1970.7,1234.7 1973.2,1235.8 1975.8,1235.0 1978.3,1235.5 1980.8,1235.5 1983.4,1237.7 1985.9,1236.2 1988.4,1235.2 1991.0,1233.4 1993.5,1233.5" stroke="#f7ba9e"/><polyline points="1069.5,1233.7 1072.0,1226.8 1074.6,1232.2 1077.1,1234.8 1079.6,1234.9 1082.2,1235.1 1084.7,1233.6 1087.2,1232.3 1089.8,1232.9 1092.3,1233.1 1094.8,1235.3 1097.3,1234.9 1099.9,1235.6 1102.4,1234.9 1104.9,1234.8 1107.5,1235.2 1110.0,1235.7 1112.5,1235.4 1115.1,1235.1 1117.6,1233.4 1120.1,1232.6 1122.7,1231.4 1125.2,1233.0 1127.7,1234.4 1130.3,1235.9 1132.8,1235.7 1135.3,1236.0 1137.9,1236.1 1140.4,1236.8 1142.9,1234.8 1145.4,1233.6 1148.0,1233.2 1150.5,1233.6 1153.0,1234.3 1155.6,1233.5 1158.1,1233.9 1160.6,1233.0 1163.2,1234.1 1165.7,1233.8 1168.2,1234.9 1170.8,1235.1 1173.3,1236.0 1175.8,1235.1 1178.4,1234.3 1180.9,1233.7 1183.4,1235.3 1185.9,1234.3 1188.5,1234.4 1191.0,1234.6 1193.5,1236.0 1196.1,1237.4 1198.6,1235.3 1201.1,1234.3 1203.7,1232.7 1206.2,1234.6 1208.7,1235.7 1211.3,1235.2 1213.8,1235.4 1216.3,1235.4 1218.9,1236.1 1221.4,1234.9 1223.9,1233.9 1226.5,1233.9 1229.0,1233.1 1231.5,1233.5 1234.0,1233.7 1236.6,1235.4 1239.1,1234.1 1241.6,1220.4 1244.2,1229.6 1246.7,1235.1 1249.2,1237.0 1251.8,1235.9 1254.3,1236.3 1256.8,1235.0 1259.4,1235.4 1261.9,1235.5 1264.4,1236.9 1267.0,1237.4 1269.5,1236.1 1272.0,1235.9 1274.6,1235.4 1277.1,1236.0 1279.6,1235.0 1282.1,1233.5 1284.7,1232.1 1287.2,1231.8 1289.7,1231.8 1292.3,1233.8 1294.8,1233.8 1297.3,1234.2 1299.9,1234.4 1302.4,1233.6 1304.9,1234.0 1307.5,1231.6 1310.0,1233.4 1312.5,1234.7 1315.1,1235.4 1317.6,1235.6 1320.1,1234.5 1322.7,1235.5 1325.2,1235.5 1327.7,1236.4 1330.2,1235.0 1332.8,1235.0 1335.3,1235.3 1337.8,1236.5 1340.4,1236.3 1342.9,1235.2 1345.4,1234.4 1348.0,1232.6 1350.5,1232.2 1353.0,1233.3 1355.6,1235.0 1358.1,1235.6 1360.6,1235.6 1363.2,1234.9 1365.7,1234.9 1368.2,1233.4 1370.7,1232.8 1373.3,1232.4 1375.8,1232.2 1378.3,1231.9 1380.9,1232.7 1383.4,1233.0 1385.9,1233.0 1388.5,1231.7 1391.0,1231.6 1393.5,1233.7 1396.1,1233.3 1398.6,1234.0 1401.1,1233.6 1403.7,1234.1 1406.2,1233.5 1408.7,1232.5 1411.3,1232.0 1413.8,1232.5 1416.3,1232.5 1418.8,1232.8 1421.4,1232.1 1423.9,1231.5 1426.4,1223.3 1429.0,1230.2 1431.5,1234.4 1434.0,1235.3 1436.6,1236.7 1439.1,1236.4 1441.6,1234.9 1444.2,1233.5 1446.7,1232.4 1449.2,1233.7 1451.8,1234.6 1454.3,1234.4 1456.8,1234.8 1459.4,1233.3 1461.9,1233.5 1464.4,1232.9 1466.9,1233.1 1469.5,1232.8 1472.0,1232.2 1474.5,1232.3 1477.1,1234.4 1479.6,1233.4 1482.1,1235.3 1484.7,1234.0 1487.2,1234.5 1489.7,1232.8 1492.3,1233.8 1494.8,1234.1 1497.3,1235.5 1499.9,1235.4 1502.4,1235.0 1504.9,1233.5 1507.5,1233.6 1510.0,1233.5 1512.5,1234.1 1515.0,1233.4 1517.6,1234.5 1520.1,1234.4 1522.6,1234.1 1525.2,1234.7 1527.7,1234.0 1530.2,1233.3 1532.8,1232.0 1535.3,1232.8 1537.8,1232.9 1540.4,1233.0 1542.9,1232.7 1545.4,1233.9 1548.0,1221.1 1550.5,1230.2 1553.0,1233.0 1555.5,1231.5 1558.1,1232.1 1560.6,1234.2 1563.1,1234.1 1565.7,1233.9 1568.2,1233.3 1570.7,1234.4 1573.3,1236.3 1575.8,1235.9 1578.3,1234.4 1580.9,1232.4 1583.4,1232.5 1585.9,1232.5 1588.5,1233.1 1591.0,1233.9 1593.5,1235.2 1596.1,1234.6 1598.6,1233.5 1601.1,1234.0 1603.6,1235.6 1606.2,1235.4 1608.7,1234.5 1611.2,1234.5 1613.8,1235.7 1616.3,1229.7 1618.8,1233.0 1621.4,1233.6 1623.9,1231.9 1626.4,1232.2 1629.0,1234.1 1631.5,1235.9 1634.0,1236.0 1636.6,1234.5 1639.1,1232.6 1641.6,1232.5 1644.2,1233.0 1646.7,1233.5 1649.2,1233.1 1651.7,1234.0 1654.3,1234.0 1656.8,1235.1 1659.3,1233.9 1661.9,1233.9 1664.4,1234.2 1666.9,1235.1 1669.5,1234.9 1672.0,1233.5 1674.5,1232.6 1677.1,1232.3 1679.6,1232.6 1682.1,1232.4 1684.7,1232.4 1687.2,1233.6 1689.7,1227.0 1692.3,1233.0 1694.8,1234.8 1697.3,1235.4 1699.8,1236.3 1702.4,1236.0 1704.9,1235.8 1707.4,1234.7 1710.0,1235.4 1712.5,1234.9 1715.0,1235.3 1717.6,1233.8 1720.1,1234.8 1722.6,1235.4 1725.2,1237.7 1727.7,1237.4 1730.2,1236.2 1732.8,1235.2 1735.3,1233.2 1737.8,1234.3 1740.3,1234.4 1742.9,1234.4 1745.4,1233.6 1747.9,1233.6 1750.5,1234.5 1753.0,1233.3 1755.5,1232.2 1758.1,1232.5 1760.6,1232.8 1763.1,1232.5 1765.7,1232.7 1768.2,1233.9 1770.7,1234.1 1773.3,1234.0 1775.8,1234.6 1778.3,1236.1 1780.9,1235.3 1783.4,1235.0 1785.9,1234.3 1788.4,1235.9 1791.0,1235.3 1793.5,1235.1 1796.0,1235.2 1798.6,1225.6 1801.1,1233.1 1803.6,1235.0 1806.2,1234.7 1808.7,1235.3 1811.2,1235.2 1813.8,1235.6 1816.3,1233.1 1818.8,1232.9 1821.4,1232.1 1823.9,1232.3 1826.4,1231.5 1829.0,1232.4 1831.5,1234.2 1834.0,1235.7 1836.5,1236.8 1839.1,1237.0 1841.6,1236.6 1844.1,1235.0 1846.7,1233.4 1849.2,1232.6 1851.7,1233.9 1854.3,1235.3 1856.8,1237.2 1859.3,1236.4 1861.9,1236.0 1864.4,1234.2 1866.9,1233.6 1869.5,1233.5 1872.0,1234.7 1874.5,1235.4 1877.1,1234.0 1879.6,1232.4 1882.1,1231.8 1884.6,1232.2 1887.2,1232.8 1889.7,1234.6 1892.2,1234.6 1894.8,1236.3 1897.3,1236.3 1899.8,1237.5 1902.4,1236.7 1904.9,1234.8 1907.4,1233.7 1910.0,1233.9 1912.5,1233.3 1915.0,1235.0 1917.6,1234.3 1920.1,1234.6 1922.6,1234.4 1925.1,1234.1 1927.7,1235.5 1930.2,1234.4 1932.7,1236.0 1935.3,1234.8 1937.8,1234.7 1940.3,1233.7 1942.9,1235.2 1945.4,1236.3 1947.9,1236.4 1950.5,1235.9 1953.0,1235.3 1955.5,1235.7 1958.1,1235.5 1960.6,1235.6 1963.1,1234.5 1965.7,1234.7 1968.2,1235.4 1970.7,1236.7 1973.2,1237.7 1975.8,1236.7 1978.3,1235.9 1980.8,1235.1 1983.4,1234.8 1985.9,1234.1 1988.4,1233.7 1991.0,1233.6 1993.5,1234.0" stroke="#ba8b3b"/><polyline points="1069.5,1234.9 1072.0,1235.8 1074.6,1237.6 1077.1,1235.5 1079.6,1176.3 1082.2,1114.9 1084.7,1176.3 1087.2,1236.8 1089.8,1234.7 1092.3,1231.2 1094.8,1227.9 1097.3,1230.3 1099.9,1230.3 1102.4,1230.9 1104.9,1228.7 1107.5,1232.0 1110.0,1233.0 1112.5,1235.1 1115.1,1232.5 1117.6,1233.2 1120.1,1231.4 1122.7,1232.3 1125.2,1230.5 1127.7,1228.3 1130.3,1227.6 1132.8,1226.9 1135.3,1227.8 1137.9,1227.8 1140.4,1229.7 1142.9,1232.4 1145.4,1232.4 1148.0,1231.1 1150.5,1231.5 1153.0,1232.2 1155.6,1232.1 1158.1,1228.2 1160.6,1228.2 1163.2,1230.0 1165.7,1231.6 1168.2,1232.9 1170.8,1234.4 1173.3,1235.0 1175.8,1234.2 1178.4,1232.4 1180.9,1230.9 1183.4,1232.0 1185.9,1233.3 1188.5,1234.6 1191.0,1233.8 1193.5,1234.5 1196.1,1232.2 1198.6,1231.4 1201.1,1227.5 1203.7,1227.7 1206.2,1228.1 1208.7,1230.9 1211.3,1234.8 1213.8,1236.1 1216.3,1236.3 1218.9,1234.8 1221.4,1233.5 1223.9,1230.6 1226.5,1228.8 1229.0,1228.4 1231.5,1230.2 1234.0,1229.9 1236.6,1228.4 1239.1,1227.5 1241.6,1228.7 1244.2,1232.0 1246.7,1234.1 1249.2,1232.9 1251.8,1213.9 1254.3,1225.2 1256.8,1230.9 1259.4,1233.4 1261.9,1234.7 1264.4,1235.7 1267.0,1232.3 1269.5,1230.2 1272.0,1228.2 1274.6,1231.4 1277.1,1232.9 1279.6,1236.1 1282.1,1235.0 1284.7,1231.4 1287.2,1230.3 1289.7,1231.3 1292.3,1232.3 1294.8,1230.6 1297.3,1227.1 1299.9,1229.7 1302.4,1230.5 1304.9,1230.9 1307.5,1228.9 1310.0,1232.1 1312.5,1235.8 1315.1,1234.2 1317.6,1234.2 1320.1,1232.1 1322.7,1234.0 1325.2,1233.2 1327.7,1234.1 1330.2,1236.4 1332.8,1235.1 1335.3,1232.8 1337.8,1231.8 1340.4,1232.8 1342.9,1236.5 1345.4,1235.8 1348.0,1233.6 1350.5,1232.2 1353.0,1230.1 1355.6,1233.5 1358.1,1232.0 1360.6,1235.6 1363.2,1235.1 1365.7,1234.7 1368.2,1231.0 1370.7,1228.3 1373.3,1229.4 1375.8,1228.9 1378.3,1231.3 1380.9,1231.7 1383.4,1234.0 1385.9,1230.5 1388.5,1230.0 1391.0,1230.1 1393.5,1231.2 1396.1,1233.3 1398.6,1232.6 1401.1,1231.6 1403.7,1227.7 1406.2,1228.4 1408.7,1230.5 1411.3,1232.7 1413.8,1232.6 1416.3,1233.6 1418.8,1234.4 1421.4,1236.4 1423.9,1236.8 1426.4,1235.2 1429.0,1233.5 1431.5,1234.0 1434.0,1235.7 1436.6,1234.6 1439.1,1234.8 1441.6,1234.4 1444.2,1235.2 1446.7,1233.7 1449.2,1233.3 1451.8,1235.4 1454.3,1233.6 1456.8,1234.0 1459.4,1233.7 1461.9,1234.1 1464.4,1231.9 1466.9,1232.2 1469.5,1232.2 1472.0,1234.6 1474.5,1232.2 1477.1,1231.5 1479.6,1229.8 1482.1,1229.1 1484.7,1232.2 1487.2,1231.1 1489.7,1222.7 1492.3,1228.4 1494.8,1233.8 1497.3,1233.7 1499.9,1234.0 1502.4,1235.1 1504.9,1235.5 1507.5,1232.2 1510.0,1231.8 1512.5,1231.7 1515.0,1233.7 1517.6,1230.5 1520.1,1229.0 1522.6,1230.1 1525.2,1233.3 1527.7,1236.7 1530.2,1237.7 1532.8,1237.6 1535.3,1234.5 1537.8,1232.0 1540.4,1231.5 1542.9,1230.9 1545.4,1231.2 1548.0,1231.1 1550.5,1230.9 1553.0,1229.4 1555.5,1227.4 1558.1,1219.3 1560.6,1229.8 1563.1,1236.1 1565.7,1233.9 1568.2,1232.6 1570.7,1231.2 1573.3,1234.3 1575.8,1235.2 1578.3,1235.2 1580.9,1233.7 1583.4,1231.8 1585.9,1231.8 1588.5,1231.5 1591.0,1234.3 1593.5,1235.8 1596.1,1236.5 1598.6,1234.2 1601.1,1230.4 1603.6,1228.8 1606.2,1228.8 1608.7,1229.5 1611.2,1230.5 1613.8,1230.1 1616.3,1230.4 1618.8,1231.4 1621.4,1232.2 1623.9,1231.9 1626.4,1231.0 1629.0,1232.7 1631.5,1232.1 1634.0,1230.8 1636.6,1229.3 1639.1,1228.7 1641.6,1229.4 1644.2,1229.3 1646.7,1230.6 1649.2,1229.2 1651.7,1228.3 1654.3,1229.9 1656.8,1217.8 1659.3,1227.3 1661.9,1229.9 1664.4,1231.7 1666.9,1232.7 1669.5,1233.8 1672.0,1231.0 1674.5,1232.3 1677.1,1233.6 1679.6,1233.2 1682.1,1233.0 1684.7,1231.3 1687.2,1231.9 1689.7,1231.9 1692.3,1230.0 1694.8,1230.8 1697.3,1229.3 1699.8,1229.6 1702.4,1229.7 1704.9,1229.1 1707.4,1231.7 1710.0,1232.0 1712.5,1233.8 1715.0,1231.8 1717.6,1231.1 1720.1,1230.5 1722.6,1232.0 1725.2,1231.9 1727.7,1231.9 1730.2,1232.1 1732.8,1233.7 1735.3,1232.1 1737.8,1229.5 1740.3,1230.7 1742.9,1231.5 1745.4,1219.5 1747.9,1229.3 1750.5,1235.3 1753.0,1232.7 1755.5,1230.3 1758.1,1226.9 1760.6,1230.7 1763.1,1233.9 1765.7,1236.0 1768.2,1232.1 1770.7,1231.9 1773.3,1233.2 1775.8,1219.1 1778.3,1229.4 1780.9,1233.4 1783.4,1235.4 1785.9,1236.1 1788.4,1235.8 1791.0,1234.5 1793.5,1233.4 1796.0,1233.0 1798.6,1233.2 1801.1,1230.1 1803.6,1230.6 1806.2,1229.2 1808.7,1229.6 1811.2,1231.2 1813.8,1230.7 1816.3,1232.1 1818.8,1231.0 1821.4,1233.0 1823.9,1233.0 1826.4,1232.7 1829.0,1231.6 1831.5,1233.6 1834.0,1233.5 1836.5,1233.8 1839.1,1232.5 1841.6,1232.6 1844.1,1232.4 1846.7,1232.0 1849.2,1230.9 1851.7,1231.9 1854.3,1233.6 1856.8,1219.8 1859.3,1231.3 1861.9,1236.2 1864.4,1223.0 1866.9,1230.7 1869.5,1232.3 1872.0,1231.9 1874.5,1233.8 1877.1,1223.0 1879.6,1232.4 1882.1,1237.1 1884.6,1235.8 1887.2,1234.5 1889.7,1232.2 1892.2,1233.5 1894.8,1233.5 1897.3,1232.0 1899.8,1231.9 1902.4,1234.4 1904.9,1237.6 1907.4,1235.7 1910.0,1235.4 1912.5,1233.1 1915.0,1234.0 1917.6,1231.2 1920.1,1232.2 1922.6,1229.4 1925.1,1231.5 1927.7,1229.5 1930.2,1230.9 1932.7,1230.8 1935.3,1230.7 1937.8,1233.3 1940.3,1231.7 1942.9,1235.4 1945.4,1232.3 1947.9,1234.8 1950.5,1234.4 1953.0,1237.2 1955.5,1234.0 1958.1,1232.6 1960.6,1230.7 1963.1,1232.0 1965.7,1230.7 1968.2,1231.7 1970.7,1232.9 1973.2,1232.2 1975.8,1231.9 1978.3,1231.9 1980.8,1233.8 1983.4,1232.0 1985.9,1232.5 1988.4,1233.6 1991.0,1234.0 1993.5,1231.6" stroke="#2f7e5c"/><polyline points="1069.5,1235.3 1072.0,1232.8 1074.6,1232.7 1077.1,1234.4 1079.6,1234.8 1082.2,1233.5 1084.7,1231.7 1087.2,1231.9 1089.8,1231.0 1092.3,1232.1 1094.8,1232.6 1097.3,1233.7 1099.9,1233.6 1102.4,1234.2 1104.9,1233.9 1107.5,1233.0 1110.0,1231.8 1112.5,1231.1 1115.1,1231.7 1117.6,1234.1 1120.1,1235.7 1122.7,1236.2 1125.2,1235.1 1127.7,1225.1 1130.3,1232.6 1132.8,1234.8 1135.3,1234.6 1137.9,1233.5 1140.4,1233.3 1142.9,1232.8 1145.4,1233.7 1148.0,1236.1 1150.5,1235.0 1153.0,1233.8 1155.6,1231.6 1158.1,1233.4 1160.6,1233.0 1163.2,1235.0 1165.7,1232.8 1168.2,1234.1 1170.8,1232.8 1173.3,1233.9 1175.8,1232.7 1178.4,1233.2 1180.9,1217.3 1183.4,1229.1 1185.9,1233.4 1188.5,1232.5 1191.0,1231.9 1193.5,1230.9 1196.1,1233.6 1198.6,1235.5 1201.1,1237.7 1203.7,1235.2 1206.2,1235.3 1208.7,1234.1 1211.3,1236.7 1213.8,1234.5 1216.3,1235.6 1218.9,1234.9 1221.4,1235.3 1223.9,1233.4 1226.5,1233.9 1229.0,1234.1 1231.5,1233.4 1234.0,1231.1 1236.6,1231.6 1239.1,1231.5 1241.6,1232.4 1244.2,1230.9 1246.7,1232.1 1249.2,1231.8 1251.8,1217.4 1254.3,1227.4 1256.8,1232.4 1259.4,1232.0 1261.9,1233.3 1264.4,1233.9 1267.0,1234.9 1269.5,1233.4 1272.0,1234.1 1274.6,1233.0 1277.1,1235.4 1279.6,1233.4 1282.1,1234.1 1284.7,1233.4 1287.2,1233.0 1289.7,1231.5 1292.3,1232.4 1294.8,1234.3 1297.3,1236.3 1299.9,1235.9 1302.4,1234.0 1304.9,1234.5 1307.5,1232.4 1310.0,1234.5 1312.5,1234.8 1315.1,1236.3 1317.6,1235.8 1320.1,1233.3 1322.7,1233.6 1325.2,1234.1 1327.7,1236.0 1330.2,1235.5 1332.8,1234.0 1335.3,1233.5 1337.8,1232.7 1340.4,1232.4 1342.9,1232.8 1345.4,1234.6 1348.0,1234.1 1350.5,1232.2 1353.0,1231.1 1355.6,1231.5 1358.1,1233.8 1360.6,1234.3 1363.2,1235.7 1365.7,1234.3 1368.2,1234.3 1370.7,1234.4 1373.3,1235.4 1375.8,1234.2 1378.3,1234.7 1380.9,1233.1 1383.4,1233.4 1385.9,1231.5 1388.5,1232.0 1391.0,1233.5 1393.5,1233.9 1396.1,1234.6 1398.6,1208.4 1401.1,1227.7 1403.7,1236.3 1406.2,1235.2 1408.7,1233.2 1411.3,1230.6 1413.8,1232.2 1416.3,1231.8 1418.8,1234.4 1421.4,1057.7 1423.9,1233.1 1426.4,1232.3 1429.0,1232.2 1431.5,1234.7 1434.0,1234.1 1436.6,1235.8 1439.1,1235.2 1441.6,1234.6 1444.2,1234.6 1446.7,1234.0 1449.2,1236.2 1451.8,1234.3 1454.3,1233.1 1456.8,1231.6 1459.4,1233.5 1461.9,1235.3 1464.4,1235.6 1466.9,1234.2 1469.5,1232.8 1472.0,1233.7 1474.5,1235.6 1477.1,1236.0 1479.6,1235.5 1482.1,1234.5 1484.7,1234.4 1487.2,1233.1 1489.7,1233.8 1492.3,1233.9 1494.8,1234.7 1497.3,1234.6 1499.9,1235.9 1502.4,1237.0 1504.9,1237.4 1507.5,1236.6 1510.0,1236.4 1512.5,1234.9 1515.0,1235.3 1517.6,1235.4 1520.1,1235.3 1522.6,1236.1 1525.2,1233.7 1527.7,1233.2 1530.2,1230.5 1532.8,1232.4 1535.3,1233.2 1537.8,1235.8 1540.4,1234.6 1542.9,1233.6 1545.4,1233.7 1548.0,1233.9 1550.5,1234.0 1553.0,1232.6 1555.5,1233.5 1558.1,1233.0 1560.6,1232.9 1563.1,1232.5 1565.7,1232.5 1568.2,1231.3 1570.7,1230.9 1573.3,1231.5 1575.8,1232.4 1578.3,1231.5 1580.9,1231.1 1583.4,1231.5 1585.9,1232.9 1588.5,1233.3 1591.0,1233.8 1593.5,1233.9 1596.1,1234.8 1598.6,1233.6 1601.1,1233.5 1603.6,1232.9 1606.2,1234.3 1608.7,1205.3 1611.2,1224.8 1613.8,1231.8 1616.3,1231.7 1618.8,1233.1 1621.4,1233.5 1623.9,1235.6 1626.4,1234.6 1629.0,1236.3 1631.5,1236.4 1634.0,1235.0 1636.6,1232.9 1639.1,1232.3 1641.6,1233.5 1644.2,1235.2 1646.7,1235.0 1649.2,1234.0 1651.7,1234.1 1654.3,1232.8 1656.8,1234.5 1659.3,1233.6 1661.9,1234.7 1664.4,1232.7 1666.9,1233.0 1669.5,1232.4 1672.0,1233.5 1674.5,1234.9 1677.1,1233.9 1679.6,1234.1 1682.1,1231.7 1684.7,1232.1 1687.2,1232.4 1689.7,1232.6 1692.3,1232.0 1694.8,1231.0 1697.3,1230.4 1699.8,1232.5 1702.4,1234.7 1704.9,1235.2 1707.4,1232.9 1710.0,1230.5 1712.5,1229.9 1715.0,1230.2 1717.6,1232.6 1720.1,1232.9 1722.6,1234.3 1725.2,1232.0 1727.7,1234.0 1730.2,1234.0 1732.8,1234.8 1735.3,1234.4 1737.8,1234.5 1740.3,1233.5 1742.9,1232.3 1745.4,1230.5 1747.9,1233.1 1750.5,1234.3 1753.0,1234.2 1755.5,1209.3 1758.1,1223.0 1760.6,1232.0 1763.1,1233.6 1765.7,1233.4 1768.2,1232.9 1770.7,1233.2 1773.3,1233.9 1775.8,1232.1 1778.3,1232.4 1780.9,1233.6 1783.4,1236.0 1785.9,1234.7 1788.4,1233.8 1791.0,465.5 1793.5,1232.1 1796.0,1232.7 1798.6,1231.4 1801.1,1232.0 1803.6,1233.2 1806.2,1235.0 1808.7,1236.7 1811.2,1235.6 1813.8,1147.7 1816.3,1106.7 1818.8,1235.6 1821.4,1233.4 1823.9,1232.7 1826.4,1232.0 1829.0,1233.2 1831.5,1233.5 1834.0,1234.6 1836.5,1233.3 1839.1,1233.8 1841.6,1232.4 1844.1,1234.8 1846.7,1234.2 1849.2,1236.6 1851.7,1234.0 1854.3,1233.4 1856.8,1232.5 1859.3,1233.1 1861.9,1231.6 1864.4,1232.4 1866.9,1233.2 1869.5,1234.1 1872.0,1233.3 1874.5,1231.9 1877.1,1231.8 1879.6,1231.3 1882.1,1233.8 1884.6,1234.9 1887.2,1236.8 1889.7,1236.8 1892.2,1236.5 1894.8,1233.9 1897.3,1231.2 1899.8,1216.2 1902.4,1228.3 1904.9,1232.5 1907.4,1232.4 1910.0,1231.8 1912.5,1211.9 1915.0,1228.4 1917.6,1234.8 1920.1,1235.5 1922.6,1236.5 1925.1,1234.9 1927.7,1234.0 1930.2,1232.1 1932.7,1231.5 1935.3,1231.1 1937.8,1231.9 1940.3,1233.9 1942.9,1235.6 1945.4,1237.0 1947.9,1235.0 1950.5,1234.3 1953.0,1234.3 1955.5,1237.1 1958.1,1235.6 1960.6,1233.6 1963.1,1231.2 1965.7,1232.1 1968.2,1231.6 1970.7,1231.2 1973.2,1230.9 1975.8,1233.6 1978.3,1233.7 1980.8,1207.6 1983.4,1224.4 1985.9,1234.2 1988.4,1233.2 1991.0,1233.0 1993.5,1232.2" stroke="#9b3446"/><polyline points="1069.5,1237.1 1072.0,1201.7 1074.6,1234.7 1077.1,1233.9 1079.6,1190.9 1082.2,1232.9 1084.7,1232.9 1087.2,1234.9 1089.8,1235.2 1092.3,1233.7 1094.8,1232.2 1097.3,1233.1 1099.9,1183.7 1102.4,1236.8 1104.9,1192.7 1107.5,1235.5 1110.0,1235.0 1112.5,1234.9 1115.1,1232.6 1117.6,1232.7 1120.1,1234.1 1122.7,1236.7 1125.2,1235.5 1127.7,1232.6 1130.3,1230.6 1132.8,1231.1 1135.3,1212.5 1137.9,1233.5 1140.4,1235.7 1142.9,1233.5 1145.4,1233.5 1148.0,1230.4 1150.5,1231.3 1153.0,1230.1 1155.6,1230.3 1158.1,1231.2 1160.6,1233.8 1163.2,1234.2 1165.7,1235.1 1168.2,1235.4 1170.8,1236.1 1173.3,1233.7 1175.8,1231.5 1178.4,1230.4 1180.9,1230.3 1183.4,1229.9 1185.9,1232.3 1188.5,1234.0 1191.0,1235.9 1193.5,1234.5 1196.1,1234.4 1198.6,1234.2 1201.1,1234.0 1203.7,1235.4 1206.2,1234.8 1208.7,1234.2 1211.3,1233.8 1213.8,1235.2 1216.3,1235.6 1218.9,1233.8 1221.4,1232.7 1223.9,1232.1 1226.5,1231.6 1229.0,1232.5 1231.5,1233.3 1234.0,1234.5 1236.6,1232.8 1239.1,1234.4 1241.6,1210.7 1244.2,1233.0 1246.7,1230.9 1249.2,1232.5 1251.8,1234.7 1254.3,1237.1 1256.8,1160.3 1259.4,1233.4 1261.9,1216.1 1264.4,1233.9 1267.0,1236.1 1269.5,1235.3 1272.0,1233.6 1274.6,1155.6 1277.1,1234.7 1279.6,1235.5 1282.1,1235.0 1284.7,1232.4 1287.2,1232.2 1289.7,1234.0 1292.3,1234.8 1294.8,1235.7 1297.3,1234.9 1299.9,1234.2 1302.4,1231.6 1304.9,1232.2 1307.5,1233.3 1310.0,1235.1 1312.5,1233.9 1315.1,1233.5 1317.6,1234.2 1320.1,1234.5 1322.7,1236.8 1325.2,1235.2 1327.7,1235.3 1330.2,1235.2 1332.8,1237.4 1335.3,1236.3 1337.8,1235.2 1340.4,1233.3 1342.9,1234.0 1345.4,1235.0 1348.0,1235.1 1350.5,1235.0 1353.0,1234.4 1355.6,1235.2 1358.1,1236.5 1360.6,1199.9 1363.2,1233.1 1365.7,1231.9 1368.2,1232.8 1370.7,1234.5 1373.3,1234.8 1375.8,1234.3 1378.3,1232.3 1380.9,1233.2 1383.4,1232.2 1385.9,1163.9 1388.5,1232.0 1391.0,1233.1 1393.5,1233.0 1396.1,1232.7 1398.6,1231.9 1401.1,1230.8 1403.7,1216.1 1406.2,1231.0 1408.7,1230.2 1411.3,1232.4 1413.8,1235.3 1416.3,1237.7 1418.8,1237.6 1421.4,1237.5 1423.9,1236.2 1426.4,1235.3 1429.0,1235.2 1431.5,1236.4 1434.0,1237.0 1436.6,1234.0 1439.1,1232.5 1441.6,1230.9 1444.2,1231.2 1446.7,1230.0 1449.2,1231.7 1451.8,1231.8 1454.3,1233.0 1456.8,1231.3 1459.4,1233.6 1461.9,1233.5 1464.4,1233.8 1466.9,1232.0 1469.5,1233.7 1472.0,1235.5 1474.5,1236.3 1477.1,1233.7 1479.6,1233.0 1482.1,1231.3 1484.7,1233.6 1487.2,1232.7 1489.7,1233.7 1492.3,1233.6 1494.8,1234.7 1497.3,1235.9 1499.9,1233.7 1502.4,1231.9 1504.9,1232.4 1507.5,1163.9 1510.0,1234.9 1512.5,1232.9 1515.0,1233.4 1517.6,1233.4 1520.1,1210.7 1522.6,1234.1 1525.2,1231.2 1527.7,1231.5 1530.2,1232.3 1532.8,1234.4 1535.3,1233.4 1537.8,1233.0 1540.4,1233.6 1542.9,1234.2 1545.4,1233.9 1548.0,1233.8 1550.5,1233.7 1553.0,1234.3 1555.5,1232.1 1558.1,1230.5 1560.6,1233.1 1563.1,1196.3 1565.7,1235.5 1568.2,1234.0 1570.7,1232.7 1573.3,1233.9 1575.8,1232.4 1578.3,1233.1 1580.9,1208.9 1583.4,1233.0 1585.9,1231.6 1588.5,1230.2 1591.0,1232.7 1593.5,1234.3 1596.1,1237.5 1598.6,1237.1 1601.1,1235.9 1603.6,1235.1 1606.2,1232.7 1608.7,1232.8 1611.2,1230.8 1613.8,1231.6 1616.3,1232.6 1618.8,1233.6 1621.4,1232.7 1623.9,1203.5 1626.4,1231.8 1629.0,1231.8 1631.5,1231.3 1634.0,1229.7 1636.6,1231.4 1639.1,1233.4 1641.6,1233.2 1644.2,1233.1 1646.7,1232.7 1649.2,1235.6 1651.7,1236.7 1654.3,1237.7 1656.8,1235.3 1659.3,1234.9 1661.9,1234.3 1664.4,1236.5 1666.9,1235.2 1669.5,1233.3 1672.0,1230.6 1674.5,1229.6 1677.1,1230.0 1679.6,1232.3 1682.1,1234.4 1684.7,1236.5 1687.2,1233.7 1689.7,1233.9 1692.3,1232.7 1694.8,1234.5 1697.3,1232.5 1699.8,1232.2 1702.4,1230.5 1704.9,1232.0 1707.4,1232.0 1710.0,1232.4 1712.5,1233.5 1715.0,1233.4 1717.6,1234.9 1720.1,1233.4 1722.6,1234.7 1725.2,1234.5 1727.7,1232.8 1730.2,1231.9 1732.8,1233.3 1735.3,1235.5 1737.8,1235.5 1740.3,1234.6 1742.9,1234.0 1745.4,1234.5 1747.9,1233.8 1750.5,1235.1 1753.0,1235.6 1755.5,1235.0 1758.1,1233.6 1760.6,1231.7 1763.1,1231.1 1765.7,1232.3 1768.2,1130.6 1770.7,1233.7 1773.3,1232.6 1775.8,1232.9 1778.3,1231.4 1780.9,1231.9 1783.4,1232.1 1785.9,1234.4 1788.4,1232.8 1791.0,1233.6 1793.5,1233.8 1796.0,1234.1 1798.6,1233.1 1801.1,1232.5 1803.6,1232.0 1806.2,1234.3 1808.7,1233.2 1811.2,1233.7 1813.8,1232.8 1816.3,1232.4 1818.8,1231.9 1821.4,1231.2 1823.9,1230.5 1826.4,1232.6 1829.0,1232.4 1831.5,1234.0 1834.0,1234.5 1836.5,1234.3 1839.1,1235.7 1841.6,1234.8 1844.1,1237.1 1846.7,1235.5 1849.2,1233.8 1851.7,1201.7 1854.3,1231.5 1856.8,1232.8 1859.3,1232.3 1861.9,1234.3 1864.4,1235.4 1866.9,1235.8 1869.5,1235.7 1872.0,1233.6 1874.5,1234.8 1877.1,1234.4 1879.6,1234.9 1882.1,1234.2 1884.6,1235.0 1887.2,1234.8 1889.7,1235.1 1892.2,1232.3 1894.8,1231.8 1897.3,1232.3 1899.8,1235.3 1902.4,1237.6 1904.9,1237.0 1907.4,1235.6 1910.0,1233.9 1912.5,1233.2 1915.0,1233.2 1917.6,1232.7 1920.1,1231.4 1922.6,1232.6 1925.1,1233.8 1927.7,1235.6 1930.2,1233.1 1932.7,1231.5 1935.3,1230.9 1937.8,1232.4 1940.3,1233.6 1942.9,1233.1 1945.4,1231.4 1947.9,1232.0 1950.5,1233.5 1953.0,1233.4 1955.5,1232.6 1958.1,1231.6 1960.6,1234.6 1963.1,1234.6 1965.7,1236.4 1968.2,1236.2 1970.7,1192.7 1973.2,1234.2 1975.8,1231.5 1978.3,1229.9 1980.8,1230.6 1983.4,1232.0 1985.9,1233.8 1988.4,1235.3 1991.0,1169.7 1993.5,1234.4" stroke="#2848a2"/><polyline points="1069.5,1183.5 1072.0,1179.7 1074.6,1174.9 1077.1,1184.6 1079.6,1186.0 1082.2,1176.6 1084.7,1190.3 1087.2,1192.4 1089.8,1193.4 1092.3,1186.3 1094.8,1188.5 1097.3,1187.7 1099.9,1197.8 1102.4,1199.4 1104.9,1215.0 1107.5,1213.9 1110.0,1207.8 1112.5,1222.4 1115.1,1221.5 1117.6,1221.6 1120.1,1223.1 1122.7,1226.6 1125.2,1220.1 1127.7,1215.1 1130.3,1209.8 1132.8,1201.3 1135.3,1192.1 1137.9,1193.5 1140.4,1191.8 1142.9,1203.3 1145.4,1198.1 1148.0,1193.8 1150.5,1189.5 1153.0,1186.5 1155.6,1199.8 1158.1,1191.2 1160.6,1193.4 1163.2,1190.3 1165.7,1194.4 1168.2,1199.2 1170.8,1196.4 1173.3,1184.8 1175.8,1196.7 1178.4,1184.1 1180.9,1183.4 1183.4,1190.6 1185.9,1195.5 1188.5,1182.8 1191.0,1191.1 1193.5,1192.7 1196.1,1193.7 1198.6,1188.9 1201.1,1181.7 1203.7,1182.1 1206.2,1195.6 1208.7,1187.8 1211.3,1195.8 1213.8,1184.5 1216.3,1188.4 1218.9,1171.4 1221.4,1160.8 1223.9,1175.9 1226.5,1191.4 1229.0,1192.6 1231.5,1188.8 1234.0,1195.5 1236.6,1198.7 1239.1,1204.0 1241.6,1198.7 1244.2,1207.0 1246.7,1200.8 1249.2,1205.1 1251.8,1193.8 1254.3,1193.3 1256.8,1184.2 1259.4,1191.8 1261.9,1192.0 1264.4,1180.4 1267.0,1192.3 1269.5,1189.3 1272.0,1182.9 1274.6,1184.1 1277.1,1186.9 1279.6,1196.7 1282.1,1187.2 1284.7,1197.5 1287.2,1189.7 1289.7,1189.8 1292.3,1199.8 1294.8,1196.1 1297.3,1192.8 1299.9,1187.7 1302.4,1196.7 1304.9,1199.7 1307.5,1191.1 1310.0,1192.2 1312.5,1204.9 1315.1,1193.9 1317.6,1196.2 1320.1,1198.7 1322.7,1199.9 1325.2,1201.6 1327.7,1202.9 1330.2,1204.6 1332.8,1208.7 1335.3,1209.1 1337.8,1207.5 1340.4,1210.1 1342.9,1205.8 1345.4,1210.6 1348.0,1207.6 1350.5,1209.6 1353.0,1211.9 1355.6,1208.3 1358.1,1203.9 1360.6,1208.6 1363.2,1206.1 1365.7,1205.6 1368.2,1201.7 1370.7,1194.3 1373.3,1183.7 1375.8,1169.3 1378.3,1159.8 1380.9,1139.1 1383.4,1136.9 1385.9,1138.4 1388.5,1159.1 1391.0,1143.4 1393.5,1153.2 1396.1,1166.3 1398.6,1144.1 1401.1,1129.7 1403.7,1143.9 1406.2,1159.5 1408.7,1197.0 1411.3,1210.4 1413.8,1212.4 1416.3,1217.8 1418.8,1227.0 1421.4,1222.3 1423.9,1223.6 1426.4,1221.2 1429.0,1221.0 1431.5,1227.0 1434.0,1217.9 1436.6,1219.0 1439.1,1205.7 1441.6,1195.5 1444.2,1197.1 1446.7,1197.5 1449.2,1196.0 1451.8,1181.6 1454.3,1191.9 1456.8,1195.5 1459.4,1199.6 1461.9,1195.8 1464.4,1184.4 1466.9,1176.8 1469.5,1134.6 1472.0,1143.3 1474.5,1159.8 1477.1,1169.8 1479.6,1199.1 1482.1,1215.7 1484.7,1226.4 1487.2,1226.9 1489.7,1226.2 1492.3,1228.2 1494.8,1228.9 1497.3,1227.1 1499.9,1223.6 1502.4,1224.5 1504.9,1214.1 1507.5,1215.3 1510.0,1208.1 1512.5,1213.7 1515.0,1219.4 1517.6,1206.9 1520.1,1201.3 1522.6,1200.0 1525.2,1208.8 1527.7,1204.3 1530.2,1214.1 1532.8,1219.8 1535.3,1220.1 1537.8,1217.8 1540.4,1222.6 1542.9,1217.8 1545.4,1214.5 1548.0,1202.1 1550.5,1198.8 1553.0,1175.1 1555.5,1174.7 1558.1,1163.6 1560.6,1134.8 1563.1,1130.6 1565.7,1153.6 1568.2,1161.2 1570.7,1109.9 1573.3,1113.6 1575.8,1144.0 1578.3,1122.2 1580.9,1115.6 1583.4,1093.7 1585.9,1154.3 1588.5,1123.0 1591.0,1124.7 1593.5,1117.2 1596.1,1095.5 1598.6,1084.8 1601.1,1014.7 1603.6,1116.3 1606.2,1189.1 1608.7,1203.3 1611.2,1208.1 1613.8,1213.2 1616.3,1219.3 1618.8,1221.8 1621.4,1219.2 1623.9,1216.1 1626.4,1214.7 1629.0,1202.3 1631.5,1179.4 1634.0,1174.4 1636.6,1174.0 1639.1,1168.0 1641.6,1185.7 1644.2,1179.1 1646.7,1167.8 1649.2,1168.7 1651.7,1172.8 1654.3,1170.1 1656.8,1188.4 1659.3,1220.6 1661.9,1226.8 1664.4,1226.0 1666.9,1232.3 1669.5,1228.8 1672.0,1228.3 1674.5,1227.6 1677.1,1234.1 1679.6,1227.7 1682.1,1235.1 1684.7,1231.6 1687.2,1230.5 1689.7,1232.7 1692.3,1234.0 1694.8,1230.9 1697.3,1235.0 1699.8,1233.9 1702.4,1229.0 1704.9,1232.3 1707.4,1231.2 1710.0,1227.9 1712.5,1228.2 1715.0,1216.2 1717.6,1198.0 1720.1,1184.2 1722.6,1168.1 1725.2,1161.6 1727.7,1169.7 1730.2,1185.7 1732.8,1179.4 1735.3,1202.6 1737.8,1208.9 1740.3,1198.6 1742.9,1194.5 1745.4,1175.4 1747.9,1183.2 1750.5,1185.7 1753.0,1184.3 1755.5,1182.7 1758.1,1202.0 1760.6,1211.9 1763.1,1211.9 1765.7,1207.0 1768.2,1194.0 1770.7,1187.7 1773.3,1184.9 1775.8,1191.3 1778.3,1177.3 1780.9,1158.8 1783.4,1160.2 1785.9,1139.1 1788.4,1156.2 1791.0,1157.8 1793.5,1158.0 1796.0,1156.6 1798.6,1131.2 1801.1,1119.4 1803.6,1124.5 1806.2,1124.8 1808.7,1127.0 1811.2,1159.4 1813.8,1171.4 1816.3,1181.4 1818.8,1200.5 1821.4,1208.0 1823.9,1209.8 1826.4,1200.4 1829.0,1196.9 1831.5,1195.2 1834.0,1202.3 1836.5,1203.5 1839.1,1198.7 1841.6,1198.7 1844.1,1210.8 1846.7,1214.0 1849.2,1215.0 1851.7,1216.9 1854.3,1221.5 1856.8,1220.2 1859.3,1219.7 1861.9,1224.0 1864.4,1225.3 1866.9,1221.0 1869.5,1220.5 1872.0,1218.0 1874.5,1222.7 1877.1,1221.5 1879.6,1217.5 1882.1,1222.8 1884.6,1221.0 1887.2,1220.3 1889.7,1224.0 1892.2,1223.6 1894.8,1225.2 1897.3,1223.2 1899.8,1223.8 1902.4,1213.5 1904.9,1212.4 1907.4,1223.0 1910.0,1215.4 1912.5,1220.7 1915.0,1221.0 1917.6,1219.4 1920.1,1220.5 1922.6,1214.4 1925.1,1215.4 1927.7,1217.0 1930.2,1223.3 1932.7,1229.1 1935.3,1223.8 1937.8,1224.9 1940.3,1222.5 1942.9,1219.5 1945.4,1221.6 1947.9,1213.4 1950.5,1211.2 1953.0,1198.9 1955.5,1193.3 1958.1,1177.2 1960.6,1197.1 1963.1,1199.9 1965.7,1204.9 1968.2,1213.4 1970.7,1211.9 1973.2,1216.8 1975.8,1212.9 1978.3,1219.4 1980.8,1206.3 1983.4,1204.8 1985.9,1207.2 1988.4,1191.0 1991.0,1175.1 1993.5,1170.4" stroke="#2b2f8b"/><polyline points="1069.5,1229.4 1072.0,1230.8 1074.6,1231.2 1077.1,1233.0 1079.6,1225.8 1082.2,1219.9 1084.7,1218.4 1087.2,1223.3 1089.8,1224.8 1092.3,1224.1 1094.8,1219.7 1097.3,1217.9 1099.9,1219.2 1102.4,1220.1 1104.9,1198.8 1107.5,1195.1 1110.0,1219.5 1112.5,1224.6 1115.1,1223.4 1117.6,1227.6 1120.1,1218.4 1122.7,1225.1 1125.2,1223.8 1127.7,1223.5 1130.3,1223.0 1132.8,1222.7 1135.3,1224.6 1137.9,1226.4 1140.4,1225.5 1142.9,1227.2 1145.4,1225.4 1148.0,1228.7 1150.5,1222.4 1153.0,1229.3 1155.6,1230.2 1158.1,1234.3 1160.6,1232.7 1163.2,1230.2 1165.7,1226.5 1168.2,1205.9 1170.8,1216.1 1173.3,1226.5 1175.8,1229.2 1178.4,1233.0 1180.9,1227.9 1183.4,1224.5 1185.9,1220.1 1188.5,1219.5 1191.0,1198.3 1193.5,1216.1 1196.1,1223.3 1198.6,1223.4 1201.1,1223.9 1203.7,1223.6 1206.2,1221.2 1208.7,1225.2 1211.3,1231.4 1213.8,1232.3 1216.3,1227.4 1218.9,1226.2 1221.4,1225.1 1223.9,1225.5 1226.5,1225.7 1229.0,1231.0 1231.5,1231.7 1234.0,1228.3 1236.6,1228.2 1239.1,1226.3 1241.6,1229.4 1244.2,1224.3 1246.7,1224.0 1249.2,1224.8 1251.8,1225.8 1254.3,1228.7 1256.8,1222.7 1259.4,1224.7 1261.9,1225.7 1264.4,1230.9 1267.0,1227.8 1269.5,1228.5 1272.0,1223.4 1274.6,1229.5 1277.1,1225.2 1279.6,1232.0 1282.1,1226.8 1284.7,1226.3 1287.2,1224.0 1289.7,1225.0 1292.3,1205.2 1294.8,1223.8 1297.3,1229.1 1299.9,1228.5 1302.4,1223.0 1304.9,1229.0 1307.5,1231.5 1310.0,1235.9 1312.5,1230.0 1315.1,1231.0 1317.6,1220.8 1320.1,1232.3 1322.7,1233.2 1325.2,1226.9 1327.7,1223.3 1330.2,1224.4 1332.8,1225.2 1335.3,1229.0 1337.8,1225.0 1340.4,1225.6 1342.9,1227.8 1345.4,1230.0 1348.0,1231.8 1350.5,1228.9 1353.0,1228.2 1355.6,1226.2 1358.1,1226.7 1360.6,1226.9 1363.2,1225.9 1365.7,1223.8 1368.2,1226.2 1370.7,1231.5 1373.3,1234.5 1375.8,1228.8 1378.3,1226.9 1380.9,1222.4 1383.4,1222.2 1385.9,1219.9 1388.5,1223.7 1391.0,1200.4 1393.5,1219.4 1396.1,1222.5 1398.6,1224.3 1401.1,1223.3 1403.7,1225.3 1406.2,1224.4 1408.7,1227.8 1411.3,1228.7 1413.8,1230.2 1416.3,1226.4 1418.8,1224.9 1421.4,1226.6 1423.9,1228.9 1426.4,1232.8 1429.0,1205.9 1431.5,1219.8 1434.0,1224.7 1436.6,1224.7 1439.1,1203.9 1441.6,1185.1 1444.2,1214.3 1446.7,1227.9 1449.2,1202.2 1451.8,1225.9 1454.3,1232.6 1456.8,1232.0 1459.4,1229.1 1461.9,1224.7 1464.4,1224.1 1466.9,1226.4 1469.5,1232.5 1472.0,1231.4 1474.5,1228.7 1477.1,1227.0 1479.6,1228.4 1482.1,1229.2 1484.7,1227.2 1487.2,1226.4 1489.7,1229.1 1492.3,1230.5 1494.8,1233.1 1497.3,1229.1 1499.9,1229.3 1502.4,1225.5 1504.9,1222.6 1507.5,1220.5 1510.0,1221.5 1512.5,1225.0 1515.0,1229.7 1517.6,1228.9 1520.1,1231.2 1522.6,1229.2 1525.2,1230.3 1527.7,1229.8 1530.2,1226.2 1532.8,1226.5 1535.3,1221.1 1537.8,1227.5 1540.4,1228.1 1542.9,1233.0 1545.4,1228.8 1548.0,1227.4 1550.5,1225.4 1553.0,1222.6 1555.5,1224.2 1558.1,1225.9 1560.6,1227.3 1563.1,1226.5 1565.7,1227.2 1568.2,1225.9 1570.7,1228.4 1573.3,1214.9 1575.8,1209.1 1578.3,1221.8 1580.9,1221.7 1583.4,1189.3 1585.9,1212.8 1588.5,1224.5 1591.0,1228.4 1593.5,1196.9 1596.1,1156.2 1598.6,1196.9 1601.1,1212.0 1603.6,1217.2 1606.2,1221.5 1608.7,1221.5 1611.2,1224.5 1613.8,1227.4 1616.3,1224.6 1618.8,1222.8 1621.4,1224.6 1623.9,1224.7 1626.4,1225.8 1629.0,1224.5 1631.5,1225.6 1634.0,1227.6 1636.6,1225.1 1639.1,1226.9 1641.6,1225.3 1644.2,1223.6 1646.7,1220.7 1649.2,1221.8 1651.7,1225.8 1654.3,1227.1 1656.8,1225.7 1659.3,1227.9 1661.9,1229.5 1664.4,1232.4 1666.9,1228.2 1669.5,1230.8 1672.0,1206.7 1674.5,1226.5 1677.1,1232.8 1679.6,1230.8 1682.1,1226.2 1684.7,1223.5 1687.2,1222.9 1689.7,1223.6 1692.3,1225.5 1694.8,1227.2 1697.3,1228.0 1699.8,1229.4 1702.4,1226.9 1704.9,1224.9 1707.4,1191.9 1710.0,1216.6 1712.5,1225.0 1715.0,1230.0 1717.6,1229.5 1720.1,1231.8 1722.6,1230.8 1725.2,1230.5 1727.7,1230.5 1730.2,1229.1 1732.8,1226.4 1735.3,1227.1 1737.8,1226.5 1740.3,1224.7 1742.9,1223.1 1745.4,1222.5 1747.9,1222.1 1750.5,1202.9 1753.0,1218.1 1755.5,1229.9 1758.1,1232.8 1760.6,1234.2 1763.1,1229.9 1765.7,1228.8 1768.2,1224.9 1770.7,1227.9 1773.3,1226.0 1775.8,1229.7 1778.3,1224.5 1780.9,1227.1 1783.4,1228.7 1785.9,1231.2 1788.4,1229.7 1791.0,1229.0 1793.5,1168.0 1796.0,1098.4 1798.6,1168.0 1801.1,1224.5 1803.6,1217.9 1806.2,1198.1 1808.7,1178.3 1811.2,1198.1 1813.8,1217.9 1816.3,1229.3 1818.8,1232.1 1821.4,1225.4 1823.9,1226.1 1826.4,1222.3 1829.0,1205.4 1831.5,1223.6 1834.0,1229.6 1836.5,1227.1 1839.1,1228.6 1841.6,1234.1 1844.1,1217.8 1846.7,1225.5 1849.2,1229.5 1851.7,1229.9 1854.3,1230.3 1856.8,1229.7 1859.3,1230.6 1861.9,1230.3 1864.4,1229.4 1866.9,1226.5 1869.5,1224.8 1872.0,1204.4 1874.5,1222.1 1877.1,1226.9 1879.6,1229.5 1882.1,1228.8 1884.6,1232.8 1887.2,1230.5 1889.7,1231.2 1892.2,1227.9 1894.8,1228.7 1897.3,1226.2 1899.8,1228.1 1902.4,1229.4 1904.9,1230.3 1907.4,1233.9 1910.0,1230.7 1912.5,1228.5 1915.0,1223.0 1917.6,1220.0 1920.1,1224.7 1922.6,1227.7 1925.1,1229.7 1927.7,1227.8 1930.2,1224.1 1932.7,1225.4 1935.3,1221.7 1937.8,1228.3 1940.3,1229.1 1942.9,1230.4 1945.4,1224.6 1947.9,1223.8 1950.5,1222.5 1953.0,1223.1 1955.5,1223.8 1958.1,1224.9 1960.6,1226.7 1963.1,1229.0 1965.7,1227.6 1968.2,1225.1 1970.7,1219.2 1973.2,1224.2 1975.8,1224.7 1978.3,1231.2 1980.8,1229.2 1983.4,1232.7 1985.9,1229.2 1988.4,1230.1 1991.0,1228.2 1993.5,1227.9" stroke="#5cc7d1"/><polyline points="1069.5,1234.5 1072.0,1234.4 1074.6,1234.8 1077.1,1233.5 1079.6,1233.8 1082.2,1232.7 1084.7,1234.4 1087.2,1236.0 1089.8,1233.9 1092.3,1229.3 1094.8,1227.4 1097.3,1230.6 1099.9,1233.8 1102.4,1206.5 1104.9,1226.6 1107.5,1232.7 1110.0,1228.2 1112.5,1228.9 1115.1,1230.6 1117.6,1234.6 1120.1,1232.8 1122.7,1233.1 1125.2,1231.7 1127.7,1218.7 1130.3,1225.6 1132.8,1231.3 1135.3,1230.5 1137.9,1229.8 1140.4,1226.3 1142.9,1226.8 1145.4,1230.4 1148.0,1229.5 1150.5,1230.2 1153.0,1228.3 1155.6,1231.9 1158.1,1231.7 1160.6,1233.3 1163.2,1229.7 1165.7,1228.5 1168.2,1226.5 1170.8,1227.5 1173.3,1227.5 1175.8,1227.5 1178.4,1230.3 1180.9,1231.2 1183.4,1233.4 1185.9,1230.1 1188.5,1232.3 1191.0,1228.5 1193.5,1228.5 1196.1,1226.1 1198.6,1226.3 1201.1,1229.4 1203.7,1228.8 1206.2,1229.1 1208.7,1226.0 1211.3,1226.4 1213.8,1226.7 1216.3,1226.9 1218.9,1228.5 1221.4,1227.7 1223.9,1229.9 1226.5,1228.4 1229.0,1229.3 1231.5,1230.3 1234.0,1233.3 1236.6,1232.7 1239.1,1230.3 1241.6,1229.7 1244.2,1230.4 1246.7,1231.3 1249.2,1229.2 1251.8,1230.7 1254.3,1228.7 1256.8,1227.9 1259.4,1229.7 1261.9,1230.3 1264.4,1231.8 1267.0,1232.1 1269.5,1234.3 1272.0,1232.9 1274.6,1230.9 1277.1,1231.8 1279.6,1233.4 1282.1,1235.2 1284.7,1235.5 1287.2,1236.7 1289.7,1237.2 1292.3,1235.4 1294.8,1232.6 1297.3,1228.8 1299.9,1227.5 1302.4,1227.3 1304.9,1226.1 1307.5,1228.1 1310.0,1229.4 1312.5,1231.2 1315.1,1231.8 1317.6,1231.2 1320.1,1232.5 1322.7,1232.6 1325.2,1234.3 1327.7,1231.5 1330.2,1230.4 1332.8,1228.8 1335.3,1230.1 1337.8,1230.7 1340.4,1233.1 1342.9,1232.1 1345.4,1233.4 1348.0,1232.3 1350.5,1232.4 1353.0,1229.9 1355.6,1228.3 1358.1,1230.3 1360.6,1229.8 1363.2,1232.7 1365.7,1231.3 1368.2,1233.0 1370.7,1230.1 1373.3,1229.1 1375.8,1217.6 1378.3,1225.9 1380.9,1234.3 1383.4,1234.1 1385.9,1235.0 1388.5,1218.0 1391.0,1224.6 1393.5,1230.7 1396.1,1230.5 1398.6,1232.6 1401.1,1231.3 1403.7,1230.7 1406.2,1229.9 1408.7,1231.0 1411.3,1234.4 1413.8,1235.2 1416.3,1231.9 1418.8,1231.8 1421.4,1232.8 1423.9,1237.2 1426.4,1234.9 1429.0,1232.1 1431.5,1229.7 1434.0,1232.4 1436.6,1231.8 1439.1,1213.2 1441.6,1220.8 1444.2,1228.2 1446.7,1229.2 1449.2,1232.3 1451.8,1231.1 1454.3,1233.3 1456.8,1234.6 1459.4,1233.0 1461.9,1233.2 1464.4,1233.7 1466.9,1236.7 1469.5,1236.6 1472.0,1236.1 1474.5,1203.9 1477.1,1225.1 1479.6,1232.7 1482.1,1232.8 1484.7,1229.4 1487.2,1230.6 1489.7,1231.8 1492.3,1234.7 1494.8,1232.8 1497.3,1231.5 1499.9,1233.1 1502.4,1205.1 1504.9,1226.5 1507.5,1230.1 1510.0,1231.4 1512.5,1143.2 1515.0,1232.7 1517.6,1232.5 1520.1,1231.9 1522.6,1231.3 1525.2,1232.4 1527.7,1232.1 1530.2,1231.0 1532.8,1230.1 1535.3,1229.0 1537.8,1228.8 1540.4,1229.2 1542.9,1230.1 1545.4,1230.1 1548.0,1230.5 1550.5,1229.5 1553.0,1229.0 1555.5,1228.6 1558.1,1232.2 1560.6,1235.3 1563.1,1234.1 1565.7,1199.0 1568.2,1218.6 1570.7,1227.7 1573.3,1229.1 1575.8,1230.5 1578.3,1230.0 1580.9,1228.9 1583.4,1226.1 1585.9,1225.6 1588.5,1226.7 1591.0,1228.5 1593.5,1231.0 1596.1,1230.7 1598.6,1230.2 1601.1,1227.2 1603.6,1228.5 1606.2,1230.1 1608.7,1232.4 1611.2,1231.9 1613.8,1233.4 1616.3,1232.5 1618.8,1233.0 1621.4,1230.2 1623.9,1230.0 1626.4,1231.7 1629.0,1230.1 1631.5,1229.4 1634.0,1225.2 1636.6,1228.5 1639.1,1229.6 1641.6,1230.5 1644.2,1231.5 1646.7,1234.3 1649.2,1233.4 1651.7,1229.5 1654.3,1225.4 1656.8,1227.0 1659.3,1228.8 1661.9,1200.3 1664.4,1219.8 1666.9,1229.5 1669.5,1231.8 1672.0,1232.1 1674.5,1233.7 1677.1,1230.9 1679.6,1233.7 1682.1,1229.6 1684.7,1228.9 1687.2,1230.0 1689.7,1231.9 1692.3,1233.4 1694.8,1233.8 1697.3,1231.8 1699.8,1232.2 1702.4,1230.5 1704.9,1213.2 1707.4,1228.6 1710.0,1231.9 1712.5,1229.0 1715.0,1225.5 1717.6,1229.4 1720.1,1229.9 1722.6,1233.7 1725.2,1232.5 1727.7,1232.9 1730.2,1230.1 1732.8,1231.2 1735.3,1234.5 1737.8,1234.9 1740.3,1231.1 1742.9,1228.8 1745.4,1230.1 1747.9,1233.4 1750.5,1232.8 1753.0,1231.6 1755.5,1229.9 1758.1,1230.6 1760.6,1230.6 1763.1,1210.9 1765.7,1225.0 1768.2,1231.6 1770.7,1232.6 1773.3,1232.0 1775.8,1230.6 1778.3,1231.3 1780.9,1231.0 1783.4,1231.9 1785.9,1228.9 1788.4,1230.7 1791.0,1231.1 1793.5,1232.2 1796.0,1229.0 1798.6,1231.0 1801.1,1232.2 1803.6,1232.7 1806.2,1232.6 1808.7,1204.8 1811.2,1171.9 1813.8,1139.1 1816.3,1171.9 1818.8,1204.8 1821.4,1228.3 1823.9,1230.1 1826.4,1229.2 1829.0,1231.2 1831.5,1230.0 1834.0,1231.5 1836.5,1228.3 1839.1,1228.9 1841.6,1229.0 1844.1,1228.9 1846.7,1230.2 1849.2,1230.2 1851.7,1234.4 1854.3,1236.0 1856.8,1237.7 1859.3,1234.8 1861.9,1231.8 1864.4,1232.2 1866.9,1230.2 1869.5,1231.0 1872.0,1230.5 1874.5,1233.1 1877.1,1234.1 1879.6,1233.2 1882.1,1230.8 1884.6,1227.8 1887.2,1225.1 1889.7,1225.3 1892.2,1226.9 1894.8,1230.4 1897.3,1234.8 1899.8,1237.5 1902.4,1235.0 1904.9,1231.2 1907.4,1228.1 1910.0,1230.1 1912.5,1232.0 1915.0,1223.4 1917.6,1231.7 1920.1,1234.4 1922.6,1233.9 1925.1,1234.7 1927.7,1236.2 1930.2,1233.2 1932.7,1233.6 1935.3,1233.0 1937.8,1234.9 1940.3,1234.6 1942.9,1236.4 1945.4,1234.6 1947.9,1233.3 1950.5,1231.7 1953.0,1231.3 1955.5,1231.9 1958.1,1232.5 1960.6,1144.3 1963.1,1231.1 1965.7,1228.5 1968.2,1227.6 1970.7,1231.8 1973.2,1232.4 1975.8,1231.7 1978.3,1227.8 1980.8,1227.8 1983.4,1204.6 1985.9,1225.6 1988.4,1234.8 1991.0,1236.0 1993.5,1235.0" stroke="#9dd9e3"/><polyline points="1069.5,1218.4 1072.0,1222.9 1074.6,1223.2 1077.1,1224.2 1079.6,1214.5 1082.2,1223.2 1084.7,1223.9 1087.2,1226.3 1089.8,1226.2 1092.3,1228.2 1094.8,1229.3 1097.3,1230.9 1099.9,1228.3 1102.4,1226.5 1104.9,1223.3 1107.5,1223.0 1110.0,1220.4 1112.5,1221.3 1115.1,1219.1 1117.6,1216.7 1120.1,1216.9 1122.7,1217.1 1125.2,1219.9 1127.7,1223.5 1130.3,1201.3 1132.8,1195.5 1135.3,1216.7 1137.9,1223.6 1140.4,1210.2 1142.9,1213.0 1145.4,1219.5 1148.0,1219.7 1150.5,1220.1 1153.0,1216.3 1155.6,1214.0 1158.1,1217.4 1160.6,1221.1 1163.2,1201.3 1165.7,1212.0 1168.2,1217.8 1170.8,1218.0 1173.3,1202.0 1175.8,1214.3 1178.4,1223.5 1180.9,1225.5 1183.4,1227.7 1185.9,1222.0 1188.5,1223.9 1191.0,1224.2 1193.5,1230.0 1196.1,1224.1 1198.6,1220.8 1201.1,1220.0 1203.7,1225.3 1206.2,1225.2 1208.7,1208.2 1211.3,1213.9 1213.8,1217.7 1216.3,1218.8 1218.9,1223.3 1221.4,1222.7 1223.9,1220.7 1226.5,1219.7 1229.0,1205.6 1231.5,1216.8 1234.0,1215.9 1236.6,1212.7 1239.1,1213.7 1241.6,1219.8 1244.2,1219.4 1246.7,1219.5 1249.2,1219.2 1251.8,1218.9 1254.3,1219.0 1256.8,1213.7 1259.4,1213.8 1261.9,1219.1 1264.4,1224.7 1267.0,1225.4 1269.5,1224.8 1272.0,1205.5 1274.6,1183.2 1277.1,1210.4 1279.6,1218.3 1282.1,1221.1 1284.7,1222.1 1287.2,1217.7 1289.7,1204.1 1292.3,1215.1 1294.8,1203.2 1297.3,1221.3 1299.9,1225.6 1302.4,1222.0 1304.9,1221.8 1307.5,1220.8 1310.0,1210.7 1312.5,1215.8 1315.1,1220.7 1317.6,1222.1 1320.1,1226.2 1322.7,1215.7 1325.2,1221.1 1327.7,1217.8 1330.2,1214.6 1332.8,1214.7 1335.3,1220.1 1337.8,1220.9 1340.4,1222.7 1342.9,1216.7 1345.4,1216.1 1348.0,1218.5 1350.5,1225.3 1353.0,1231.9 1355.6,1227.6 1358.1,1224.3 1360.6,1220.0 1363.2,1222.6 1365.7,1221.9 1368.2,1225.8 1370.7,1226.7 1373.3,1225.6 1375.8,1224.6 1378.3,1219.3 1380.9,1201.0 1383.4,1219.3 1385.9,1214.2 1388.5,1212.5 1391.0,1214.5 1393.5,1221.4 1396.1,1226.8 1398.6,1227.8 1401.1,1223.9 1403.7,1218.8 1406.2,1206.4 1408.7,1217.3 1411.3,1227.9 1413.8,1222.5 1416.3,1226.5 1418.8,1223.4 1421.4,1223.3 1423.9,1216.6 1426.4,1214.3 1429.0,1214.3 1431.5,1219.4 1434.0,1220.5 1436.6,1222.3 1439.1,1220.9 1441.6,1221.2 1444.2,1221.9 1446.7,1210.5 1449.2,1217.8 1451.8,1220.0 1454.3,1215.6 1456.8,1214.4 1459.4,1203.9 1461.9,1200.5 1464.4,1217.9 1466.9,1203.1 1469.5,1199.9 1472.0,1212.9 1474.5,1219.2 1477.1,1225.0 1479.6,1225.3 1482.1,1219.5 1484.7,1217.1 1487.2,1219.1 1489.7,1223.5 1492.3,1223.1 1494.8,1206.0 1497.3,1215.5 1499.9,1216.7 1502.4,1218.8 1504.9,1220.2 1507.5,1207.0 1510.0,1214.0 1512.5,1218.8 1515.0,1215.3 1517.6,1215.5 1520.1,1219.1 1522.6,1220.2 1525.2,1226.5 1527.7,1223.1 1530.2,1224.1 1532.8,1224.4 1535.3,1223.8 1537.8,1223.3 1540.4,1221.3 1542.9,1221.6 1545.4,1223.8 1548.0,1225.2 1550.5,1227.4 1553.0,1223.3 1555.5,1219.7 1558.1,1217.6 1560.6,1218.6 1563.1,1217.1 1565.7,1215.5 1568.2,1218.5 1570.7,1220.7 1573.3,1223.9 1575.8,1215.0 1578.3,1220.2 1580.9,1225.4 1583.4,1223.1 1585.9,1223.6 1588.5,1221.9 1591.0,1217.9 1593.5,1200.7 1596.1,1218.3 1598.6,1228.7 1601.1,1224.2 1603.6,1219.4 1606.2,1216.0 1608.7,1214.7 1611.2,1219.2 1613.8,1218.5 1616.3,1224.2 1618.8,1209.8 1621.4,1223.2 1623.9,1227.1 1626.4,1229.1 1629.0,1224.3 1631.5,1217.2 1634.0,1195.4 1636.6,1191.5 1639.1,1212.3 1641.6,1220.2 1644.2,1223.1 1646.7,1207.5 1649.2,1219.4 1651.7,1211.9 1654.3,1220.6 1656.8,1223.8 1659.3,1229.1 1661.9,1228.3 1664.4,1228.6 1666.9,1227.8 1669.5,1229.5 1672.0,1220.4 1674.5,1213.3 1677.1,1218.8 1679.6,1223.8 1682.1,1221.7 1684.7,1228.2 1687.2,1224.1 1689.7,1225.4 1692.3,1214.2 1694.8,1225.3 1697.3,1200.2 1699.8,1210.1 1702.4,1216.2 1704.9,1218.7 1707.4,1225.0 1710.0,1221.8 1712.5,1220.5 1715.0,1219.2 1717.6,1219.6 1720.1,1224.1 1722.6,1222.3 1725.2,1226.4 1727.7,1223.4 1730.2,1225.1 1732.8,1223.2 1735.3,1225.5 1737.8,1213.1 1740.3,1226.2 1742.9,1226.5 1745.4,1223.3 1747.9,1220.3 1750.5,1221.3 1753.0,1222.7 1755.5,1225.1 1758.1,1227.0 1760.6,1223.3 1763.1,1219.3 1765.7,1218.9 1768.2,1220.0 1770.7,1223.5 1773.3,1219.9 1775.8,1219.6 1778.3,1215.5 1780.9,1219.8 1783.4,1220.3 1785.9,1221.0 1788.4,1203.7 1791.0,1213.6 1793.5,1199.9 1796.0,1162.1 1798.6,1199.9 1801.1,1221.3 1803.6,1226.1 1806.2,1213.7 1808.7,1219.2 1811.2,1223.5 1813.8,1225.1 1816.3,1227.7 1818.8,1223.0 1821.4,1219.3 1823.9,1218.2 1826.4,1217.8 1829.0,1202.5 1831.5,1217.6 1834.0,1223.7 1836.5,1226.1 1839.1,1227.2 1841.6,1227.4 1844.1,1222.3 1846.7,1218.8 1849.2,1201.6 1851.7,1215.0 1854.3,1222.8 1856.8,1215.7 1859.3,1219.0 1861.9,1217.0 1864.4,1218.9 1866.9,1219.5 1869.5,1219.4 1872.0,1214.7 1874.5,1215.1 1877.1,1215.7 1879.6,1219.2 1882.1,1204.5 1884.6,1218.4 1887.2,1220.7 1889.7,1223.7 1892.2,1218.7 1894.8,1222.5 1897.3,1220.2 1899.8,1223.0 1902.4,1223.2 1904.9,1222.0 1907.4,1226.1 1910.0,1221.9 1912.5,1212.0 1915.0,1215.5 1917.6,1219.7 1920.1,1214.6 1922.6,1215.5 1925.1,1220.5 1927.7,1222.1 1930.2,1227.3 1932.7,1223.1 1935.3,1221.5 1937.8,1220.4 1940.3,1222.6 1942.9,1227.8 1945.4,1224.4 1947.9,1222.5 1950.5,1222.7 1953.0,1207.1 1955.5,1217.0 1958.1,1220.9 1960.6,1218.7 1963.1,1223.2 1965.7,1224.4 1968.2,1230.6 1970.7,1227.0 1973.2,1225.6 1975.8,1219.9 1978.3,1222.3 1980.8,1223.1 1983.4,1223.4 1985.9,1224.2 1988.4,1223.8 1991.0,1229.9 1993.5,1232.3" stroke="#f9d58c"/><polyline points="1069.5,1229.0 1072.0,1227.1 1074.6,1226.1 1077.1,1227.1 1079.6,1227.9 1082.2,1227.6 1084.7,1225.3 1087.2,1222.8 1089.8,1221.0 1092.3,1221.1 1094.8,1223.0 1097.3,1225.8 1099.9,1229.0 1102.4,1230.4 1104.9,1228.9 1107.5,1216.6 1110.0,1220.2 1112.5,1223.2 1115.1,1226.8 1117.6,1228.7 1120.1,1229.4 1122.7,1221.3 1125.2,1224.1 1127.7,1225.0 1130.3,1226.1 1132.8,1225.2 1135.3,1225.5 1137.9,1226.2 1140.4,1228.2 1142.9,1228.8 1145.4,1228.9 1148.0,1229.8 1150.5,1230.8 1153.0,1231.3 1155.6,1231.8 1158.1,1232.2 1160.6,1233.2 1163.2,1232.9 1165.7,1232.4 1168.2,1231.5 1170.8,1231.7 1173.3,1232.0 1175.8,1232.5 1178.4,1232.2 1180.9,1232.9 1183.4,1232.0 1185.9,1231.7 1188.5,1229.7 1191.0,1230.5 1193.5,1229.6 1196.1,1223.7 1198.6,1223.6 1201.1,1224.1 1203.7,1225.8 1206.2,1230.0 1208.7,1231.1 1211.3,1230.8 1213.8,1228.0 1216.3,1227.2 1218.9,1224.5 1221.4,1223.9 1223.9,1223.7 1226.5,1226.3 1229.0,1227.6 1231.5,1228.0 1234.0,1226.6 1236.6,1226.1 1239.1,1225.1 1241.6,1225.0 1244.2,1224.8 1246.7,1226.3 1249.2,1228.4 1251.8,1228.7 1254.3,1228.9 1256.8,1227.9 1259.4,1229.4 1261.9,1228.9 1264.4,1229.4 1267.0,1228.3 1269.5,1229.4 1272.0,1229.6 1274.6,1231.0 1277.1,1231.5 1279.6,1230.9 1282.1,1230.0 1284.7,1227.2 1287.2,1226.6 1289.7,1223.6 1292.3,1214.7 1294.8,1208.8 1297.3,1220.9 1299.9,1225.6 1302.4,1227.2 1304.9,1228.4 1307.5,1229.4 1310.0,1228.9 1312.5,1226.0 1315.1,1222.6 1317.6,1220.6 1320.1,1222.0 1322.7,1224.8 1325.2,1228.2 1327.7,1228.5 1330.2,1227.6 1332.8,1225.3 1335.3,1225.6 1337.8,1226.0 1340.4,1226.7 1342.9,1226.8 1345.4,1227.7 1348.0,1228.7 1350.5,1222.0 1353.0,1226.6 1355.6,1228.7 1358.1,1228.6 1360.6,1229.6 1363.2,1230.0 1365.7,1230.4 1368.2,1230.1 1370.7,1228.5 1373.3,1226.7 1375.8,1224.7 1378.3,1224.4 1380.9,1223.9 1383.4,1222.3 1385.9,1222.3 1388.5,1223.3 1391.0,1225.6 1393.5,1224.7 1396.1,1223.6 1398.6,1213.9 1401.1,1221.5 1403.7,1225.0 1406.2,1225.4 1408.7,1224.6 1411.3,1225.0 1413.8,1227.1 1416.3,1229.3 1418.8,1230.4 1421.4,1230.4 1423.9,1230.8 1426.4,1231.4 1429.0,1230.8 1431.5,1227.9 1434.0,1226.2 1436.6,1226.2 1439.1,1229.8 1441.6,1230.3 1444.2,1229.0 1446.7,1225.9 1449.2,1225.7 1451.8,1226.9 1454.3,1227.1 1456.8,1226.3 1459.4,1225.6 1461.9,1226.8 1464.4,1228.9 1466.9,1231.5 1469.5,1232.6 1472.0,1232.6 1474.5,1230.2 1477.1,1228.9 1479.6,1228.1 1482.1,1229.4 1484.7,1229.4 1487.2,1227.5 1489.7,1225.6 1492.3,1223.9 1494.8,1223.9 1497.3,1212.4 1499.9,1218.8 1502.4,1221.9 1504.9,1224.1 1507.5,1227.3 1510.0,1228.9 1512.5,1229.5 1515.0,1228.3 1517.6,1228.4 1520.1,1228.9 1522.6,1229.6 1525.2,1229.0 1527.7,1227.6 1530.2,1227.4 1532.8,1228.3 1535.3,1228.9 1537.8,1227.7 1540.4,1225.7 1542.9,1223.7 1545.4,1222.1 1548.0,1221.4 1550.5,1221.4 1553.0,1222.4 1555.5,1223.0 1558.1,1225.2 1560.6,1227.5 1563.1,1229.9 1565.7,1230.6 1568.2,1230.9 1570.7,1231.3 1573.3,1232.1 1575.8,1232.3 1578.3,1231.5 1580.9,1228.8 1583.4,1226.4 1585.9,1223.4 1588.5,1221.8 1591.0,1221.8 1593.5,1223.5 1596.1,1225.4 1598.6,1226.0 1601.1,1227.1 1603.6,1230.3 1606.2,1233.1 1608.7,1233.1 1611.2,1229.3 1613.8,1225.8 1616.3,1226.1 1618.8,1229.8 1621.4,1232.0 1623.9,1231.4 1626.4,1228.1 1629.0,1227.6 1631.5,1227.4 1634.0,1228.2 1636.6,1226.6 1639.1,1225.9 1641.6,1225.9 1644.2,1227.6 1646.7,1227.0 1649.2,1225.5 1651.7,1224.4 1654.3,1226.6 1656.8,1230.0 1659.3,1231.9 1661.9,1230.3 1664.4,1227.0 1666.9,1224.3 1669.5,1224.6 1672.0,1225.2 1674.5,1225.2 1677.1,1223.8 1679.6,1223.1 1682.1,1224.0 1684.7,1225.7 1687.2,1226.6 1689.7,1227.4 1692.3,1227.5 1694.8,1228.1 1697.3,1226.6 1699.8,1225.6 1702.4,1226.1 1704.9,1228.2 1707.4,1229.4 1710.0,1228.0 1712.5,1225.7 1715.0,1223.7 1717.6,1223.4 1720.1,1224.3 1722.6,1226.4 1725.2,1226.7 1727.7,1225.3 1730.2,1210.6 1732.8,1217.8 1735.3,1222.6 1737.8,1224.8 1740.3,1228.0 1742.9,1228.3 1745.4,1227.8 1747.9,1224.9 1750.5,1224.4 1753.0,1225.1 1755.5,1228.5 1758.1,1229.4 1760.6,1228.7 1763.1,1225.8 1765.7,1224.8 1768.2,1224.4 1770.7,1225.2 1773.3,1226.2 1775.8,1226.7 1778.3,1226.3 1780.9,1224.5 1783.4,1224.0 1785.9,1225.4 1788.4,1228.0 1791.0,1230.9 1793.5,1231.6 1796.0,1230.4 1798.6,1227.7 1801.1,1227.0 1803.6,1228.4 1806.2,1230.2 1808.7,1229.8 1811.2,1228.9 1813.8,1228.2 1816.3,1229.4 1818.8,1228.9 1821.4,1227.3 1823.9,1225.6 1826.4,1226.8 1829.0,1230.5 1831.5,1232.2 1834.0,1221.9 1836.5,1226.0 1839.1,1228.3 1841.6,1228.4 1844.1,1229.1 1846.7,1228.0 1849.2,1227.3 1851.7,1225.1 1854.3,1224.7 1856.8,1224.5 1859.3,1225.0 1861.9,1224.1 1864.4,1223.2 1866.9,1223.7 1869.5,1223.8 1872.0,1223.0 1874.5,1221.3 1877.1,1221.3 1879.6,1224.0 1882.1,1227.1 1884.6,1229.5 1887.2,1228.8 1889.7,1227.8 1892.2,1226.9 1894.8,1228.4 1897.3,1229.2 1899.8,1229.0 1902.4,1226.5 1904.9,1225.7 1907.4,1226.0 1910.0,1228.9 1912.5,1230.6 1915.0,1232.3 1917.6,1232.2 1920.1,1230.3 1922.6,1228.8 1925.1,1227.2 1927.7,1217.9 1930.2,1225.4 1932.7,1229.8 1935.3,1227.3 1937.8,1227.8 1940.3,1226.8 1942.9,1229.1 1945.4,1229.5 1947.9,1231.1 1950.5,1229.8 1953.0,1229.4 1955.5,1228.0 1958.1,1227.8 1960.6,1227.0 1963.1,1227.1 1965.7,1226.6 1968.2,1226.1 1970.7,1223.6 1973.2,1221.7 1975.8,1221.2 1978.3,1223.8 1980.8,1227.4 1983.4,1228.7 1985.9,1216.3 1988.4,1222.3 1991.0,1226.9 1993.5,1229.3" stroke="#8fd5b0"/><polyline points="1069.5,1231.5 1072.0,1232.1 1074.6,1232.3 1077.1,1231.8 1079.6,1230.9 1082.2,1230.1 1084.7,1230.0 1087.2,1231.0 1089.8,1232.6 1092.3,1233.0 1094.8,1232.0 1097.3,1230.4 1099.9,1229.3 1102.4,1229.3 1104.9,1229.8 1107.5,1230.3 1110.0,1230.2 1112.5,1230.4 1115.1,1231.6 1117.6,1233.4 1120.1,1233.6 1122.7,1233.1 1125.2,1231.6 1127.7,1231.8 1130.3,1231.7 1132.8,1231.9 1135.3,1230.6 1137.9,1229.9 1140.4,1229.6 1142.9,1231.0 1145.4,1231.9 1148.0,1233.0 1150.5,1233.1 1153.0,1233.6 1155.6,1233.3 1158.1,1232.6 1160.6,1232.6 1163.2,1232.5 1165.7,1232.6 1168.2,1231.1 1170.8,1230.7 1173.3,1230.7 1175.8,1232.0 1178.4,1233.0 1180.9,1234.2 1183.4,1235.0 1185.9,1235.1 1188.5,1233.8 1191.0,1232.4 1193.5,1230.9 1196.1,1230.6 1198.6,1221.4 1201.1,1229.2 1203.7,1232.8 1206.2,1232.7 1208.7,1232.8 1211.3,1233.5 1213.8,1233.9 1216.3,1234.1 1218.9,1233.5 1221.4,1233.3 1223.9,1232.7 1226.5,1232.3 1229.0,1232.6 1231.5,1233.7 1234.0,1233.9 1236.6,1233.2 1239.1,1232.0 1241.6,1232.1 1244.2,1231.5 1246.7,1232.1 1249.2,1232.6 1251.8,1234.4 1254.3,1234.4 1256.8,1233.4 1259.4,1230.9 1261.9,1229.9 1264.4,1229.8 1267.0,1231.1 1269.5,1231.5 1272.0,1232.2 1274.6,1231.8 1277.1,1233.0 1279.6,1234.2 1282.1,1235.0 1284.7,1234.6 1287.2,1224.6 1289.7,1230.3 1292.3,1232.0 1294.8,1225.8 1297.3,1229.5 1299.9,1231.2 1302.4,1231.4 1304.9,1231.9 1307.5,1232.8 1310.0,1232.9 1312.5,1232.4 1315.1,1232.3 1317.6,1233.2 1320.1,1234.6 1322.7,1234.4 1325.2,1233.3 1327.7,1232.0 1330.2,1232.0 1332.8,1232.8 1335.3,1232.7 1337.8,1232.1 1340.4,1230.5 1342.9,1221.3 1345.4,1228.3 1348.0,1232.4 1350.5,1233.4 1353.0,1232.9 1355.6,1232.4 1358.1,1230.8 1360.6,1230.4 1363.2,1230.0 1365.7,1231.5 1368.2,1232.9 1370.7,1234.7 1373.3,1235.6 1375.8,1235.9 1378.3,1235.6 1380.9,1234.9 1383.4,1234.9 1385.9,1234.7 1388.5,1234.7 1391.0,1233.2 1393.5,1231.4 1396.1,1230.2 1398.6,1230.8 1401.1,1232.2 1403.7,1233.0 1406.2,1233.1 1408.7,1232.9 1411.3,1233.8 1413.8,1234.5 1416.3,1235.3 1418.8,1234.8 1421.4,1234.4 1423.9,1232.7 1426.4,1232.1 1429.0,1231.2 1431.5,1232.0 1434.0,1231.8 1436.6,1232.7 1439.1,1232.2 1441.6,1232.8 1444.2,1232.0 1446.7,1232.5 1449.2,1232.8 1451.8,1234.0 1454.3,1234.7 1456.8,1234.3 1459.4,1234.0 1461.9,1233.6 1464.4,1234.4 1466.9,1234.3 1469.5,1233.5 1472.0,1232.2 1474.5,1231.9 1477.1,1232.0 1479.6,1232.2 1482.1,1231.0 1484.7,1231.2 1487.2,1232.0 1489.7,1234.2 1492.3,1234.4 1494.8,1234.1 1497.3,1232.9 1499.9,1233.4 1502.4,1233.5 1504.9,1234.0 1507.5,1233.5 1510.0,1233.5 1512.5,1232.9 1515.0,1232.9 1517.6,1233.2 1520.1,1233.9 1522.6,1233.8 1525.2,1233.1 1527.7,1232.1 1530.2,1223.7 1532.8,1231.1 1535.3,1235.2 1537.8,1235.1 1540.4,1233.8 1542.9,1231.6 1545.4,1230.6 1548.0,1230.7 1550.5,1231.8 1553.0,1232.4 1555.5,1232.6 1558.1,1232.0 1560.6,1231.7 1563.1,1232.0 1565.7,1233.3 1568.2,1234.5 1570.7,1235.1 1573.3,1235.1 1575.8,1233.9 1578.3,1232.6 1580.9,1230.8 1583.4,1230.1 1585.9,1229.2 1588.5,1228.9 1591.0,1229.1 1593.5,1230.6 1596.1,1232.3 1598.6,1232.9 1601.1,1232.4 1603.6,1231.6 1606.2,1231.3 1608.7,1230.8 1611.2,1231.3 1613.8,1231.6 1616.3,1232.2 1618.8,1224.4 1621.4,1229.2 1623.9,1231.8 1626.4,1231.8 1629.0,1231.8 1631.5,1230.5 1634.0,1230.7 1636.6,1231.6 1639.1,1233.5 1641.6,1234.4 1644.2,1234.3 1646.7,1233.5 1649.2,1232.1 1651.7,1231.1 1654.3,1231.5 1656.8,1232.7 1659.3,1233.3 1661.9,1233.2 1664.4,1232.7 1666.9,1233.1 1669.5,1233.3 1672.0,1233.7 1674.5,1233.0 1677.1,1232.3 1679.6,1231.9 1682.1,1232.1 1684.7,1231.3 1687.2,1229.8 1689.7,1228.5 1692.3,1228.3 1694.8,1229.1 1697.3,1229.9 1699.8,1230.7 1702.4,1230.5 1704.9,1230.2 1707.4,1229.9 1710.0,1230.1 1712.5,1229.8 1715.0,1229.4 1717.6,1223.0 1720.1,1227.7 1722.6,1230.8 1725.2,1232.8 1727.7,1234.0 1730.2,1234.7 1732.8,1234.6 1735.3,1233.1 1737.8,1231.3 1740.3,1230.4 1742.9,1231.6 1745.4,1232.9 1747.9,1233.3 1750.5,1232.6 1753.0,1231.8 1755.5,1231.5 1758.1,1202.7 1760.6,1167.7 1763.1,1202.7 1765.7,1232.5 1768.2,1233.0 1770.7,1234.0 1773.3,1234.8 1775.8,1235.5 1778.3,1235.1 1780.9,1233.8 1783.4,1232.1 1785.9,1232.0 1788.4,1232.9 1791.0,1234.1 1793.5,1233.9 1796.0,1233.1 1798.6,1232.0 1801.1,1224.9 1803.6,1230.1 1806.2,1232.0 1808.7,1231.0 1811.2,1230.6 1813.8,1230.7 1816.3,1231.9 1818.8,1231.8 1821.4,1232.0 1823.9,1231.5 1826.4,1232.6 1829.0,1226.3 1831.5,1231.2 1834.0,1232.3 1836.5,1231.6 1839.1,1232.0 1841.6,1223.6 1844.1,1228.3 1846.7,1229.7 1849.2,1229.9 1851.7,1231.4 1854.3,1232.9 1856.8,1233.7 1859.3,1232.7 1861.9,1231.7 1864.4,1230.6 1866.9,1230.5 1869.5,1231.3 1872.0,1232.1 1874.5,1233.5 1877.1,1233.6 1879.6,1234.3 1882.1,1233.9 1884.6,1234.7 1887.2,1234.1 1889.7,1233.6 1892.2,1232.1 1894.8,1232.4 1897.3,1232.7 1899.8,1233.2 1902.4,1232.4 1904.9,1232.7 1907.4,1233.3 1910.0,1234.4 1912.5,1233.7 1915.0,1233.1 1917.6,1232.9 1920.1,1233.9 1922.6,1234.7 1925.1,1235.0 1927.7,1235.5 1930.2,1235.7 1932.7,1235.4 1935.3,1234.5 1937.8,1233.7 1940.3,1233.7 1942.9,1233.8 1945.4,1234.4 1947.9,1234.4 1950.5,1233.7 1953.0,1232.9 1955.5,1232.0 1958.1,1223.2 1960.6,1228.9 1963.1,1231.6 1965.7,1232.2 1968.2,1232.5 1970.7,1231.8 1973.2,1230.8 1975.8,1231.3 1978.3,1232.4 1980.8,1233.4 1983.4,1233.3 1985.9,1233.9 1988.4,1233.9 1991.0,1233.2 1993.5,1231.9" stroke="#f3a9b1"/></svg>
<div class="t r" style="letter-spacing:1.90px;right:2469.1px;top:1226.6px;font-size:23px;line-height:23px">0</div>
<div class="t r" style="letter-spacing:1.90px;right:2469.1px;top:1136.6px;font-size:23px;line-height:23px">500</div>
<div class="t r" style="letter-spacing:1.90px;right:2469.1px;top:1046.6px;font-size:23px;line-height:23px">1000</div>
<div class="t r" style="letter-spacing:1.90px;right:2469.1px;top:956.6px;font-size:23px;line-height:23px">1500</div>
<div class="t r" style="letter-spacing:1.90px;right:2469.1px;top:866.6px;font-size:23px;line-height:23px">2000</div>
<div class="t r" style="letter-spacing:1.90px;right:2469.1px;top:776.6px;font-size:23px;line-height:23px">2500</div>
<div class="t r" style="letter-spacing:1.90px;right:2469.1px;top:686.6px;font-size:23px;line-height:23px">3000</div>
<div class="t r" style="letter-spacing:1.90px;right:2469.1px;top:596.6px;font-size:23px;line-height:23px">3500</div>
<div class="t r" style="letter-spacing:1.90px;right:2469.1px;top:506.6px;font-size:23px;line-height:23px">4000</div>
<div class="t r" style="letter-spacing:1.90px;right:2469.1px;top:416.6px;font-size:23px;line-height:23px">4500</div>
<div class="t r" style="letter-spacing:0.90px;left:1131.0px;transform:translateX(-50%);top:1250.5px;font-size:23px;line-height:23px">Jan</div>
<div class="t r" style="letter-spacing:0.90px;left:1290.5px;transform:translateX(-50%);top:1250.5px;font-size:23px;line-height:23px">Mar</div>
<div class="t r" style="letter-spacing:0.90px;left:1451.5px;transform:translateX(-50%);top:1250.5px;font-size:23px;line-height:23px">May</div>
<div class="t r" style="letter-spacing:0.90px;left:1609.0px;transform:translateX(-50%);top:1250.5px;font-size:23px;line-height:23px">Jul</div>
<div class="t r" style="letter-spacing:0.90px;left:1764.5px;transform:translateX(-50%);top:1250.5px;font-size:23px;line-height:23px">Nov</div>
<div class="t r" style="letter-spacing:0.90px;left:1931.0px;transform:translateX(-50%);top:1250.5px;font-size:23px;line-height:23px">Sept</div>
<div class="t r" style="letter-spacing:0.75px;left:2074.3px;top:401.9px;font-size:23px;line-height:23px">South_7130</div>
<div class="t r" style="letter-spacing:0.75px;left:2074.3px;top:441.9px;font-size:23px;line-height:23px">West_7056</div>
<div class="t r" style="letter-spacing:0.75px;left:2074.3px;top:481.9px;font-size:23px;line-height:23px">North_7159</div>
<div class="t r" style="letter-spacing:0.75px;left:2074.3px;top:521.9px;font-size:23px;line-height:23px">South_7120</div>
<div class="t r" style="letter-spacing:0.75px;left:2074.3px;top:561.9px;font-size:23px;line-height:23px">South_7387</div>
<div class="t r" style="letter-spacing:0.75px;left:2074.3px;top:601.9px;font-size:23px;line-height:23px">South_7077</div>
<div class="t r" style="letter-spacing:0.75px;left:2074.3px;top:641.9px;font-size:23px;line-height:23px">South_7439</div>
<div class="t r" style="letter-spacing:0.75px;left:2074.3px;top:681.9px;font-size:23px;line-height:23px">West_7215</div>
<div class="t r" style="letter-spacing:0.75px;left:2074.3px;top:721.9px;font-size:23px;line-height:23px">West_7179</div>
<div class="t r" style="letter-spacing:0.75px;left:2074.3px;top:761.9px;font-size:23px;line-height:23px">South_7170</div>
<div class="t r" style="letter-spacing:0.75px;left:2074.3px;top:801.9px;font-size:23px;line-height:23px">South_7329</div>
<div class="t r" style="letter-spacing:0.75px;left:2074.3px;top:841.9px;font-size:23px;line-height:23px">South_7467</div>
<div class="t r" style="letter-spacing:0.75px;left:2074.3px;top:881.9px;font-size:23px;line-height:23px">South_7032</div>
<div class="t r" style="letter-spacing:0.75px;left:2074.3px;top:921.9px;font-size:23px;line-height:23px">South_7408</div>
<div class="t r" style="letter-spacing:0.75px;left:2074.3px;top:961.9px;font-size:23px;line-height:23px">South_7452</div>
<div class="t r" style="letter-spacing:0.75px;left:2074.3px;top:1001.9px;font-size:23px;line-height:23px">South_7480</div>
<div class="t r" style="letter-spacing:0.75px;left:2074.3px;top:1041.9px;font-size:23px;line-height:23px">ROOT_ecomstore</div>
<div class="t r" style="letter-spacing:0.75px;left:2074.3px;top:1081.9px;font-size:23px;line-height:23px">South_7249</div>
<div class="t r" style="letter-spacing:0.75px;left:2074.3px;top:1121.9px;font-size:23px;line-height:23px">East_7096</div>
<div class="t r" style="letter-spacing:0.75px;left:2074.3px;top:1161.9px;font-size:23px;line-height:23px">South_7045</div>
<svg style="position:absolute;left:2030px;top:400px" width="40" height="790" viewBox="2030 400 40 790" fill="none" stroke-width="4" stroke-linecap="round"><path d="M2037.5 413 H2058" stroke="#4a4db5"/><path d="M2037.5 453 H2058" stroke="#f4c25e"/><path d="M2037.5 493 H2058" stroke="#22a98a"/><path d="M2037.5 533 H2058" stroke="#cf3f58"/><path d="M2037.5 573 H2058" stroke="#b183d9"/><path d="M2037.5 613 H2058" stroke="#3a7fe0"/><path d="M2037.5 653 H2058" stroke="#f08c6e"/><path d="M2037.5 693 H2058" stroke="#5cc7d1"/><path d="M2037.5 733 H2058" stroke="#d6d4e9"/><path d="M2037.5 773 H2058" stroke="#f9d58c"/><path d="M2037.5 813 H2058" stroke="#8fd5b0"/><path d="M2037.5 853 H2058" stroke="#f3a9b1"/><path d="M2037.5 893 H2058" stroke="#c5b3e3"/><path d="M2037.5 933 H2058" stroke="#9ec0f1"/><path d="M2037.5 973 H2058" stroke="#f7ba9e"/><path d="M2037.5 1013 H2058" stroke="#9dd9e3"/><path d="M2037.5 1053 H2058" stroke="#2b2f8b"/><path d="M2037.5 1093 H2058" stroke="#ba8b3b"/><path d="M2037.5 1133 H2058" stroke="#2f7e5c"/><path d="M2037.5 1173 H2058" stroke="#9b3446"/></svg>
<div style="position:absolute;left:2279px;top:401px;width:6px;height:158px;background:#9a9a9a;border-radius:3px"></div>
<div style="position:absolute;left:2344px;top:80px;width:1076px;height:2060px;background:#fafafa;border-left:2px solid #e0e0e0"></div>
<svg style="position:absolute;left:2360px;top:98px" width="40" height="42" viewBox="2360 98 40 42" fill="none" stroke="#111" stroke-width="2.2" stroke-linecap="round" stroke-linejoin="round"><ellipse cx="2379" cy="110.1" rx="12.1" ry="5.4"/><path d="M2366.9 110.1 V126.4 Q2368 130.6 2379.6 131.3"/><path d="M2391.1 110.1 V117.4"/><path d="M2366.9 116 Q2368.5 120.2 2381.2 120.4"/><path d="M2366.9 121.4 Q2368.5 125.6 2379.6 125.9"/><path d="M2388.3 118.7 L2382.8 127.4 L2387.1 128.5 L2386.5 134 L2392.7 124.6 L2388.6 123.6 Z"/></svg>
<div class="t b" style="letter-spacing:-0.15px;left:2407.2px;top:107.2px;font-size:27.2px;line-height:27.2px">Connected table</div>
<div style="position:absolute;left:2361px;top:158px;width:1060px;height:1990px;background:#fff;border:2px solid #e0e0e0;border-radius:9px 0 0 0"></div>
<div class="t b" style="letter-spacing:-0.60px;left:2392.4px;top:199.1px;font-size:23.3px;line-height:23.3px">Source</div>
<div style="position:absolute;left:2392px;top:232px;width:993.5px;height:79px;background:#fafafa;border:2px solid #e3e3e3;border-radius:7px"></div>
<svg style="position:absolute;left:2410px;top:252px" width="44" height="44" viewBox="2410 252 44 44" fill="none" stroke="#29b5e8" stroke-width="3.5" stroke-linecap="round" stroke-linejoin="round"><path d="M2446.10 269.40 L2438.70 274.00 L2446.10 278.60"/><path d="M2442.60 284.10 L2435.70 280.10 L2435.70 288.50"/><path d="M2442.60 263.90 L2435.70 267.90 L2435.70 259.50"/><path d="M2417.70 269.40 L2425.10 274.00 L2417.70 278.60"/><path d="M2421.20 284.10 L2428.10 280.10 L2428.10 288.50"/><path d="M2421.20 263.90 L2428.10 267.90 L2428.10 259.50"/><path d="M2431.90 271.00 l3 3 l-3 3 l-3 -3 z" stroke-width="1.9"/></svg>
<div class="t r" style="letter-spacing:1.11px;left:2458.7px;top:260.4px;font-size:25px;line-height:25px">Snowflake</div>
<svg style="position:absolute;left:3336.4px;top:266.4px" width="19.2" height="13.2" viewBox="-9.6 -6.6 19.2 13.2" fill="none" stroke="#111" stroke-width="2.5" stroke-linecap="round" stroke-linejoin="round"><path d="M-6.6 -3.3 L0 3.3 L6.6 -3.3"/></svg>
<div class="t b" style="letter-spacing:-0.28px;left:2392.4px;top:338.9px;font-size:23.3px;line-height:23.3px">Database</div>
<div style="position:absolute;left:2392px;top:373px;width:485.5px;height:78.3px;background:#fafafa;border:2px solid #e3e3e3;border-radius:7px"></div>
<div class="t r" style="letter-spacing:-0.88px;left:2412.8px;top:400.4px;font-size:25px;line-height:25px">ORDERS</div>
<svg style="position:absolute;left:2832.4px;top:406.4px" width="19.2" height="13.2" viewBox="-9.6 -6.6 19.2 13.2" fill="none" stroke="#111" stroke-width="2.5" stroke-linecap="round" stroke-linejoin="round"><path d="M-6.6 -3.3 L0 3.3 L6.6 -3.3"/></svg>
<div class="t b" style="letter-spacing:-0.64px;left:2898.5px;top:338.9px;font-size:23.3px;line-height:23.3px">Schema</div>
<div style="position:absolute;left:2898.5px;top:373px;width:487px;height:78.3px;background:#fafafa;border:2px solid #e3e3e3;border-radius:7px"></div>
<div class="t r" style="letter-spacing:0.12px;left:2919.0px;top:400.4px;font-size:25px;line-height:25px">PUBLIC</div>
<svg style="position:absolute;left:3336.4px;top:406.4px" width="19.2" height="13.2" viewBox="-9.6 -6.6 19.2 13.2" fill="none" stroke="#111" stroke-width="2.5" stroke-linecap="round" stroke-linejoin="round"><path d="M-6.6 -3.3 L0 3.3 L6.6 -3.3"/></svg>
<div style="position:absolute;left:2393px;top:482.6px;width:992.5px;height:1626px;background:#fff;border:2px solid #e0e0e0;border-radius:9px;overflow:hidden"><div style="position:absolute;left:0px;top:0px;width:76.5px;height:1057px;background:#fafafa;border-right:2px solid #e8e8e8"></div><div style="position:absolute;left:0px;top:1055px;width:992px;height:4px;background:#e2e2e2"></div><div style="position:absolute;left:0px;top:1059px;width:992px;height:77px;background:#fafafa;border-bottom:2px solid #e2e2e2"></div></div>
<div class="t r" style="left:2433.6px;transform:translateX(-50%);top:510.8px;font-size:25.88px;line-height:25.88px;font-family:'Liberation Mono',monospace">0</div>
<div class="t r" style="left:2492.2px;top:510.8px;font-size:25.88px;line-height:25.88px;font-family:'Liberation Mono',monospace;white-space:pre"><span style="color:#a21fa4">SELECT DISTINCT</span> date_trunc(<span style="color:#b4683c">'day'</span>, time) <span style="color:#a21fa4">AS</span> <span style="color:#b4683c">"Date"</span>,</div>
<div class="t r" style="left:2433.6px;transform:translateX(-50%);top:550.8px;font-size:25.88px;line-height:25.88px;font-family:'Liberation Mono',monospace">1</div>
<div class="t r" style="left:2492.2px;top:550.8px;font-size:25.88px;line-height:25.88px;font-family:'Liberation Mono',monospace;white-space:pre">  JSON_EXTRACT_PATH_TEXT(<span style="color:#a21fa4">data</span>, <span style="color:#b4683c">'w')</span> <span style="color:#a21fa4">AS</span> <span style="color:#b4683c">"UserId"</span>,</div>
<div class="t r" style="left:2433.6px;transform:translateX(-50%);top:590.8px;font-size:25.88px;line-height:25.88px;font-family:'Liberation Mono',monospace">2</div>
<div class="t r" style="left:2492.2px;top:590.8px;font-size:25.88px;line-height:25.88px;font-family:'Liberation Mono',monospace;white-space:pre">  <span style="color:#a21fa4">session</span></div>
<div class="t r" style="left:2433.6px;transform:translateX(-50%);top:630.8px;font-size:25.88px;line-height:25.88px;font-family:'Liberation Mono',monospace">3</div>
<div class="t r" style="left:2492.2px;top:630.8px;font-size:25.88px;line-height:25.88px;font-family:'Liberation Mono',monospace;white-space:pre"><span style="color:#a21fa4">FROM</span> clean_orders</div>
<div class="t r" style="left:2433.6px;transform:translateX(-50%);top:670.8px;font-size:25.88px;line-height:25.88px;font-family:'Liberation Mono',monospace">4</div>
<div class="t r" style="left:2492.2px;top:670.8px;font-size:25.88px;line-height:25.88px;font-family:'Liberation Mono',monospace;white-space:pre"><span style="color:#a21fa4">WHERE</span> event <span style="color:#a21fa4">NOT LIKE</span> <span style="color:#b4683c">'INT-%'</span></div>
<div class="t r" style="left:2433.6px;transform:translateX(-50%);top:710.8px;font-size:25.88px;line-height:25.88px;font-family:'Liberation Mono',monospace">5</div>
<div class="t r" style="left:2492.2px;top:710.8px;font-size:25.88px;line-height:25.88px;font-family:'Liberation Mono',monospace;white-space:pre">  <span style="color:#a21fa4">AND</span> <span style="color:#b4683c">"UserId"</span> &lt;&gt; <span style="color:#b4683c">''</span></div>
<div class="t r" style="left:2433.6px;transform:translateX(-50%);top:750.8px;font-size:25.88px;line-height:25.88px;font-family:'Liberation Mono',monospace">6</div>
<div class="t r" style="left:2492.2px;top:750.8px;font-size:25.88px;line-height:25.88px;font-family:'Liberation Mono',monospace;white-space:pre"><span style="color:#a21fa4">ORDER BY</span> <span style="color:#b4683c">"Date"</span></div>
<div class="t b" style="letter-spacing:-0.53px;left:2421.0px;top:1566.6px;font-size:27.2px;line-height:27.2px">Console</div>
<div style="position:absolute;left:3244px;top:1552px;width:122.5px;height:55.5px;background:#f0f0f0;border-radius:7px"></div>
<svg style="position:absolute;left:3260px;top:1566px" width="24" height="28" viewBox="3260 1566 24 28"><path d="M3266 1571.4 L3279.6 1580 L3266 1588.6 Z" fill="#111" stroke="#111" stroke-width="1.6" stroke-linejoin="round"/></svg>
<div class="t b" style="letter-spacing:-1.29px;left:3292.0px;top:1566.6px;font-size:27.2px;line-height:27.2px">Run</div>
<div class="t r" style="left:2421.0px;top:1648.2px;font-size:25.88px;line-height:25.88px;color:#9b9b9b;font-family:'Liberation Mono',monospace">Press Ctrl+Enter to execute query…</div>
<div style="position:absolute;left:3418px;top:80px;width:82px;height:2060px;background:#fafafa;border-left:2px solid #e0e0e0"></div>
<div style="position:absolute;left:3428px;top:230px;width:64px;height:64px;background:#dddddd;border-radius:9px"></div>
<svg style="position:absolute;left:3420px;top:80px" width="80" height="2060" viewBox="3420 80 80 2060" fill="none" stroke="#111" stroke-width="2.2" stroke-linecap="round" stroke-linejoin="round"><path d="M3449 115.3 L3443.4 121.9 L3449 128.4 M3471 115.3 L3476.6 121.9 L3471 128.4 M3464.2 113.8 L3455.6 130.6"/><path d="M3462.4 178 L3450.2 194 L3460 196.5 L3457.4 206.6 L3470.4 189.8 L3460.2 187.4 Z"/><ellipse cx="3460.4" cy="253.6" rx="13.9" ry="6.4"/><path d="M3446.5 253.6 V269.6 A13.9 6.4 0 0 0 3474.3 269.6 V253.6"/><path d="M3446.5 259 A13.9 6.4 0 0 0 3474.3 259 M3446.5 264.4 A13.9 6.4 0 0 0 3474.3 264.4"/><rect x="3446" y="317.6" width="28" height="28" stroke-linejoin="miter"/><path d="M3446 324.7 H3474 M3453 317.6 V345.6"/><path d="M3456.5 340.1 H3460.4 Q3468.2 340.1 3468.2 332.2 V328.2"/><path d="M3459.5 337.4 L3456.5 340.1 L3459.5 342.8"/><path d="M3465 331.4 L3468.2 328.2 L3471.4 331.4"/><rect x="3446" y="387.6" width="28" height="28" stroke-linejoin="miter"/><rect x="3450" y="403.6" width="3.9" height="8" rx="1.6"/><rect x="3458.1" y="393.6" width="3.9" height="18" rx="1.6"/><rect x="3466.1" y="397.6" width="3.9" height="14" rx="1.6"/><path d="M3457.6 2091.4 L3451.4 2097.8 L3457.6 2104.2 M3468 2091.4 L3461.8 2097.8 L3468 2104.2"/></svg>
</div>
</body></html>
